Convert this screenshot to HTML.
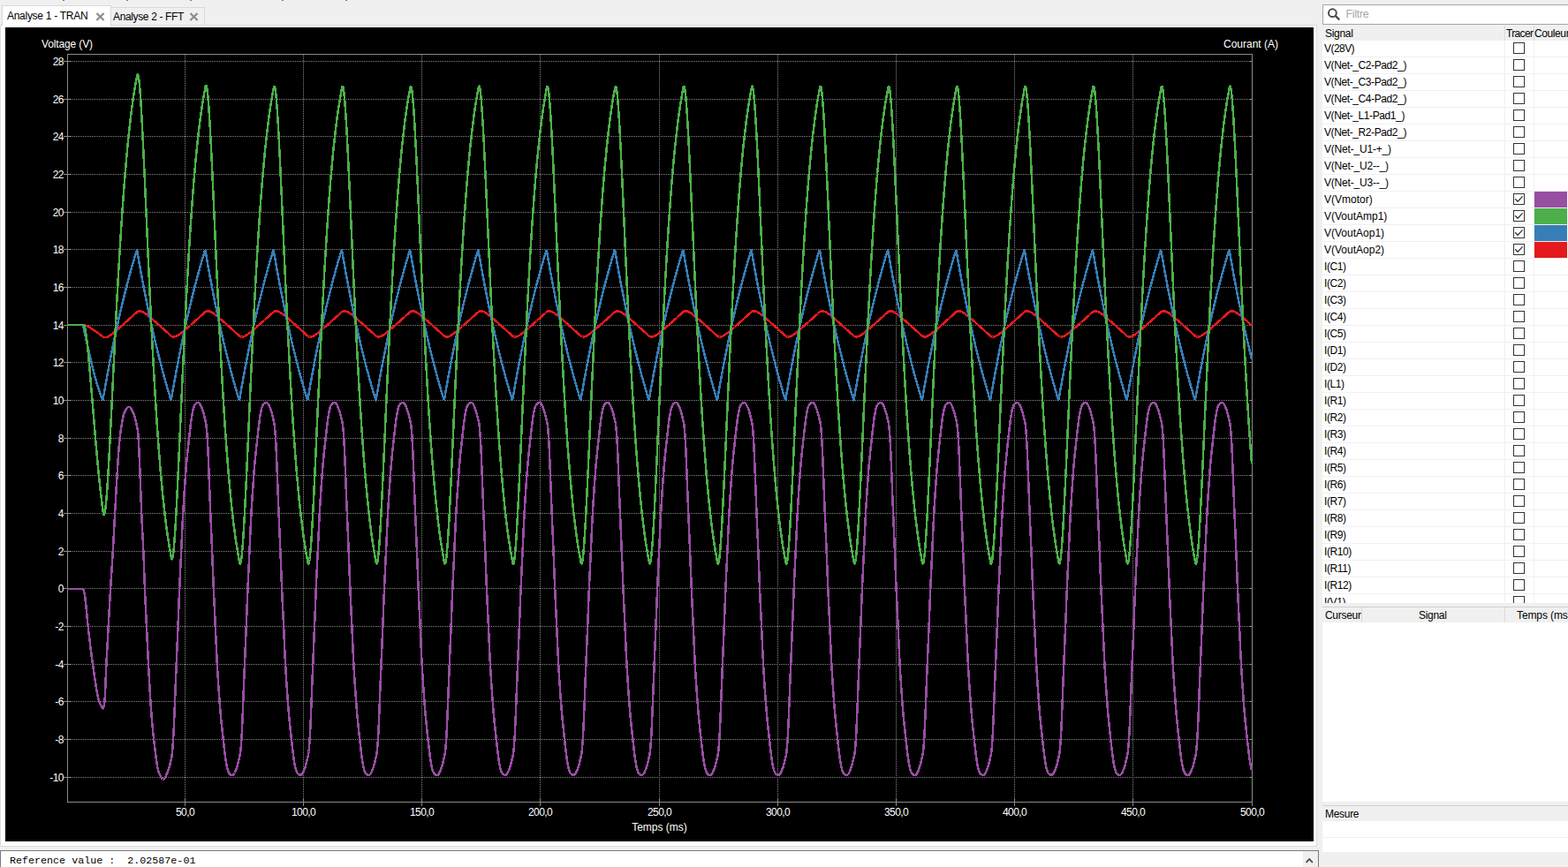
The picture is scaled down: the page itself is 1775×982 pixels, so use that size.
<!DOCTYPE html>
<html lang="fr">
<head>
<meta charset="utf-8">
<title>Simulateur</title>
<style>
*{box-sizing:border-box;margin:0;padding:0}
html,body{width:1775px;height:982px;overflow:hidden;background:#f0f0f0;font-family:"Liberation Sans",sans-serif;font-size:12px;color:#000}
.abs{position:absolute}
#topmarks i{position:absolute;top:0;height:1px;width:2px;background:#777}
#tab1{left:2px;top:6px;width:124px;height:23px;background:#fff;border:1px solid #d9d9d9;border-bottom:none;z-index:3}
#tab2{left:125px;top:8px;width:107px;height:20px;background:#f0f0f0;border:1px solid #d9d9d9;border-bottom:none;z-index:1}
.tab span.t{position:absolute;left:5px;top:4px;white-space:nowrap;font-size:12px;letter-spacing:-0.28px}
.tab svg{position:absolute}
#panel{left:0;top:28px;width:1491px;height:931px;background:#fff;border:1px solid #dcdcdc;z-index:2}
.plot{position:absolute;left:6px;top:31px;z-index:4;display:block}
#log{left:0;top:963px;width:1493px;height:22px;background:#fff;border:1px solid #7a7a7a}
#log .tx{position:absolute;left:10px;top:4px;font-family:"Liberation Mono",monospace;font-size:11.7px;white-space:pre;color:#000}
#log .sb{position:absolute;right:0;top:0;width:17px;height:20px;background:#f0f0f0}
#filter{left:1497px;top:5px;width:300px;height:23px;background:#fff;border:1px solid #a2a5ac}
#filter span{position:absolute;left:25.5px;top:2.5px;color:#a6a6a6;font-size:12.3px;letter-spacing:-0.25px}
#list{left:1497px;top:29px;width:278px;height:654px;background:#fff;overflow:hidden}
.hdr{position:absolute;left:0;top:0;width:100%;height:17px;background:#f0f0f0}
.hdr span{position:absolute;top:2px;white-space:nowrap;font-size:12px;letter-spacing:-0.3px}
.hdr i{position:absolute;top:0;width:1px;height:17px;background:#d9d9d9}
#rows{position:absolute;left:0;top:17px;width:100%}
.row{position:relative;height:19px;border-bottom:1px solid #f0f0f0}
.row .nm{position:absolute;left:2px;top:2px;white-space:nowrap;font-size:12px}
.row .cb{position:absolute;left:216px;top:2px;width:13px;height:13px;border:1px solid #333;background:#fff}
.row .cb svg{position:absolute;left:-1px;top:-1px}
.row .sw{position:absolute;left:240px;top:0;width:37px;height:18px}
.vl{position:absolute;top:17px;width:1px;height:640px;background:#f0f0f0}
#cur{left:1497px;top:687px;width:278px;height:221px;background:#fff;border-top:1px solid #d0d0d0}
#mes{left:1497px;top:912px;width:278px;height:53px;background:#fff;border-top:1px solid #d0d0d0}
</style>
</head>
<body>
<div id="topmarks"><i style="left:71px"></i><i style="left:143px"></i><i style="left:215px"></i><i style="left:319px"></i><i style="left:391px"></i></div>

<div id="tab1" class="abs tab"><span class="t">Analyse 1 - TRAN</span>
<svg width="11" height="10" viewBox="0 0 11 10" style="left:105px;top:6.5px"><path d="M1.4 1 L9.6 9 M9.6 1 L1.4 9" stroke="#8a8a8a" stroke-width="2.1" fill="none"/></svg></div>
<div id="tab2" class="abs tab"><span class="t" style="left:2px;top:3px;letter-spacing:-0.36px">Analyse 2 - FFT</span>
<svg width="11" height="10" viewBox="0 0 11 10" style="left:88px;top:4.5px"><path d="M1.4 1 L9.6 9 M9.6 1 L1.4 9" stroke="#8a8a8a" stroke-width="2.1" fill="none"/></svg></div>

<div id="panel" class="abs"></div>
<svg class="plot" width="1481" height="922" viewBox="0 0 1481 922" shape-rendering="crispEdges">
<rect x="0" y="0" width="1481" height="922" fill="#000"/>
<line x1="76" y1="849.5" x2="1411" y2="849.5" stroke="#888888" stroke-width="1" stroke-dasharray="1 1"/>
<line x1="66" y1="849.5" x2="75" y2="849.5" stroke="#8a8a8a" stroke-width="1"/>
<line x1="1408" y1="849.5" x2="1412" y2="849.5" stroke="#8a8a8a" stroke-width="1"/>
<line x1="76" y1="806.5" x2="1411" y2="806.5" stroke="#888888" stroke-width="1" stroke-dasharray="1 1"/>
<line x1="66" y1="806.5" x2="75" y2="806.5" stroke="#8a8a8a" stroke-width="1"/>
<line x1="1408" y1="806.5" x2="1412" y2="806.5" stroke="#8a8a8a" stroke-width="1"/>
<line x1="76" y1="763.5" x2="1411" y2="763.5" stroke="#888888" stroke-width="1" stroke-dasharray="1 1"/>
<line x1="66" y1="763.5" x2="75" y2="763.5" stroke="#8a8a8a" stroke-width="1"/>
<line x1="1408" y1="763.5" x2="1412" y2="763.5" stroke="#8a8a8a" stroke-width="1"/>
<line x1="76" y1="721.5" x2="1411" y2="721.5" stroke="#888888" stroke-width="1" stroke-dasharray="1 1"/>
<line x1="66" y1="721.5" x2="75" y2="721.5" stroke="#8a8a8a" stroke-width="1"/>
<line x1="1408" y1="721.5" x2="1412" y2="721.5" stroke="#8a8a8a" stroke-width="1"/>
<line x1="76" y1="678.5" x2="1411" y2="678.5" stroke="#888888" stroke-width="1" stroke-dasharray="1 1"/>
<line x1="66" y1="678.5" x2="75" y2="678.5" stroke="#8a8a8a" stroke-width="1"/>
<line x1="1408" y1="678.5" x2="1412" y2="678.5" stroke="#8a8a8a" stroke-width="1"/>
<line x1="76" y1="635.5" x2="1411" y2="635.5" stroke="#888888" stroke-width="1" stroke-dasharray="1 1"/>
<line x1="66" y1="635.5" x2="75" y2="635.5" stroke="#8a8a8a" stroke-width="1"/>
<line x1="1408" y1="635.5" x2="1412" y2="635.5" stroke="#8a8a8a" stroke-width="1"/>
<line x1="76" y1="593.5" x2="1411" y2="593.5" stroke="#888888" stroke-width="1" stroke-dasharray="1 1"/>
<line x1="66" y1="593.5" x2="75" y2="593.5" stroke="#8a8a8a" stroke-width="1"/>
<line x1="1408" y1="593.5" x2="1412" y2="593.5" stroke="#8a8a8a" stroke-width="1"/>
<line x1="76" y1="550.5" x2="1411" y2="550.5" stroke="#888888" stroke-width="1" stroke-dasharray="1 1"/>
<line x1="66" y1="550.5" x2="75" y2="550.5" stroke="#8a8a8a" stroke-width="1"/>
<line x1="1408" y1="550.5" x2="1412" y2="550.5" stroke="#8a8a8a" stroke-width="1"/>
<line x1="76" y1="507.5" x2="1411" y2="507.5" stroke="#888888" stroke-width="1" stroke-dasharray="1 1"/>
<line x1="66" y1="507.5" x2="75" y2="507.5" stroke="#8a8a8a" stroke-width="1"/>
<line x1="1408" y1="507.5" x2="1412" y2="507.5" stroke="#8a8a8a" stroke-width="1"/>
<line x1="76" y1="465.5" x2="1411" y2="465.5" stroke="#888888" stroke-width="1" stroke-dasharray="1 1"/>
<line x1="66" y1="465.5" x2="75" y2="465.5" stroke="#8a8a8a" stroke-width="1"/>
<line x1="1408" y1="465.5" x2="1412" y2="465.5" stroke="#8a8a8a" stroke-width="1"/>
<line x1="76" y1="422.5" x2="1411" y2="422.5" stroke="#888888" stroke-width="1" stroke-dasharray="1 1"/>
<line x1="66" y1="422.5" x2="75" y2="422.5" stroke="#8a8a8a" stroke-width="1"/>
<line x1="1408" y1="422.5" x2="1412" y2="422.5" stroke="#8a8a8a" stroke-width="1"/>
<line x1="76" y1="379.5" x2="1411" y2="379.5" stroke="#888888" stroke-width="1" stroke-dasharray="1 1"/>
<line x1="66" y1="379.5" x2="75" y2="379.5" stroke="#8a8a8a" stroke-width="1"/>
<line x1="1408" y1="379.5" x2="1412" y2="379.5" stroke="#8a8a8a" stroke-width="1"/>
<line x1="76" y1="337.5" x2="1411" y2="337.5" stroke="#888888" stroke-width="1" stroke-dasharray="1 1"/>
<line x1="66" y1="337.5" x2="75" y2="337.5" stroke="#8a8a8a" stroke-width="1"/>
<line x1="1408" y1="337.5" x2="1412" y2="337.5" stroke="#8a8a8a" stroke-width="1"/>
<line x1="76" y1="294.5" x2="1411" y2="294.5" stroke="#888888" stroke-width="1" stroke-dasharray="1 1"/>
<line x1="66" y1="294.5" x2="75" y2="294.5" stroke="#8a8a8a" stroke-width="1"/>
<line x1="1408" y1="294.5" x2="1412" y2="294.5" stroke="#8a8a8a" stroke-width="1"/>
<line x1="76" y1="251.5" x2="1411" y2="251.5" stroke="#888888" stroke-width="1" stroke-dasharray="1 1"/>
<line x1="66" y1="251.5" x2="75" y2="251.5" stroke="#8a8a8a" stroke-width="1"/>
<line x1="1408" y1="251.5" x2="1412" y2="251.5" stroke="#8a8a8a" stroke-width="1"/>
<line x1="76" y1="209.5" x2="1411" y2="209.5" stroke="#888888" stroke-width="1" stroke-dasharray="1 1"/>
<line x1="66" y1="209.5" x2="75" y2="209.5" stroke="#8a8a8a" stroke-width="1"/>
<line x1="1408" y1="209.5" x2="1412" y2="209.5" stroke="#8a8a8a" stroke-width="1"/>
<line x1="76" y1="166.5" x2="1411" y2="166.5" stroke="#888888" stroke-width="1" stroke-dasharray="1 1"/>
<line x1="66" y1="166.5" x2="75" y2="166.5" stroke="#8a8a8a" stroke-width="1"/>
<line x1="1408" y1="166.5" x2="1412" y2="166.5" stroke="#8a8a8a" stroke-width="1"/>
<line x1="76" y1="123.5" x2="1411" y2="123.5" stroke="#888888" stroke-width="1" stroke-dasharray="1 1"/>
<line x1="66" y1="123.5" x2="75" y2="123.5" stroke="#8a8a8a" stroke-width="1"/>
<line x1="1408" y1="123.5" x2="1412" y2="123.5" stroke="#8a8a8a" stroke-width="1"/>
<line x1="76" y1="81.5" x2="1411" y2="81.5" stroke="#888888" stroke-width="1" stroke-dasharray="1 1"/>
<line x1="66" y1="81.5" x2="75" y2="81.5" stroke="#8a8a8a" stroke-width="1"/>
<line x1="1408" y1="81.5" x2="1412" y2="81.5" stroke="#8a8a8a" stroke-width="1"/>
<line x1="76" y1="38.5" x2="1411" y2="38.5" stroke="#888888" stroke-width="1" stroke-dasharray="1 1"/>
<line x1="66" y1="38.5" x2="75" y2="38.5" stroke="#8a8a8a" stroke-width="1"/>
<line x1="1408" y1="38.5" x2="1412" y2="38.5" stroke="#8a8a8a" stroke-width="1"/>
<line x1="203.5" y1="31" x2="203.5" y2="873" stroke="#888888" stroke-width="1" stroke-dasharray="1 1"/>
<line x1="203.5" y1="873" x2="203.5" y2="882" stroke="#8a8a8a" stroke-width="1"/>
<line x1="337.5" y1="31" x2="337.5" y2="873" stroke="#888888" stroke-width="1" stroke-dasharray="1 1"/>
<line x1="337.5" y1="873" x2="337.5" y2="882" stroke="#8a8a8a" stroke-width="1"/>
<line x1="471.5" y1="31" x2="471.5" y2="873" stroke="#888888" stroke-width="1" stroke-dasharray="1 1"/>
<line x1="471.5" y1="873" x2="471.5" y2="882" stroke="#8a8a8a" stroke-width="1"/>
<line x1="605.5" y1="31" x2="605.5" y2="873" stroke="#888888" stroke-width="1" stroke-dasharray="1 1"/>
<line x1="605.5" y1="873" x2="605.5" y2="882" stroke="#8a8a8a" stroke-width="1"/>
<line x1="740.5" y1="31" x2="740.5" y2="873" stroke="#888888" stroke-width="1" stroke-dasharray="1 1"/>
<line x1="740.5" y1="873" x2="740.5" y2="882" stroke="#8a8a8a" stroke-width="1"/>
<line x1="874.5" y1="31" x2="874.5" y2="873" stroke="#888888" stroke-width="1" stroke-dasharray="1 1"/>
<line x1="874.5" y1="873" x2="874.5" y2="882" stroke="#8a8a8a" stroke-width="1"/>
<line x1="1008.5" y1="31" x2="1008.5" y2="873" stroke="#888888" stroke-width="1" stroke-dasharray="1 1"/>
<line x1="1008.5" y1="873" x2="1008.5" y2="882" stroke="#8a8a8a" stroke-width="1"/>
<line x1="1142.5" y1="31" x2="1142.5" y2="873" stroke="#888888" stroke-width="1" stroke-dasharray="1 1"/>
<line x1="1142.5" y1="873" x2="1142.5" y2="882" stroke="#8a8a8a" stroke-width="1"/>
<line x1="1276.5" y1="31" x2="1276.5" y2="873" stroke="#888888" stroke-width="1" stroke-dasharray="1 1"/>
<line x1="1276.5" y1="873" x2="1276.5" y2="882" stroke="#8a8a8a" stroke-width="1"/>
<line x1="1411.5" y1="31" x2="1411.5" y2="873" stroke="#888888" stroke-width="1" stroke-dasharray="1 1"/>
<line x1="1411.5" y1="873" x2="1411.5" y2="882" stroke="#8a8a8a" stroke-width="1"/>
<rect x="70.5" y="30.5" width="1341" height="847" fill="none" stroke="#8a8a8a" stroke-width="1"/>
<polyline fill="none" stroke="#e41a1c" stroke-width="2.5" stroke-linejoin="round" shape-rendering="crispEdges" points="70.0,337.2 70.5,337.2 71.0,337.2 71.5,337.2 72.0,337.2 72.5,337.2 73.0,337.2 73.5,337.2 74.0,337.2 74.5,337.2 75.0,337.2 75.5,337.2 76.0,337.2 76.5,337.2 77.0,337.2 77.5,337.2 78.0,337.2 78.5,337.2 79.0,337.2 79.5,337.2 80.0,337.2 80.5,337.2 81.0,337.2 81.5,337.2 82.0,337.2 82.5,337.2 83.0,337.2 83.5,337.2 84.0,337.2 84.5,337.2 85.0,337.2 85.5,337.2 86.0,337.2 86.5,337.2 87.0,337.2 87.5,337.2 88.0,337.2 88.5,337.2 89.0,337.2 89.5,337.3 90.0,337.4 90.5,337.5 91.0,337.7 91.5,337.8 92.0,338.0 92.5,338.2 93.0,338.5 93.5,338.7 94.0,339.0 94.5,339.2 95.0,339.5 95.5,339.8 96.0,340.1 96.5,340.4 97.0,340.7 97.5,341.0 98.0,341.4 98.5,341.7 99.0,342.0 99.5,342.4 100.0,342.7 100.5,343.0 101.0,343.4 101.5,343.7 102.0,344.1 102.5,344.5 103.0,344.8 103.5,345.2 104.0,345.6 104.5,345.9 105.0,346.3 105.5,346.7 106.0,347.0 106.5,347.4 107.0,347.8 107.5,348.1 108.0,348.5 108.5,348.9 109.0,349.3 109.5,349.7 110.0,350.0 110.5,350.4 111.0,350.7 111.5,350.9 112.0,351.0 112.5,351.1 113.0,351.1 113.5,351.1 114.0,351.0 114.5,350.9 115.0,350.8 115.5,350.6 116.0,350.4 116.5,350.1 117.0,349.9 117.5,349.6 118.0,349.3 118.5,348.9 119.0,348.6 119.5,348.3 120.0,347.9 120.5,347.5 121.0,347.2 121.5,346.8 122.0,346.4 122.5,346.0 123.0,345.6 123.5,345.2 124.0,344.8 124.5,344.3 125.0,343.9 125.5,343.5 126.0,343.1 126.5,342.6 127.0,342.2 127.5,341.8 128.0,341.3 128.5,340.9 129.0,340.4 129.5,340.0 130.0,339.6 130.5,339.1 131.0,338.7 131.5,338.2 132.0,337.8 132.5,337.3 133.0,336.9 133.5,336.4 134.0,336.0 134.5,335.5 135.0,335.1 135.5,334.6 136.0,334.2 136.5,333.7 137.0,333.3 137.5,332.8 138.0,332.4 138.5,331.9 139.0,331.5 139.5,331.0 140.0,330.6 140.5,330.1 141.0,329.7 141.5,329.2 142.0,328.8 142.5,328.3 143.0,327.9 143.5,327.4 144.0,327.0 144.5,326.5 145.0,326.1 145.5,325.6 146.0,325.2 146.5,324.7 147.0,324.3 147.5,323.8 148.0,323.3 148.5,322.9 149.0,322.4 149.5,322.1 150.0,321.8 150.5,321.6 151.0,321.4 151.5,321.3 152.0,321.3 152.5,321.3 153.0,321.4 153.5,321.5 154.0,321.7 154.5,321.9 155.0,322.1 155.5,322.3 156.0,322.6 156.5,322.8 157.0,323.1 157.5,323.4 158.0,323.8 158.5,324.1 159.0,324.4 159.5,324.8 160.0,325.2 160.5,325.6 161.0,325.9 161.5,326.3 162.0,326.7 162.5,327.1 163.0,327.6 163.5,328.0 164.0,328.4 164.5,328.8 165.0,329.2 165.5,329.7 166.0,330.1 166.5,330.5 167.0,330.9 167.5,331.4 168.0,331.8 168.5,332.3 169.0,332.7 169.5,333.1 170.0,333.6 170.5,334.0 171.0,334.5 171.5,334.9 172.0,335.4 172.5,335.8 173.0,336.2 173.5,336.7 174.0,337.1 174.5,337.6 175.0,338.0 175.5,338.5 176.0,338.9 176.5,339.4 177.0,339.8 177.5,340.3 178.0,340.7 178.5,341.2 179.0,341.6 179.5,342.1 180.0,342.5 180.5,343.0 181.0,343.4 181.5,343.9 182.0,344.3 182.5,344.8 183.0,345.2 183.5,345.7 184.0,346.1 184.5,346.6 185.0,347.0 185.5,347.5 186.0,347.9 186.5,348.4 187.0,348.8 187.5,349.3 188.0,349.7 188.5,350.0 189.0,350.2 189.5,350.4 190.0,350.5 190.5,350.5 191.0,350.5 191.5,350.4 192.0,350.3 192.5,350.2 193.0,350.0 193.5,349.8 194.0,349.6 194.5,349.4 195.0,349.1 195.5,348.8 196.0,348.5 196.5,348.2 197.0,347.8 197.5,347.5 198.0,347.1 198.5,346.8 199.0,346.4 199.5,346.0 200.0,345.6 200.5,345.2 201.0,344.8 201.5,344.4 202.0,344.0 202.5,343.6 203.0,343.1 203.5,342.7 204.0,342.3 204.5,341.9 205.0,341.4 205.5,341.0 206.0,340.6 206.5,340.1 207.0,339.7 207.5,339.2 208.0,338.8 208.5,338.4 209.0,337.9 209.5,337.5 210.0,337.0 210.5,336.6 211.0,336.1 211.5,335.7 212.0,335.3 212.5,334.8 213.0,334.4 213.5,333.9 214.0,333.5 214.5,333.0 215.0,332.6 215.5,332.1 216.0,331.7 216.5,331.2 217.0,330.8 217.5,330.3 218.0,329.9 218.5,329.4 219.0,329.0 219.5,328.5 220.0,328.1 220.5,327.6 221.0,327.2 221.5,326.7 222.0,326.3 222.5,325.8 223.0,325.4 223.5,324.9 224.0,324.5 224.5,324.0 225.0,323.6 225.5,323.1 226.0,322.7 226.5,322.2 227.0,321.9 227.5,321.6 228.0,321.5 228.5,321.4 229.0,321.3 229.5,321.3 230.0,321.4 230.5,321.4 231.0,321.6 231.5,321.7 232.0,321.9 232.5,322.1 233.0,322.4 233.5,322.7 234.0,322.9 234.5,323.2 235.0,323.6 235.5,323.9 236.0,324.2 236.5,324.6 237.0,325.0 237.5,325.3 238.0,325.7 238.5,326.1 239.0,326.5 239.5,326.9 240.0,327.3 240.5,327.7 241.0,328.1 241.5,328.6 242.0,329.0 242.5,329.4 243.0,329.8 243.5,330.3 244.0,330.7 244.5,331.1 245.0,331.6 245.5,332.0 246.0,332.4 246.5,332.9 247.0,333.3 247.5,333.8 248.0,334.2 248.5,334.7 249.0,335.1 249.5,335.5 250.0,336.0 250.5,336.4 251.0,336.9 251.5,337.3 252.0,337.8 252.5,338.2 253.0,338.7 253.5,339.1 254.0,339.6 254.5,340.0 255.0,340.5 255.5,340.9 256.0,341.4 256.5,341.8 257.0,342.3 257.5,342.7 258.0,343.2 258.5,343.6 259.0,344.1 259.5,344.5 260.0,345.0 260.5,345.4 261.0,345.9 261.5,346.3 262.0,346.8 262.5,347.2 263.0,347.7 263.5,348.1 264.0,348.6 264.5,349.0 265.0,349.5 265.5,349.8 266.0,350.1 266.5,350.3 267.0,350.4 267.5,350.5 268.0,350.5 268.5,350.5 269.0,350.4 269.5,350.3 270.0,350.1 270.5,349.9 271.0,349.7 271.5,349.5 272.0,349.2 272.5,349.0 273.0,348.7 273.5,348.3 274.0,348.0 274.5,347.7 275.0,347.3 275.5,347.0 276.0,346.6 276.5,346.2 277.0,345.8 277.5,345.4 278.0,345.0 278.5,344.6 279.0,344.2 279.5,343.8 280.0,343.4 280.5,343.0 281.0,342.5 281.5,342.1 282.0,341.7 282.5,341.2 283.0,340.8 283.5,340.4 284.0,339.9 284.5,339.5 285.0,339.1 285.5,338.6 286.0,338.2 286.5,337.7 287.0,337.3 287.5,336.8 288.0,336.4 288.5,335.9 289.0,335.5 289.5,335.1 290.0,334.6 290.5,334.2 291.0,333.7 291.5,333.3 292.0,332.8 292.5,332.4 293.0,331.9 293.5,331.5 294.0,331.0 294.5,330.6 295.0,330.1 295.5,329.7 296.0,329.2 296.5,328.8 297.0,328.3 297.5,327.9 298.0,327.4 298.5,327.0 299.0,326.5 299.5,326.1 300.0,325.6 300.5,325.2 301.0,324.7 301.5,324.3 302.0,323.8 302.5,323.4 303.0,322.9 303.5,322.5 304.0,322.1 304.5,321.8 305.0,321.6 305.5,321.4 306.0,321.3 306.5,321.3 307.0,321.3 307.5,321.4 308.0,321.5 308.5,321.6 309.0,321.8 309.5,322.0 310.0,322.2 310.5,322.5 311.0,322.8 311.5,323.1 312.0,323.4 312.5,323.7 313.0,324.0 313.5,324.4 314.0,324.7 314.5,325.1 315.0,325.5 315.5,325.9 316.0,326.3 316.5,326.7 317.0,327.1 317.5,327.5 318.0,327.9 318.5,328.3 319.0,328.7 319.5,329.2 320.0,329.6 320.5,330.0 321.0,330.5 321.5,330.9 322.0,331.3 322.5,331.8 323.0,332.2 323.5,332.6 324.0,333.1 324.5,333.5 325.0,334.0 325.5,334.4 326.0,334.9 326.5,335.3 327.0,335.7 327.5,336.2 328.0,336.6 328.5,337.1 329.0,337.5 329.5,338.0 330.0,338.4 330.5,338.9 331.0,339.3 331.5,339.8 332.0,340.2 332.5,340.7 333.0,341.1 333.5,341.6 334.0,342.0 334.5,342.5 335.0,342.9 335.5,343.4 336.0,343.8 336.5,344.3 337.0,344.7 337.5,345.2 338.0,345.6 338.5,346.1 339.0,346.5 339.5,347.0 340.0,347.4 340.5,347.9 341.0,348.3 341.5,348.8 342.0,349.2 342.5,349.6 343.0,350.0 343.5,350.2 344.0,350.4 344.5,350.5 345.0,350.5 345.5,350.5 346.0,350.5 346.5,350.4 347.0,350.2 347.5,350.1 348.0,349.9 348.5,349.6 349.0,349.4 349.5,349.1 350.0,348.8 350.5,348.5 351.0,348.2 351.5,347.9 352.0,347.5 352.5,347.2 353.0,346.8 353.5,346.4 354.0,346.0 354.5,345.6 355.0,345.3 355.5,344.8 356.0,344.4 356.5,344.0 357.0,343.6 357.5,343.2 358.0,342.8 358.5,342.3 359.0,341.9 359.5,341.5 360.0,341.0 360.5,340.6 361.0,340.2 361.5,339.7 362.0,339.3 362.5,338.9 363.0,338.4 363.5,338.0 364.0,337.5 364.5,337.1 365.0,336.6 365.5,336.2 366.0,335.8 366.5,335.3 367.0,334.9 367.5,334.4 368.0,334.0 368.5,333.5 369.0,333.1 369.5,332.6 370.0,332.2 370.5,331.7 371.0,331.3 371.5,330.8 372.0,330.4 372.5,329.9 373.0,329.5 373.5,329.0 374.0,328.6 374.5,328.1 375.0,327.7 375.5,327.2 376.0,326.8 376.5,326.3 377.0,325.9 377.5,325.4 378.0,325.0 378.5,324.5 379.0,324.1 379.5,323.6 380.0,323.2 380.5,322.7 381.0,322.3 381.5,321.9 382.0,321.7 382.5,321.5 383.0,321.4 383.5,321.3 384.0,321.3 384.5,321.3 385.0,321.4 385.5,321.6 386.0,321.7 386.5,321.9 387.0,322.1 387.5,322.4 388.0,322.6 388.5,322.9 389.0,323.2 389.5,323.5 390.0,323.8 390.5,324.2 391.0,324.5 391.5,324.9 392.0,325.3 392.5,325.7 393.0,326.1 393.5,326.5 394.0,326.9 394.5,327.3 395.0,327.7 395.5,328.1 396.0,328.5 396.5,328.9 397.0,329.4 397.5,329.8 398.0,330.2 398.5,330.6 399.0,331.1 399.5,331.5 400.0,332.0 400.5,332.4 401.0,332.8 401.5,333.3 402.0,333.7 402.5,334.2 403.0,334.6 403.5,335.0 404.0,335.5 404.5,335.9 405.0,336.4 405.5,336.8 406.0,337.3 406.5,337.7 407.0,338.2 407.5,338.6 408.0,339.1 408.5,339.5 409.0,340.0 409.5,340.4 410.0,340.9 410.5,341.3 411.0,341.8 411.5,342.2 412.0,342.7 412.5,343.1 413.0,343.6 413.5,344.0 414.0,344.5 414.5,344.9 415.0,345.4 415.5,345.8 416.0,346.3 416.5,346.7 417.0,347.2 417.5,347.6 418.0,348.1 418.5,348.5 419.0,349.0 419.5,349.4 420.0,349.8 420.5,350.1 421.0,350.3 421.5,350.4 422.0,350.5 422.5,350.5 423.0,350.5 423.5,350.4 424.0,350.3 424.5,350.2 425.0,350.0 425.5,349.8 426.0,349.5 426.5,349.3 427.0,349.0 427.5,348.7 428.0,348.4 428.5,348.1 429.0,347.7 429.5,347.4 430.0,347.0 430.5,346.6 431.0,346.3 431.5,345.9 432.0,345.5 432.5,345.1 433.0,344.7 433.5,344.3 434.0,343.8 434.5,343.4 435.0,343.0 435.5,342.6 436.0,342.2 436.5,341.7 437.0,341.3 437.5,340.9 438.0,340.4 438.5,340.0 439.0,339.5 439.5,339.1 440.0,338.7 440.5,338.2 441.0,337.8 441.5,337.3 442.0,336.9 442.5,336.4 443.0,336.0 443.5,335.6 444.0,335.1 444.5,334.7 445.0,334.2 445.5,333.8 446.0,333.3 446.5,332.9 447.0,332.4 447.5,332.0 448.0,331.5 448.5,331.1 449.0,330.6 449.5,330.2 450.0,329.7 450.5,329.3 451.0,328.8 451.5,328.4 452.0,327.9 452.5,327.5 453.0,327.0 453.5,326.6 454.0,326.1 454.5,325.7 455.0,325.2 455.5,324.8 456.0,324.3 456.5,323.9 457.0,323.4 457.5,323.0 458.0,322.5 458.5,322.1 459.0,321.8 459.5,321.6 460.0,321.4 460.5,321.3 461.0,321.3 461.5,321.3 462.0,321.4 462.5,321.5 463.0,321.6 463.5,321.8 464.0,322.0 464.5,322.2 465.0,322.5 465.5,322.7 466.0,323.0 466.5,323.3 467.0,323.7 467.5,324.0 468.0,324.3 468.5,324.7 469.0,325.1 469.5,325.5 470.0,325.8 470.5,326.2 471.0,326.6 471.5,327.0 472.0,327.4 472.5,327.9 473.0,328.3 473.5,328.7 474.0,329.1 474.5,329.5 475.0,330.0 475.5,330.4 476.0,330.8 476.5,331.3 477.0,331.7 477.5,332.1 478.0,332.6 478.5,333.0 479.0,333.5 479.5,333.9 480.0,334.4 480.5,334.8 481.0,335.2 481.5,335.7 482.0,336.1 482.5,336.6 483.0,337.0 483.5,337.5 484.0,337.9 484.5,338.4 485.0,338.8 485.5,339.3 486.0,339.7 486.5,340.2 487.0,340.6 487.5,341.1 488.0,341.5 488.5,342.0 489.0,342.4 489.5,342.9 490.0,343.3 490.5,343.8 491.0,344.2 491.5,344.7 492.0,345.1 492.5,345.6 493.0,346.0 493.5,346.5 494.0,346.9 494.5,347.4 495.0,347.8 495.5,348.3 496.0,348.7 496.5,349.2 497.0,349.6 497.5,349.9 498.0,350.2 498.5,350.4 499.0,350.5 499.5,350.5 500.0,350.5 500.5,350.5 501.0,350.4 501.5,350.2 502.0,350.1 502.5,349.9 503.0,349.7 503.5,349.4 504.0,349.2 504.5,348.9 505.0,348.6 505.5,348.2 506.0,347.9 506.5,347.6 507.0,347.2 507.5,346.8 508.0,346.5 508.5,346.1 509.0,345.7 509.5,345.3 510.0,344.9 510.5,344.5 511.0,344.1 511.5,343.7 512.0,343.2 512.5,342.8 513.0,342.4 513.5,342.0 514.0,341.5 514.5,341.1 515.0,340.7 515.5,340.2 516.0,339.8 516.5,339.4 517.0,338.9 517.5,338.5 518.0,338.0 518.5,337.6 519.0,337.1 519.5,336.7 520.0,336.3 520.5,335.8 521.0,335.4 521.5,334.9 522.0,334.5 522.5,334.0 523.0,333.6 523.5,333.1 524.0,332.7 524.5,332.2 525.0,331.8 525.5,331.3 526.0,330.9 526.5,330.4 527.0,330.0 527.5,329.5 528.0,329.1 528.5,328.6 529.0,328.2 529.5,327.7 530.0,327.3 530.5,326.8 531.0,326.4 531.5,325.9 532.0,325.5 532.5,325.0 533.0,324.6 533.5,324.1 534.0,323.7 534.5,323.2 535.0,322.8 535.5,322.3 536.0,322.0 536.5,321.7 537.0,321.5 537.5,321.4 538.0,321.3 538.5,321.3 539.0,321.3 539.5,321.4 540.0,321.5 540.5,321.7 541.0,321.9 541.5,322.1 542.0,322.3 542.5,322.6 543.0,322.9 543.5,323.2 544.0,323.5 544.5,323.8 545.0,324.1 545.5,324.5 546.0,324.9 546.5,325.2 547.0,325.6 547.5,326.0 548.0,326.4 548.5,326.8 549.0,327.2 549.5,327.6 550.0,328.0 550.5,328.5 551.0,328.9 551.5,329.3 552.0,329.7 552.5,330.2 553.0,330.6 553.5,331.0 554.0,331.5 554.5,331.9 555.0,332.3 555.5,332.8 556.0,333.2 556.5,333.7 557.0,334.1 557.5,334.5 558.0,335.0 558.5,335.4 559.0,335.9 559.5,336.3 560.0,336.8 560.5,337.2 561.0,337.7 561.5,338.1 562.0,338.6 562.5,339.0 563.0,339.5 563.5,339.9 564.0,340.4 564.5,340.8 565.0,341.3 565.5,341.7 566.0,342.2 566.5,342.6 567.0,343.1 567.5,343.5 568.0,344.0 568.5,344.4 569.0,344.9 569.5,345.3 570.0,345.8 570.5,346.2 571.0,346.7 571.5,347.1 572.0,347.6 572.5,348.0 573.0,348.5 573.5,348.9 574.0,349.4 574.5,349.7 575.0,350.0 575.5,350.3 576.0,350.4 576.5,350.5 577.0,350.5 577.5,350.5 578.0,350.4 578.5,350.3 579.0,350.2 579.5,350.0 580.0,349.8 580.5,349.6 581.0,349.3 581.5,349.0 582.0,348.7 582.5,348.4 583.0,348.1 583.5,347.8 584.0,347.4 584.5,347.1 585.0,346.7 585.5,346.3 586.0,345.9 586.5,345.5 587.0,345.1 587.5,344.7 588.0,344.3 588.5,343.9 589.0,343.5 589.5,343.1 590.0,342.6 590.5,342.2 591.0,341.8 591.5,341.3 592.0,340.9 592.5,340.5 593.0,340.0 593.5,339.6 594.0,339.2 594.5,338.7 595.0,338.3 595.5,337.8 596.0,337.4 596.5,336.9 597.0,336.5 597.5,336.1 598.0,335.6 598.5,335.2 599.0,334.7 599.5,334.3 600.0,333.8 600.5,333.4 601.0,332.9 601.5,332.5 602.0,332.0 602.5,331.6 603.0,331.1 603.5,330.7 604.0,330.2 604.5,329.8 605.0,329.3 605.5,328.9 606.0,328.4 606.5,328.0 607.0,327.5 607.5,327.1 608.0,326.6 608.5,326.2 609.0,325.7 609.5,325.3 610.0,324.8 610.5,324.4 611.0,323.9 611.5,323.5 612.0,323.0 612.5,322.6 613.0,322.2 613.5,321.8 614.0,321.6 614.5,321.4 615.0,321.3 615.5,321.3 616.0,321.3 616.5,321.4 617.0,321.5 617.5,321.6 618.0,321.8 618.5,322.0 619.0,322.2 619.5,322.4 620.0,322.7 620.5,323.0 621.0,323.3 621.5,323.6 622.0,324.0 622.5,324.3 623.0,324.7 623.5,325.0 624.0,325.4 624.5,325.8 625.0,326.2 625.5,326.6 626.0,327.0 626.5,327.4 627.0,327.8 627.5,328.2 628.0,328.6 628.5,329.1 629.0,329.5 629.5,329.9 630.0,330.3 630.5,330.8 631.0,331.2 631.5,331.7 632.0,332.1 632.5,332.5 633.0,333.0 633.5,333.4 634.0,333.9 634.5,334.3 635.0,334.7 635.5,335.2 636.0,335.6 636.5,336.1 637.0,336.5 637.5,337.0 638.0,337.4 638.5,337.9 639.0,338.3 639.5,338.8 640.0,339.2 640.5,339.7 641.0,340.1 641.5,340.6 642.0,341.0 642.5,341.5 643.0,341.9 643.5,342.4 644.0,342.8 644.5,343.3 645.0,343.7 645.5,344.2 646.0,344.6 646.5,345.1 647.0,345.5 647.5,346.0 648.0,346.4 648.5,346.9 649.0,347.3 649.5,347.8 650.0,348.2 650.5,348.7 651.0,349.1 651.5,349.5 652.0,349.9 652.5,350.1 653.0,350.3 653.5,350.5 654.0,350.5 654.5,350.5 655.0,350.5 655.5,350.4 656.0,350.3 656.5,350.1 657.0,349.9 657.5,349.7 658.0,349.5 658.5,349.2 659.0,348.9 659.5,348.6 660.0,348.3 660.5,348.0 661.0,347.6 661.5,347.3 662.0,346.9 662.5,346.5 663.0,346.1 663.5,345.7 664.0,345.3 664.5,344.9 665.0,344.5 665.5,344.1 666.0,343.7 666.5,343.3 667.0,342.9 667.5,342.4 668.0,342.0 668.5,341.6 669.0,341.2 669.5,340.7 670.0,340.3 670.5,339.8 671.0,339.4 671.5,339.0 672.0,338.5 672.5,338.1 673.0,337.6 673.5,337.2 674.0,336.7 674.5,336.3 675.0,335.9 675.5,335.4 676.0,335.0 676.5,334.5 677.0,334.1 677.5,333.6 678.0,333.2 678.5,332.7 679.0,332.3 679.5,331.8 680.0,331.4 680.5,330.9 681.0,330.5 681.5,330.0 682.0,329.6 682.5,329.1 683.0,328.7 683.5,328.2 684.0,327.8 684.5,327.3 685.0,326.9 685.5,326.4 686.0,326.0 686.5,325.5 687.0,325.1 687.5,324.6 688.0,324.2 688.5,323.7 689.0,323.3 689.5,322.8 690.0,322.4 690.5,322.0 691.0,321.7 691.5,321.5 692.0,321.4 692.5,321.3 693.0,321.3 693.5,321.3 694.0,321.4 694.5,321.5 695.0,321.7 695.5,321.8 696.0,322.1 696.5,322.3 697.0,322.6 697.5,322.8 698.0,323.1 698.5,323.4 699.0,323.8 699.5,324.1 700.0,324.5 700.5,324.8 701.0,325.2 701.5,325.6 702.0,326.0 702.5,326.4 703.0,326.8 703.5,327.2 704.0,327.6 704.5,328.0 705.0,328.4 705.5,328.8 706.0,329.3 706.5,329.7 707.0,330.1 707.5,330.5 708.0,331.0 708.5,331.4 709.0,331.8 709.5,332.3 710.0,332.7 710.5,333.2 711.0,333.6 711.5,334.1 712.0,334.5 712.5,334.9 713.0,335.4 713.5,335.8 714.0,336.3 714.5,336.7 715.0,337.2 715.5,337.6 716.0,338.1 716.5,338.5 717.0,339.0 717.5,339.4 718.0,339.9 718.5,340.3 719.0,340.8 719.5,341.2 720.0,341.7 720.5,342.1 721.0,342.6 721.5,343.0 722.0,343.5 722.5,343.9 723.0,344.4 723.5,344.8 724.0,345.3 724.5,345.7 725.0,346.2 725.5,346.6 726.0,347.1 726.5,347.5 727.0,348.0 727.5,348.4 728.0,348.9 728.5,349.3 729.0,349.7 729.5,350.0 730.0,350.2 730.5,350.4 731.0,350.5 731.5,350.5 732.0,350.5 732.5,350.4 733.0,350.3 733.5,350.2 734.0,350.0 734.5,349.8 735.0,349.6 735.5,349.3 736.0,349.1 736.5,348.8 737.0,348.5 737.5,348.1 738.0,347.8 738.5,347.5 739.0,347.1 739.5,346.7 740.0,346.3 740.5,346.0 741.0,345.6 741.5,345.2 742.0,344.8 742.5,344.4 743.0,343.9 743.5,343.5 744.0,343.1 744.5,342.7 745.0,342.3 745.5,341.8 746.0,341.4 746.5,341.0 747.0,340.5 747.5,340.1 748.0,339.7 748.5,339.2 749.0,338.8 749.5,338.3 750.0,337.9 750.5,337.4 751.0,337.0 751.5,336.6 752.0,336.1 752.5,335.7 753.0,335.2 753.5,334.8 754.0,334.3 754.5,333.9 755.0,333.4 755.5,333.0 756.0,332.5 756.5,332.1 757.0,331.6 757.5,331.2 758.0,330.7 758.5,330.3 759.0,329.8 759.5,329.4 760.0,328.9 760.5,328.5 761.0,328.0 761.5,327.6 762.0,327.1 762.5,326.7 763.0,326.2 763.5,325.8 764.0,325.3 764.5,324.9 765.0,324.4 765.5,324.0 766.0,323.5 766.5,323.1 767.0,322.6 767.5,322.2 768.0,321.9 768.5,321.6 769.0,321.5 769.5,321.4 770.0,321.3 770.5,321.3 771.0,321.4 771.5,321.4 772.0,321.6 772.5,321.7 773.0,321.9 773.5,322.2 774.0,322.4 774.5,322.7 775.0,323.0 775.5,323.3 776.0,323.6 776.5,323.9 777.0,324.3 777.5,324.6 778.0,325.0 778.5,325.4 779.0,325.7 779.5,326.1 780.0,326.5 780.5,326.9 781.0,327.3 781.5,327.8 782.0,328.2 782.5,328.6 783.0,329.0 783.5,329.4 784.0,329.9 784.5,330.3 785.0,330.7 785.5,331.2 786.0,331.6 786.5,332.0 787.0,332.5 787.5,332.9 788.0,333.4 788.5,333.8 789.0,334.2 789.5,334.7 790.0,335.1 790.5,335.6 791.0,336.0 791.5,336.5 792.0,336.9 792.5,337.4 793.0,337.8 793.5,338.3 794.0,338.7 794.5,339.2 795.0,339.6 795.5,340.1 796.0,340.5 796.5,341.0 797.0,341.4 797.5,341.9 798.0,342.3 798.5,342.8 799.0,343.2 799.5,343.7 800.0,344.1 800.5,344.6 801.0,345.0 801.5,345.5 802.0,345.9 802.5,346.4 803.0,346.8 803.5,347.3 804.0,347.7 804.5,348.2 805.0,348.6 805.5,349.1 806.0,349.5 806.5,349.9 807.0,350.1 807.5,350.3 808.0,350.4 808.5,350.5 809.0,350.5 809.5,350.5 810.0,350.4 810.5,350.3 811.0,350.1 811.5,349.9 812.0,349.7 812.5,349.5 813.0,349.2 813.5,348.9 814.0,348.6 814.5,348.3 815.0,348.0 815.5,347.7 816.0,347.3 816.5,346.9 817.0,346.6 817.5,346.2 818.0,345.8 818.5,345.4 819.0,345.0 819.5,344.6 820.0,344.2 820.5,343.8 821.0,343.3 821.5,342.9 822.0,342.5 822.5,342.1 823.0,341.6 823.5,341.2 824.0,340.8 824.5,340.3 825.0,339.9 825.5,339.5 826.0,339.0 826.5,338.6 827.0,338.1 827.5,337.7 828.0,337.2 828.5,336.8 829.0,336.4 829.5,335.9 830.0,335.5 830.5,335.0 831.0,334.6 831.5,334.1 832.0,333.7 832.5,333.2 833.0,332.8 833.5,332.3 834.0,331.9 834.5,331.4 835.0,331.0 835.5,330.5 836.0,330.1 836.5,329.6 837.0,329.2 837.5,328.7 838.0,328.3 838.5,327.8 839.0,327.4 839.5,326.9 840.0,326.5 840.5,326.0 841.0,325.6 841.5,325.1 842.0,324.7 842.5,324.2 843.0,323.8 843.5,323.3 844.0,322.9 844.5,322.4 845.0,322.1 845.5,321.8 846.0,321.5 846.5,321.4 847.0,321.3 847.5,321.3 848.0,321.3 848.5,321.4 849.0,321.5 849.5,321.6 850.0,321.8 850.5,322.0 851.0,322.3 851.5,322.5 852.0,322.8 852.5,323.1 853.0,323.4 853.5,323.7 854.0,324.1 854.5,324.4 855.0,324.8 855.5,325.1 856.0,325.5 856.5,325.9 857.0,326.3 857.5,326.7 858.0,327.1 858.5,327.5 859.0,327.9 859.5,328.4 860.0,328.8 860.5,329.2 861.0,329.6 861.5,330.1 862.0,330.5 862.5,330.9 863.0,331.4 863.5,331.8 864.0,332.2 864.5,332.7 865.0,333.1 865.5,333.6 866.0,334.0 866.5,334.4 867.0,334.9 867.5,335.3 868.0,335.8 868.5,336.2 869.0,336.7 869.5,337.1 870.0,337.6 870.5,338.0 871.0,338.5 871.5,338.9 872.0,339.4 872.5,339.8 873.0,340.3 873.5,340.7 874.0,341.2 874.5,341.6 875.0,342.1 875.5,342.5 876.0,343.0 876.5,343.4 877.0,343.9 877.5,344.3 878.0,344.8 878.5,345.2 879.0,345.7 879.5,346.1 880.0,346.6 880.5,347.0 881.0,347.5 881.5,347.9 882.0,348.4 882.5,348.8 883.0,349.3 883.5,349.7 884.0,350.0 884.5,350.2 885.0,350.4 885.5,350.5 886.0,350.5 886.5,350.5 887.0,350.4 887.5,350.3 888.0,350.2 888.5,350.0 889.0,349.8 889.5,349.6 890.0,349.4 890.5,349.1 891.0,348.8 891.5,348.5 892.0,348.2 892.5,347.8 893.0,347.5 893.5,347.1 894.0,346.8 894.5,346.4 895.0,346.0 895.5,345.6 896.0,345.2 896.5,344.8 897.0,344.4 897.5,344.0 898.0,343.6 898.5,343.2 899.0,342.7 899.5,342.3 900.0,341.9 900.5,341.4 901.0,341.0 901.5,340.6 902.0,340.1 902.5,339.7 903.0,339.3 903.5,338.8 904.0,338.4 904.5,337.9 905.0,337.5 905.5,337.1 906.0,336.6 906.5,336.2 907.0,335.7 907.5,335.3 908.0,334.8 908.5,334.4 909.0,333.9 909.5,333.5 910.0,333.0 910.5,332.6 911.0,332.1 911.5,331.7 912.0,331.2 912.5,330.8 913.0,330.3 913.5,329.9 914.0,329.4 914.5,329.0 915.0,328.5 915.5,328.1 916.0,327.6 916.5,327.2 917.0,326.7 917.5,326.3 918.0,325.8 918.5,325.4 919.0,324.9 919.5,324.5 920.0,324.0 920.5,323.6 921.0,323.1 921.5,322.7 922.0,322.3 922.5,321.9 923.0,321.7 923.5,321.5 924.0,321.4 924.5,321.3 925.0,321.3 925.5,321.3 926.0,321.4 926.5,321.6 927.0,321.7 927.5,321.9 928.0,322.1 928.5,322.4 929.0,322.6 929.5,322.9 930.0,323.2 930.5,323.5 931.0,323.9 931.5,324.2 932.0,324.6 932.5,324.9 933.0,325.3 933.5,325.7 934.0,326.1 934.5,326.5 935.0,326.9 935.5,327.3 936.0,327.7 936.5,328.1 937.0,328.5 937.5,329.0 938.0,329.4 938.5,329.8 939.0,330.2 939.5,330.7 940.0,331.1 940.5,331.5 941.0,332.0 941.5,332.4 942.0,332.9 942.5,333.3 943.0,333.8 943.5,334.2 944.0,334.6 944.5,335.1 945.0,335.5 945.5,336.0 946.0,336.4 946.5,336.9 947.0,337.3 947.5,337.8 948.0,338.2 948.5,338.7 949.0,339.1 949.5,339.6 950.0,340.0 950.5,340.5 951.0,340.9 951.5,341.4 952.0,341.8 952.5,342.3 953.0,342.7 953.5,343.2 954.0,343.6 954.5,344.1 955.0,344.5 955.5,345.0 956.0,345.4 956.5,345.9 957.0,346.3 957.5,346.8 958.0,347.2 958.5,347.7 959.0,348.1 959.5,348.6 960.0,349.0 960.5,349.4 961.0,349.8 961.5,350.1 962.0,350.3 962.5,350.4 963.0,350.5 963.5,350.5 964.0,350.5 964.5,350.4 965.0,350.3 965.5,350.1 966.0,350.0 966.5,349.7 967.0,349.5 967.5,349.3 968.0,349.0 968.5,348.7 969.0,348.4 969.5,348.0 970.0,347.7 970.5,347.3 971.0,347.0 971.5,346.6 972.0,346.2 972.5,345.8 973.0,345.4 973.5,345.0 974.0,344.6 974.5,344.2 975.0,343.8 975.5,343.4 976.0,343.0 976.5,342.5 977.0,342.1 977.5,341.7 978.0,341.3 978.5,340.8 979.0,340.4 979.5,340.0 980.0,339.5 980.5,339.1 981.0,338.6 981.5,338.2 982.0,337.7 982.5,337.3 983.0,336.9 983.5,336.4 984.0,336.0 984.5,335.5 985.0,335.1 985.5,334.6 986.0,334.2 986.5,333.7 987.0,333.3 987.5,332.8 988.0,332.4 988.5,331.9 989.0,331.5 989.5,331.0 990.0,330.6 990.5,330.1 991.0,329.7 991.5,329.2 992.0,328.8 992.5,328.3 993.0,327.9 993.5,327.4 994.0,327.0 994.5,326.5 995.0,326.1 995.5,325.6 996.0,325.2 996.5,324.7 997.0,324.3 997.5,323.8 998.0,323.4 998.5,322.9 999.0,322.5 999.5,322.1 1000.0,321.8 1000.5,321.6 1001.0,321.4 1001.5,321.3 1002.0,321.3 1002.5,321.3 1003.0,321.4 1003.5,321.5 1004.0,321.6 1004.5,321.8 1005.0,322.0 1005.5,322.2 1006.0,322.5 1006.5,322.8 1007.0,323.1 1007.5,323.4 1008.0,323.7 1008.5,324.0 1009.0,324.4 1009.5,324.7 1010.0,325.1 1010.5,325.5 1011.0,325.9 1011.5,326.3 1012.0,326.7 1012.5,327.1 1013.0,327.5 1013.5,327.9 1014.0,328.3 1014.5,328.7 1015.0,329.1 1015.5,329.6 1016.0,330.0 1016.5,330.4 1017.0,330.9 1017.5,331.3 1018.0,331.7 1018.5,332.2 1019.0,332.6 1019.5,333.1 1020.0,333.5 1020.5,333.9 1021.0,334.4 1021.5,334.8 1022.0,335.3 1022.5,335.7 1023.0,336.2 1023.5,336.6 1024.0,337.1 1024.5,337.5 1025.0,338.0 1025.5,338.4 1026.0,338.9 1026.5,339.3 1027.0,339.8 1027.5,340.2 1028.0,340.7 1028.5,341.1 1029.0,341.6 1029.5,342.0 1030.0,342.5 1030.5,342.9 1031.0,343.4 1031.5,343.8 1032.0,344.3 1032.5,344.7 1033.0,345.2 1033.5,345.6 1034.0,346.1 1034.5,346.5 1035.0,347.0 1035.5,347.4 1036.0,347.9 1036.5,348.3 1037.0,348.8 1037.5,349.2 1038.0,349.6 1038.5,349.9 1039.0,350.2 1039.5,350.4 1040.0,350.5 1040.5,350.5 1041.0,350.5 1041.5,350.5 1042.0,350.4 1042.5,350.2 1043.0,350.1 1043.5,349.9 1044.0,349.6 1044.5,349.4 1045.0,349.1 1045.5,348.8 1046.0,348.5 1046.5,348.2 1047.0,347.9 1047.5,347.5 1048.0,347.2 1048.5,346.8 1049.0,346.4 1049.5,346.1 1050.0,345.7 1050.5,345.3 1051.0,344.9 1051.5,344.5 1052.0,344.0 1052.5,343.6 1053.0,343.2 1053.5,342.8 1054.0,342.4 1054.5,341.9 1055.0,341.5 1055.5,341.1 1056.0,340.6 1056.5,340.2 1057.0,339.8 1057.5,339.3 1058.0,338.9 1058.5,338.4 1059.0,338.0 1059.5,337.5 1060.0,337.1 1060.5,336.7 1061.0,336.2 1061.5,335.8 1062.0,335.3 1062.5,334.9 1063.0,334.4 1063.5,334.0 1064.0,333.5 1064.5,333.1 1065.0,332.6 1065.5,332.2 1066.0,331.7 1066.5,331.3 1067.0,330.8 1067.5,330.4 1068.0,329.9 1068.5,329.5 1069.0,329.0 1069.5,328.6 1070.0,328.1 1070.5,327.7 1071.0,327.2 1071.5,326.8 1072.0,326.3 1072.5,325.9 1073.0,325.4 1073.5,325.0 1074.0,324.5 1074.5,324.1 1075.0,323.6 1075.5,323.2 1076.0,322.7 1076.5,322.3 1077.0,322.0 1077.5,321.7 1078.0,321.5 1078.5,321.4 1079.0,321.3 1079.5,321.3 1080.0,321.3 1080.5,321.4 1081.0,321.5 1081.5,321.7 1082.0,321.9 1082.5,322.1 1083.0,322.3 1083.5,322.6 1084.0,322.9 1084.5,323.2 1085.0,323.5 1085.5,323.8 1086.0,324.2 1086.5,324.5 1087.0,324.9 1087.5,325.3 1088.0,325.7 1088.5,326.0 1089.0,326.4 1089.5,326.8 1090.0,327.2 1090.5,327.7 1091.0,328.1 1091.5,328.5 1092.0,328.9 1092.5,329.3 1093.0,329.8 1093.5,330.2 1094.0,330.6 1094.5,331.1 1095.0,331.5 1095.5,331.9 1096.0,332.4 1096.5,332.8 1097.0,333.3 1097.5,333.7 1098.0,334.1 1098.5,334.6 1099.0,335.0 1099.5,335.5 1100.0,335.9 1100.5,336.4 1101.0,336.8 1101.5,337.3 1102.0,337.7 1102.5,338.2 1103.0,338.6 1103.5,339.1 1104.0,339.5 1104.5,340.0 1105.0,340.4 1105.5,340.9 1106.0,341.3 1106.5,341.7 1107.0,342.2 1107.5,342.6 1108.0,343.1 1108.5,343.5 1109.0,344.0 1109.5,344.4 1110.0,344.9 1110.5,345.3 1111.0,345.8 1111.5,346.2 1112.0,346.7 1112.5,347.2 1113.0,347.6 1113.5,348.1 1114.0,348.5 1114.5,349.0 1115.0,349.4 1115.5,349.8 1116.0,350.1 1116.5,350.3 1117.0,350.4 1117.5,350.5 1118.0,350.5 1118.5,350.5 1119.0,350.4 1119.5,350.3 1120.0,350.2 1120.5,350.0 1121.0,349.8 1121.5,349.5 1122.0,349.3 1122.5,349.0 1123.0,348.7 1123.5,348.4 1124.0,348.1 1124.5,347.7 1125.0,347.4 1125.5,347.0 1126.0,346.7 1126.5,346.3 1127.0,345.9 1127.5,345.5 1128.0,345.1 1128.5,344.7 1129.0,344.3 1129.5,343.9 1130.0,343.4 1130.5,343.0 1131.0,342.6 1131.5,342.2 1132.0,341.7 1132.5,341.3 1133.0,340.9 1133.5,340.4 1134.0,340.0 1134.5,339.6 1135.0,339.1 1135.5,338.7 1136.0,338.2 1136.5,337.8 1137.0,337.4 1137.5,336.9 1138.0,336.5 1138.5,336.0 1139.0,335.6 1139.5,335.1 1140.0,334.7 1140.5,334.2 1141.0,333.8 1141.5,333.3 1142.0,332.9 1142.5,332.4 1143.0,332.0 1143.5,331.5 1144.0,331.1 1144.5,330.6 1145.0,330.2 1145.5,329.7 1146.0,329.3 1146.5,328.8 1147.0,328.4 1147.5,327.9 1148.0,327.5 1148.5,327.0 1149.0,326.6 1149.5,326.1 1150.0,325.7 1150.5,325.2 1151.0,324.8 1151.5,324.3 1152.0,323.9 1152.5,323.4 1153.0,323.0 1153.5,322.5 1154.0,322.1 1154.5,321.8 1155.0,321.6 1155.5,321.4 1156.0,321.3 1156.5,321.3 1157.0,321.3 1157.5,321.4 1158.0,321.5 1158.5,321.6 1159.0,321.8 1159.5,322.0 1160.0,322.2 1160.5,322.5 1161.0,322.7 1161.5,323.0 1162.0,323.3 1162.5,323.6 1163.0,324.0 1163.5,324.3 1164.0,324.7 1164.5,325.1 1165.0,325.4 1165.5,325.8 1166.0,326.2 1166.5,326.6 1167.0,327.0 1167.5,327.4 1168.0,327.8 1168.5,328.3 1169.0,328.7 1169.5,329.1 1170.0,329.5 1170.5,330.0 1171.0,330.4 1171.5,330.8 1172.0,331.3 1172.5,331.7 1173.0,332.1 1173.5,332.6 1174.0,333.0 1174.5,333.4 1175.0,333.9 1175.5,334.3 1176.0,334.8 1176.5,335.2 1177.0,335.7 1177.5,336.1 1178.0,336.6 1178.5,337.0 1179.0,337.5 1179.5,337.9 1180.0,338.4 1180.5,338.8 1181.0,339.3 1181.5,339.7 1182.0,340.1 1182.5,340.6 1183.0,341.0 1183.5,341.5 1184.0,341.9 1184.5,342.4 1185.0,342.8 1185.5,343.3 1186.0,343.7 1186.5,344.2 1187.0,344.6 1187.5,345.1 1188.0,345.5 1188.5,346.0 1189.0,346.4 1189.5,346.9 1190.0,347.3 1190.5,347.8 1191.0,348.2 1191.5,348.7 1192.0,349.2 1192.5,349.6 1193.0,349.9 1193.5,350.2 1194.0,350.3 1194.5,350.5 1195.0,350.5 1195.5,350.5 1196.0,350.5 1196.5,350.4 1197.0,350.2 1197.5,350.1 1198.0,349.9 1198.5,349.7 1199.0,349.4 1199.5,349.2 1200.0,348.9 1200.5,348.6 1201.0,348.3 1201.5,347.9 1202.0,347.6 1202.5,347.2 1203.0,346.9 1203.5,346.5 1204.0,346.1 1204.5,345.7 1205.0,345.3 1205.5,344.9 1206.0,344.5 1206.5,344.1 1207.0,343.7 1207.5,343.3 1208.0,342.8 1208.5,342.4 1209.0,342.0 1209.5,341.6 1210.0,341.1 1210.5,340.7 1211.0,340.2 1211.5,339.8 1212.0,339.4 1212.5,338.9 1213.0,338.5 1213.5,338.0 1214.0,337.6 1214.5,337.2 1215.0,336.7 1215.5,336.3 1216.0,335.8 1216.5,335.4 1217.0,334.9 1217.5,334.5 1218.0,334.0 1218.5,333.6 1219.0,333.1 1219.5,332.7 1220.0,332.2 1220.5,331.8 1221.0,331.3 1221.5,330.9 1222.0,330.4 1222.5,330.0 1223.0,329.5 1223.5,329.1 1224.0,328.6 1224.5,328.2 1225.0,327.7 1225.5,327.3 1226.0,326.8 1226.5,326.4 1227.0,325.9 1227.5,325.5 1228.0,325.0 1228.5,324.6 1229.0,324.1 1229.5,323.7 1230.0,323.2 1230.5,322.8 1231.0,322.3 1231.5,322.0 1232.0,321.7 1232.5,321.5 1233.0,321.4 1233.5,321.3 1234.0,321.3 1234.5,321.3 1235.0,321.4 1235.5,321.5 1236.0,321.7 1236.5,321.9 1237.0,322.1 1237.5,322.3 1238.0,322.6 1238.5,322.9 1239.0,323.2 1239.5,323.5 1240.0,323.8 1240.5,324.1 1241.0,324.5 1241.5,324.9 1242.0,325.2 1242.5,325.6 1243.0,326.0 1243.5,326.4 1244.0,326.8 1244.5,327.2 1245.0,327.6 1245.5,328.0 1246.0,328.4 1246.5,328.9 1247.0,329.3 1247.5,329.7 1248.0,330.1 1248.5,330.6 1249.0,331.0 1249.5,331.4 1250.0,331.9 1250.5,332.3 1251.0,332.8 1251.5,333.2 1252.0,333.6 1252.5,334.1 1253.0,334.5 1253.5,335.0 1254.0,335.4 1254.5,335.9 1255.0,336.3 1255.5,336.8 1256.0,337.2 1256.5,337.7 1257.0,338.1 1257.5,338.6 1258.0,339.0 1258.5,339.4 1259.0,339.9 1259.5,340.3 1260.0,340.8 1260.5,341.2 1261.0,341.7 1261.5,342.1 1262.0,342.6 1262.5,343.0 1263.0,343.5 1263.5,343.9 1264.0,344.4 1264.5,344.8 1265.0,345.3 1265.5,345.7 1266.0,346.2 1266.5,346.6 1267.0,347.1 1267.5,347.5 1268.0,348.0 1268.5,348.4 1269.0,348.9 1269.5,349.3 1270.0,349.7 1270.5,350.0 1271.0,350.3 1271.5,350.4 1272.0,350.5 1272.5,350.5 1273.0,350.5 1273.5,350.4 1274.0,350.3 1274.5,350.2 1275.0,350.0 1275.5,349.8 1276.0,349.6 1276.5,349.3 1277.0,349.0 1277.5,348.7 1278.0,348.4 1278.5,348.1 1279.0,347.8 1279.5,347.4 1280.0,347.1 1280.5,346.7 1281.0,346.3 1281.5,345.9 1282.0,345.5 1282.5,345.1 1283.0,344.7 1283.5,344.3 1284.0,343.9 1284.5,343.5 1285.0,343.1 1285.5,342.7 1286.0,342.2 1286.5,341.8 1287.0,341.4 1287.5,340.9 1288.0,340.5 1288.5,340.1 1289.0,339.6 1289.5,339.2 1290.0,338.7 1290.5,338.3 1291.0,337.9 1291.5,337.4 1292.0,337.0 1292.5,336.5 1293.0,336.1 1293.5,335.6 1294.0,335.2 1294.5,334.7 1295.0,334.3 1295.5,333.8 1296.0,333.4 1296.5,332.9 1297.0,332.5 1297.5,332.0 1298.0,331.6 1298.5,331.1 1299.0,330.7 1299.5,330.2 1300.0,329.8 1300.5,329.3 1301.0,328.9 1301.5,328.4 1302.0,328.0 1302.5,327.5 1303.0,327.1 1303.5,326.6 1304.0,326.2 1304.5,325.7 1305.0,325.3 1305.5,324.8 1306.0,324.4 1306.5,323.9 1307.0,323.5 1307.5,323.0 1308.0,322.6 1308.5,322.2 1309.0,321.9 1309.5,321.6 1310.0,321.4 1310.5,321.3 1311.0,321.3 1311.5,321.3 1312.0,321.4 1312.5,321.5 1313.0,321.6 1313.5,321.8 1314.0,322.0 1314.5,322.2 1315.0,322.4 1315.5,322.7 1316.0,323.0 1316.5,323.3 1317.0,323.6 1317.5,323.9 1318.0,324.3 1318.5,324.6 1319.0,325.0 1319.5,325.4 1320.0,325.8 1320.5,326.2 1321.0,326.6 1321.5,327.0 1322.0,327.4 1322.5,327.8 1323.0,328.2 1323.5,328.6 1324.0,329.0 1324.5,329.5 1325.0,329.9 1325.5,330.3 1326.0,330.8 1326.5,331.2 1327.0,331.6 1327.5,332.1 1328.0,332.5 1328.5,333.0 1329.0,333.4 1329.5,333.8 1330.0,334.3 1330.5,334.7 1331.0,335.2 1331.5,335.6 1332.0,336.1 1332.5,336.5 1333.0,337.0 1333.5,337.4 1334.0,337.9 1334.5,338.3 1335.0,338.7 1335.5,339.2 1336.0,339.6 1336.5,340.1 1337.0,340.5 1337.5,341.0 1338.0,341.4 1338.5,341.9 1339.0,342.3 1339.5,342.8 1340.0,343.2 1340.5,343.7 1341.0,344.1 1341.5,344.6 1342.0,345.0 1342.5,345.5 1343.0,345.9 1343.5,346.4 1344.0,346.8 1344.5,347.3 1345.0,347.7 1345.5,348.2 1346.0,348.6 1346.5,349.1 1347.0,349.5 1347.5,349.9 1348.0,350.1 1348.5,350.3 1349.0,350.4 1349.5,350.5 1350.0,350.5 1350.5,350.5 1351.0,350.4 1351.5,350.3 1352.0,350.1 1352.5,349.9 1353.0,349.7 1353.5,349.5 1354.0,349.2 1354.5,348.9 1355.0,348.6 1355.5,348.3 1356.0,348.0 1356.5,347.6 1357.0,347.3 1357.5,346.9 1358.0,346.5 1358.5,346.1 1359.0,345.8 1359.5,345.4 1360.0,345.0 1360.5,344.6 1361.0,344.1 1361.5,343.7 1362.0,343.3 1362.5,342.9 1363.0,342.5 1363.5,342.0 1364.0,341.6 1364.5,341.2 1365.0,340.7 1365.5,340.3 1366.0,339.9 1366.5,339.4 1367.0,339.0 1367.5,338.5 1368.0,338.1 1368.5,337.7 1369.0,337.2 1369.5,336.8 1370.0,336.3 1370.5,335.9 1371.0,335.4 1371.5,335.0 1372.0,334.5 1372.5,334.1 1373.0,333.6 1373.5,333.2 1374.0,332.7 1374.5,332.3 1375.0,331.8 1375.5,331.4 1376.0,330.9 1376.5,330.5 1377.0,330.0 1377.5,329.6 1378.0,329.1 1378.5,328.7 1379.0,328.2 1379.5,327.8 1380.0,327.3 1380.5,326.9 1381.0,326.4 1381.5,326.0 1382.0,325.5 1382.5,325.1 1383.0,324.6 1383.5,324.2 1384.0,323.7 1384.5,323.3 1385.0,322.8 1385.5,322.4 1386.0,322.0 1386.5,321.7 1387.0,321.5 1387.5,321.4 1388.0,321.3 1388.5,321.3 1389.0,321.3 1389.5,321.4 1390.0,321.5 1390.5,321.7 1391.0,321.8 1391.5,322.1 1392.0,322.3 1392.5,322.5 1393.0,322.8 1393.5,323.1 1394.0,323.4 1394.5,323.8 1395.0,324.1 1395.5,324.4 1396.0,324.8 1396.5,325.2 1397.0,325.6 1397.5,325.9 1398.0,326.3 1398.5,326.7 1399.0,327.1 1399.5,327.6 1400.0,328.0 1400.5,328.4 1401.0,328.8 1401.5,329.2 1402.0,329.7 1402.5,330.1 1403.0,330.5 1403.5,331.0 1404.0,331.4 1404.5,331.8 1405.0,332.3 1405.5,332.7 1406.0,333.1 1406.5,333.6 1407.0,334.0 1407.5,334.5 1408.0,334.9 1408.5,335.4 1409.0,335.8 1409.5,336.3 1410.0,336.7 1410.5,337.2 1411.0,337.6"/>
<polyline fill="none" stroke="#377eb8" stroke-width="2.5" stroke-linejoin="round" shape-rendering="crispEdges" points="70.0,337.2 70.5,337.2 71.0,337.2 71.5,337.2 72.0,337.2 72.5,337.2 73.0,337.2 73.5,337.2 74.0,337.2 74.5,337.2 75.0,337.2 75.5,337.2 76.0,337.2 76.5,337.2 77.0,337.2 77.5,337.2 78.0,337.2 78.5,337.2 79.0,337.2 79.5,337.2 80.0,337.2 80.5,337.2 81.0,337.2 81.5,337.2 82.0,337.2 82.5,337.2 83.0,337.2 83.5,337.2 84.0,337.2 84.5,337.2 85.0,337.2 85.5,337.2 86.0,337.2 86.5,337.2 87.0,337.2 87.5,337.2 88.0,338.1 88.5,340.2 89.0,342.4 89.5,344.6 90.0,346.8 90.5,348.9 91.0,351.1 91.5,353.3 92.0,355.5 92.5,357.7 93.0,359.8 93.5,362.0 94.0,364.2 94.5,366.4 95.0,368.5 95.5,370.7 96.0,372.9 96.5,375.1 97.0,377.3 97.5,379.4 98.0,381.6 98.5,383.8 99.0,385.9 99.5,387.9 100.0,389.9 100.5,391.9 101.0,393.8 101.5,395.7 102.0,397.5 102.5,399.3 103.0,401.0 103.5,402.7 104.0,404.4 104.5,406.0 105.0,407.6 105.5,409.2 106.0,410.7 106.5,412.1 107.0,413.6 107.5,415.0 108.0,416.4 108.5,417.7 109.0,419.0 109.5,420.3 110.0,421.6 110.5,422.0 111.0,419.0 111.5,416.1 112.0,413.3 112.5,410.4 113.0,407.6 113.5,404.8 114.0,402.0 114.5,399.2 115.0,396.5 115.5,393.7 116.0,391.0 116.5,388.4 117.0,385.7 117.5,383.1 118.0,380.4 118.5,377.8 119.0,375.3 119.5,372.7 120.0,370.1 120.5,367.6 121.0,365.1 121.5,362.6 122.0,360.2 122.5,357.7 123.0,355.3 123.5,352.9 124.0,350.5 124.5,348.1 125.0,345.8 125.5,343.5 126.0,341.1 126.5,338.9 127.0,336.6 127.5,334.3 128.0,332.1 128.5,329.8 129.0,327.6 129.5,325.4 130.0,323.3 130.5,321.1 131.0,319.0 131.5,316.8 132.0,314.7 132.5,312.6 133.0,310.6 133.5,308.5 134.0,306.5 134.5,304.4 135.0,302.4 135.5,300.4 136.0,298.4 136.5,296.5 137.0,294.5 137.5,292.6 138.0,290.7 138.5,288.7 139.0,286.9 139.5,285.0 140.0,283.1 140.5,281.3 141.0,279.4 141.5,277.6 142.0,275.8 142.5,274.0 143.0,272.2 143.5,270.5 144.0,268.7 144.5,267.0 145.0,265.3 145.5,263.6 146.0,261.9 146.5,260.2 147.0,258.5 147.5,256.8 148.0,255.2 148.5,253.6 149.0,251.9 149.5,254.5 150.0,257.4 150.5,260.3 151.0,263.2 151.5,266.0 152.0,268.8 152.5,271.6 153.0,274.4 153.5,277.1 154.0,279.9 154.5,282.6 155.0,285.3 155.5,287.9 156.0,290.6 156.5,293.2 157.0,295.8 157.5,298.4 158.0,301.0 158.5,303.5 159.0,306.0 159.5,308.6 160.0,311.0 160.5,313.5 161.0,316.0 161.5,318.4 162.0,320.8 162.5,323.2 163.0,325.6 163.5,327.9 164.0,330.3 164.5,332.6 165.0,334.9 165.5,337.2 166.0,339.4 166.5,341.7 167.0,343.9 167.5,346.1 168.0,348.3 168.5,350.5 169.0,352.7 169.5,354.8 170.0,356.9 170.5,359.1 171.0,361.2 171.5,363.2 172.0,365.3 172.5,367.4 173.0,369.4 173.5,371.4 174.0,373.4 174.5,375.4 175.0,377.4 175.5,379.3 176.0,381.3 176.5,383.2 177.0,385.1 177.5,387.0 178.0,388.9 178.5,390.7 179.0,392.6 179.5,394.4 180.0,396.3 180.5,398.1 181.0,399.9 181.5,401.6 182.0,403.4 182.5,405.2 183.0,406.9 183.5,408.6 184.0,410.3 184.5,412.0 185.0,413.7 185.5,415.4 186.0,417.1 186.5,418.7 187.0,420.4 187.5,422.0 188.0,420.7 188.5,417.8 189.0,414.9 189.5,412.0 190.0,409.2 190.5,406.3 191.0,403.5 191.5,400.8 192.0,398.0 192.5,395.3 193.0,392.6 193.5,389.9 194.0,387.2 194.5,384.5 195.0,381.9 195.5,379.3 196.0,376.7 196.5,374.1 197.0,371.6 197.5,369.0 198.0,366.5 198.5,364.0 199.0,361.6 199.5,359.1 200.0,356.7 200.5,354.2 201.0,351.9 201.5,349.5 202.0,347.1 202.5,344.8 203.0,342.4 203.5,340.1 204.0,337.8 204.5,335.6 205.0,333.3 205.5,331.1 206.0,328.9 206.5,326.7 207.0,324.5 207.5,322.3 208.0,320.2 208.5,318.0 209.0,315.9 209.5,313.8 210.0,311.7 210.5,309.6 211.0,307.6 211.5,305.6 212.0,303.5 212.5,301.5 213.0,299.5 213.5,297.6 214.0,295.6 214.5,293.7 215.0,291.7 215.5,289.8 216.0,287.9 216.5,286.0 217.0,284.2 217.5,282.3 218.0,280.5 218.5,278.6 219.0,276.8 219.5,275.0 220.0,273.2 220.5,271.5 221.0,269.7 221.5,268.0 222.0,266.2 222.5,264.5 223.0,262.8 223.5,261.1 224.0,259.4 224.5,257.8 225.0,256.1 225.5,254.5 226.0,252.9 226.5,252.9 227.0,255.8 227.5,258.7 228.0,261.6 228.5,264.4 229.0,267.2 229.5,270.1 230.0,272.8 230.5,275.6 231.0,278.3 231.5,281.1 232.0,283.8 232.5,286.4 233.0,289.1 233.5,291.7 234.0,294.4 234.5,297.0 235.0,299.5 235.5,302.1 236.0,304.6 236.5,307.1 237.0,309.6 237.5,312.1 238.0,314.6 238.5,317.0 239.0,319.5 239.5,321.9 240.0,324.2 240.5,326.6 241.0,329.0 241.5,331.3 242.0,333.6 242.5,335.9 243.0,338.2 243.5,340.4 244.0,342.7 244.5,344.9 245.0,347.1 245.5,349.3 246.0,351.5 246.5,353.6 247.0,355.8 247.5,357.9 248.0,360.0 248.5,362.1 249.0,364.1 249.5,366.2 250.0,368.2 250.5,370.3 251.0,372.3 251.5,374.3 252.0,376.3 252.5,378.2 253.0,380.2 253.5,382.1 254.0,384.0 254.5,385.9 255.0,387.8 255.5,389.7 256.0,391.6 256.5,393.4 257.0,395.2 257.5,397.1 258.0,398.9 258.5,400.6 259.0,402.4 259.5,404.2 260.0,405.9 260.5,407.7 261.0,409.4 261.5,411.1 262.0,412.8 262.5,414.5 263.0,416.1 263.5,417.8 264.0,419.4 264.5,421.1 265.0,422.3 265.5,419.4 266.0,416.5 266.5,413.6 267.0,410.8 267.5,407.9 268.0,405.1 268.5,402.3 269.0,399.5 269.5,396.8 270.0,394.1 270.5,391.4 271.0,388.7 271.5,386.0 272.0,383.4 272.5,380.7 273.0,378.1 273.5,375.6 274.0,373.0 274.5,370.5 275.0,367.9 275.5,365.4 276.0,362.9 276.5,360.5 277.0,358.0 277.5,355.6 278.0,353.2 278.5,350.8 279.0,348.4 279.5,346.1 280.0,343.7 280.5,341.4 281.0,339.1 281.5,336.8 282.0,334.6 282.5,332.3 283.0,330.1 283.5,327.9 284.0,325.7 284.5,323.5 285.0,321.4 285.5,319.2 286.0,317.1 286.5,315.0 287.0,312.9 287.5,310.8 288.0,308.7 288.5,306.7 289.0,304.7 289.5,302.7 290.0,300.7 290.5,298.7 291.0,296.7 291.5,294.7 292.0,292.8 292.5,290.9 293.0,289.0 293.5,287.1 294.0,285.2 294.5,283.3 295.0,281.5 295.5,279.7 296.0,277.8 296.5,276.0 297.0,274.2 297.5,272.5 298.0,270.7 298.5,268.9 299.0,267.2 299.5,265.5 300.0,263.8 300.5,262.1 301.0,260.4 301.5,258.7 302.0,257.0 302.5,255.4 303.0,253.8 303.5,252.1 304.0,254.2 304.5,257.1 305.0,260.0 305.5,262.8 306.0,265.7 306.5,268.5 307.0,271.3 307.5,274.1 308.0,276.8 308.5,279.5 309.0,282.3 309.5,284.9 310.0,287.6 310.5,290.3 311.0,292.9 311.5,295.5 312.0,298.1 312.5,300.7 313.0,303.2 313.5,305.7 314.0,308.3 314.5,310.7 315.0,313.2 315.5,315.7 316.0,318.1 316.5,320.5 317.0,322.9 317.5,325.3 318.0,327.6 318.5,330.0 319.0,332.3 319.5,334.6 320.0,336.9 320.5,339.2 321.0,341.4 321.5,343.6 322.0,345.9 322.5,348.1 323.0,350.2 323.5,352.4 324.0,354.6 324.5,356.7 325.0,358.8 325.5,360.9 326.0,363.0 326.5,365.1 327.0,367.1 327.5,369.1 328.0,371.2 328.5,373.2 329.0,375.2 329.5,377.1 330.0,379.1 330.5,381.0 331.0,383.0 331.5,384.9 332.0,386.8 332.5,388.6 333.0,390.5 333.5,392.4 334.0,394.2 334.5,396.0 335.0,397.8 335.5,399.6 336.0,401.4 336.5,403.2 337.0,405.0 337.5,406.7 338.0,408.4 338.5,410.1 339.0,411.8 339.5,413.5 340.0,415.2 340.5,416.9 341.0,418.5 341.5,420.2 342.0,421.8 342.5,421.0 343.0,418.1 343.5,415.2 344.0,412.4 344.5,409.5 345.0,406.7 345.5,403.9 346.0,401.1 346.5,398.3 347.0,395.6 347.5,392.9 348.0,390.2 348.5,387.5 349.0,384.8 349.5,382.2 350.0,379.6 350.5,377.0 351.0,374.4 351.5,371.9 352.0,369.3 352.5,366.8 353.0,364.3 353.5,361.9 354.0,359.4 354.5,357.0 355.0,354.5 355.5,352.1 356.0,349.8 356.5,347.4 357.0,345.0 357.5,342.7 358.0,340.4 358.5,338.1 359.0,335.8 359.5,333.6 360.0,331.4 360.5,329.1 361.0,326.9 361.5,324.7 362.0,322.6 362.5,320.4 363.0,318.3 363.5,316.2 364.0,314.1 364.5,312.0 365.0,309.9 365.5,307.8 366.0,305.8 366.5,303.8 367.0,301.8 367.5,299.8 368.0,297.8 368.5,295.8 369.0,293.9 369.5,292.0 370.0,290.0 370.5,288.1 371.0,286.3 371.5,284.4 372.0,282.5 372.5,280.7 373.0,278.9 373.5,277.0 374.0,275.2 374.5,273.4 375.0,271.7 375.5,269.9 376.0,268.2 376.5,266.4 377.0,264.7 377.5,263.0 378.0,261.3 378.5,259.6 379.0,258.0 379.5,256.3 380.0,254.7 380.5,253.0 381.0,252.5 381.5,255.4 382.0,258.3 382.5,261.2 383.0,264.1 383.5,266.9 384.0,269.7 384.5,272.5 385.0,275.3 385.5,278.0 386.0,280.7 386.5,283.4 387.0,286.1 387.5,288.8 388.0,291.4 388.5,294.0 389.0,296.6 389.5,299.2 390.0,301.8 390.5,304.3 391.0,306.8 391.5,309.3 392.0,311.8 392.5,314.3 393.0,316.7 393.5,319.2 394.0,321.6 394.5,324.0 395.0,326.3 395.5,328.7 396.0,331.0 396.5,333.3 397.0,335.6 397.5,337.9 398.0,340.2 398.5,342.4 399.0,344.6 399.5,346.8 400.0,349.0 400.5,351.2 401.0,353.4 401.5,355.5 402.0,357.6 402.5,359.7 403.0,361.8 403.5,363.9 404.0,366.0 404.5,368.0 405.0,370.0 405.5,372.0 406.0,374.0 406.5,376.0 407.0,378.0 407.5,379.9 408.0,381.9 408.5,383.8 409.0,385.7 409.5,387.6 410.0,389.5 410.5,391.3 411.0,393.2 411.5,395.0 412.0,396.8 412.5,398.6 413.0,400.4 413.5,402.2 414.0,404.0 414.5,405.7 415.0,407.5 415.5,409.2 416.0,410.9 416.5,412.6 417.0,414.3 417.5,415.9 418.0,417.6 418.5,419.2 419.0,420.9 419.5,422.5 420.0,419.7 420.5,416.8 421.0,414.0 421.5,411.1 422.0,408.3 422.5,405.4 423.0,402.7 423.5,399.9 424.0,397.1 424.5,394.4 425.0,391.7 425.5,389.0 426.0,386.3 426.5,383.7 427.0,381.1 427.5,378.5 428.0,375.9 428.5,373.3 429.0,370.8 429.5,368.2 430.0,365.7 430.5,363.2 431.0,360.8 431.5,358.3 432.0,355.9 432.5,353.5 433.0,351.1 433.5,348.7 434.0,346.4 434.5,344.0 435.0,341.7 435.5,339.4 436.0,337.1 436.5,334.9 437.0,332.6 437.5,330.4 438.0,328.2 438.5,326.0 439.0,323.8 439.5,321.6 440.0,319.5 440.5,317.3 441.0,315.2 441.5,313.1 442.0,311.1 442.5,309.0 443.0,306.9 443.5,304.9 444.0,302.9 444.5,300.9 445.0,298.9 445.5,296.9 446.0,295.0 446.5,293.0 447.0,291.1 447.5,289.2 448.0,287.3 448.5,285.4 449.0,283.6 449.5,281.7 450.0,279.9 450.5,278.1 451.0,276.2 451.5,274.4 452.0,272.7 452.5,270.9 453.0,269.1 453.5,267.4 454.0,265.7 454.5,264.0 455.0,262.3 455.5,260.6 456.0,258.9 456.5,257.2 457.0,255.6 457.5,254.0 458.0,252.3 458.5,253.8 459.0,256.7 459.5,259.6 460.0,262.5 460.5,265.3 461.0,268.1 461.5,270.9 462.0,273.7 462.5,276.5 463.0,279.2 463.5,281.9 464.0,284.6 464.5,287.3 465.0,290.0 465.5,292.6 466.0,295.2 466.5,297.8 467.0,300.4 467.5,302.9 468.0,305.4 468.5,308.0 469.0,310.4 469.5,312.9 470.0,315.4 470.5,317.8 471.0,320.2 471.5,322.6 472.0,325.0 472.5,327.4 473.0,329.7 473.5,332.0 474.0,334.3 474.5,336.6 475.0,338.9 475.5,341.1 476.0,343.4 476.5,345.6 477.0,347.8 477.5,350.0 478.0,352.2 478.5,354.3 479.0,356.4 479.5,358.6 480.0,360.7 480.5,362.7 481.0,364.8 481.5,366.9 482.0,368.9 482.5,370.9 483.0,372.9 483.5,374.9 484.0,376.9 484.5,378.8 485.0,380.8 485.5,382.7 486.0,384.6 486.5,386.5 487.0,388.4 487.5,390.3 488.0,392.1 488.5,394.0 489.0,395.8 489.5,397.6 490.0,399.4 490.5,401.2 491.0,403.0 491.5,404.7 492.0,406.5 492.5,408.2 493.0,409.9 493.5,411.6 494.0,413.3 494.5,415.0 495.0,416.7 495.5,418.3 496.0,420.0 496.5,421.6 497.0,421.4 497.5,418.5 498.0,415.6 498.5,412.7 499.0,409.8 499.5,407.0 500.0,404.2 500.5,401.4 501.0,398.7 501.5,395.9 502.0,393.2 502.5,390.5 503.0,387.8 503.5,385.2 504.0,382.5 504.5,379.9 505.0,377.3 505.5,374.7 506.0,372.2 506.5,369.6 507.0,367.1 507.5,364.6 508.0,362.1 508.5,359.7 509.0,357.2 509.5,354.8 510.0,352.4 510.5,350.0 511.0,347.7 511.5,345.3 512.0,343.0 512.5,340.7 513.0,338.4 513.5,336.1 514.0,333.9 514.5,331.6 515.0,329.4 515.5,327.2 516.0,325.0 516.5,322.8 517.0,320.7 517.5,318.5 518.0,316.4 518.5,314.3 519.0,312.2 519.5,310.1 520.0,308.1 520.5,306.0 521.0,304.0 521.5,302.0 522.0,300.0 522.5,298.0 523.0,296.1 523.5,294.1 524.0,292.2 524.5,290.3 525.0,288.4 525.5,286.5 526.0,284.6 526.5,282.7 527.0,280.9 527.5,279.1 528.0,277.3 528.5,275.5 529.0,273.7 529.5,271.9 530.0,270.1 530.5,268.4 531.0,266.6 531.5,264.9 532.0,263.2 532.5,261.5 533.0,259.8 533.5,258.2 534.0,256.5 534.5,254.9 535.0,253.2 535.5,252.2 536.0,255.1 536.5,258.0 537.0,260.9 537.5,263.7 538.0,266.6 538.5,269.4 539.0,272.2 539.5,274.9 540.0,277.7 540.5,280.4 541.0,283.1 541.5,285.8 542.0,288.5 542.5,291.1 543.0,293.7 543.5,296.3 544.0,298.9 544.5,301.5 545.0,304.0 545.5,306.5 546.0,309.1 546.5,311.5 547.0,314.0 547.5,316.4 548.0,318.9 548.5,321.3 549.0,323.7 549.5,326.0 550.0,328.4 550.5,330.7 551.0,333.0 551.5,335.3 552.0,337.6 552.5,339.9 553.0,342.1 553.5,344.4 554.0,346.6 554.5,348.8 555.0,350.9 555.5,353.1 556.0,355.2 556.5,357.4 557.0,359.5 557.5,361.6 558.0,363.7 558.5,365.7 559.0,367.8 559.5,369.8 560.0,371.8 560.5,373.8 561.0,375.8 561.5,377.8 562.0,379.7 562.5,381.6 563.0,383.6 563.5,385.5 564.0,387.4 564.5,389.2 565.0,391.1 565.5,393.0 566.0,394.8 566.5,396.6 567.0,398.4 567.5,400.2 568.0,402.0 568.5,403.8 569.0,405.5 569.5,407.2 570.0,409.0 570.5,410.7 571.0,412.4 571.5,414.1 572.0,415.7 572.5,417.4 573.0,419.0 573.5,420.7 574.0,422.3 574.5,420.1 575.0,417.2 575.5,414.3 576.0,411.4 576.5,408.6 577.0,405.8 577.5,403.0 578.0,400.2 578.5,397.5 579.0,394.7 579.5,392.0 580.0,389.3 580.5,386.7 581.0,384.0 581.5,381.4 582.0,378.8 582.5,376.2 583.0,373.6 583.5,371.1 584.0,368.5 584.5,366.0 585.0,363.5 585.5,361.1 586.0,358.6 586.5,356.2 587.0,353.8 587.5,351.4 588.0,349.0 588.5,346.6 589.0,344.3 589.5,342.0 590.0,339.7 590.5,337.4 591.0,335.1 591.5,332.9 592.0,330.6 592.5,328.4 593.0,326.2 593.5,324.0 594.0,321.9 594.5,319.7 595.0,317.6 595.5,315.5 596.0,313.4 596.5,311.3 597.0,309.2 597.5,307.2 598.0,305.2 598.5,303.1 599.0,301.1 599.5,299.1 600.0,297.2 600.5,295.2 601.0,293.3 601.5,291.3 602.0,289.4 602.5,287.5 603.0,285.7 603.5,283.8 604.0,281.9 604.5,280.1 605.0,278.3 605.5,276.5 606.0,274.7 606.5,272.9 607.0,271.1 607.5,269.4 608.0,267.6 608.5,265.9 609.0,264.2 609.5,262.5 610.0,260.8 610.5,259.1 611.0,257.4 611.5,255.8 612.0,254.2 612.5,252.5 613.0,253.5 613.5,256.4 614.0,259.3 614.5,262.1 615.0,265.0 615.5,267.8 616.0,270.6 616.5,273.4 617.0,276.2 617.5,278.9 618.0,281.6 618.5,284.3 619.0,287.0 619.5,289.6 620.0,292.3 620.5,294.9 621.0,297.5 621.5,300.0 622.0,302.6 622.5,305.1 623.0,307.7 623.5,310.1 624.0,312.6 624.5,315.1 625.0,317.5 625.5,319.9 626.0,322.3 626.5,324.7 627.0,327.1 627.5,329.4 628.0,331.7 628.5,334.1 629.0,336.3 629.5,338.6 630.0,340.9 630.5,343.1 631.0,345.3 631.5,347.5 632.0,349.7 632.5,351.9 633.0,354.0 633.5,356.2 634.0,358.3 634.5,360.4 635.0,362.5 635.5,364.6 636.0,366.6 636.5,368.7 637.0,370.7 637.5,372.7 638.0,374.7 638.5,376.7 639.0,378.6 639.5,380.6 640.0,382.5 640.5,384.4 641.0,386.3 641.5,388.2 642.0,390.1 642.5,391.9 643.0,393.8 643.5,395.6 644.0,397.4 644.5,399.2 645.0,401.0 645.5,402.8 646.0,404.5 646.5,406.3 647.0,408.0 647.5,409.7 648.0,411.4 648.5,413.1 649.0,414.8 649.5,416.5 650.0,418.1 650.5,419.8 651.0,421.4 651.5,421.7 652.0,418.8 652.5,415.9 653.0,413.0 653.5,410.2 654.0,407.4 654.5,404.5 655.0,401.8 655.5,399.0 656.0,396.3 656.5,393.5 657.0,390.8 657.5,388.1 658.0,385.5 658.5,382.8 659.0,380.2 659.5,377.6 660.0,375.0 660.5,372.5 661.0,369.9 661.5,367.4 662.0,364.9 662.5,362.4 663.0,360.0 663.5,357.5 664.0,355.1 664.5,352.7 665.0,350.3 665.5,348.0 666.0,345.6 666.5,343.3 667.0,341.0 667.5,338.7 668.0,336.4 668.5,334.1 669.0,331.9 669.5,329.7 670.0,327.5 670.5,325.3 671.0,323.1 671.5,320.9 672.0,318.8 672.5,316.7 673.0,314.6 673.5,312.5 674.0,310.4 674.5,308.3 675.0,306.3 675.5,304.3 676.0,302.3 676.5,300.3 677.0,298.3 677.5,296.3 678.0,294.4 678.5,292.4 679.0,290.5 679.5,288.6 680.0,286.7 680.5,284.8 681.0,283.0 681.5,281.1 682.0,279.3 682.5,277.5 683.0,275.7 683.5,273.9 684.0,272.1 684.5,270.3 685.0,268.6 685.5,266.9 686.0,265.1 686.5,263.4 687.0,261.7 687.5,260.0 688.0,258.4 688.5,256.7 689.0,255.1 689.5,253.4 690.0,251.8 690.5,254.7 691.0,257.7 691.5,260.5 692.0,263.4 692.5,266.2 693.0,269.0 693.5,271.8 694.0,274.6 694.5,277.4 695.0,280.1 695.5,282.8 696.0,285.5 696.5,288.1 697.0,290.8 697.5,293.4 698.0,296.0 698.5,298.6 699.0,301.2 699.5,303.7 700.0,306.2 700.5,308.8 701.0,311.2 701.5,313.7 702.0,316.2 702.5,318.6 703.0,321.0 703.5,323.4 704.0,325.8 704.5,328.1 705.0,330.4 705.5,332.8 706.0,335.1 706.5,337.3 707.0,339.6 707.5,341.9 708.0,344.1 708.5,346.3 709.0,348.5 709.5,350.7 710.0,352.8 710.5,355.0 711.0,357.1 711.5,359.2 712.0,361.3 712.5,363.4 713.0,365.5 713.5,367.5 714.0,369.5 714.5,371.6 715.0,373.6 715.5,375.5 716.0,377.5 716.5,379.5 717.0,381.4 717.5,383.3 718.0,385.2 718.5,387.1 719.0,389.0 719.5,390.9 720.0,392.7 720.5,394.6 721.0,396.4 721.5,398.2 722.0,400.0 722.5,401.8 723.0,403.5 723.5,405.3 724.0,407.0 724.5,408.8 725.0,410.5 725.5,412.2 726.0,413.9 726.5,415.5 727.0,417.2 727.5,418.8 728.0,420.5 728.5,422.1 729.0,420.4 729.5,417.5 730.0,414.6 730.5,411.8 731.0,408.9 731.5,406.1 732.0,403.3 732.5,400.5 733.0,397.8 733.5,395.0 734.0,392.3 734.5,389.6 735.0,387.0 735.5,384.3 736.0,381.7 736.5,379.1 737.0,376.5 737.5,373.9 738.0,371.4 738.5,368.8 739.0,366.3 739.5,363.8 740.0,361.4 740.5,358.9 741.0,356.5 741.5,354.1 742.0,351.7 742.5,349.3 743.0,346.9 743.5,344.6 744.0,342.3 744.5,340.0 745.0,337.7 745.5,335.4 746.0,333.1 746.5,330.9 747.0,328.7 747.5,326.5 748.0,324.3 748.5,322.1 749.0,320.0 749.5,317.9 750.0,315.7 750.5,313.6 751.0,311.6 751.5,309.5 752.0,307.4 752.5,305.4 753.0,303.4 753.5,301.4 754.0,299.4 754.5,297.4 755.0,295.4 755.5,293.5 756.0,291.6 756.5,289.7 757.0,287.8 757.5,285.9 758.0,284.0 758.5,282.2 759.0,280.3 759.5,278.5 760.0,276.7 760.5,274.9 761.0,273.1 761.5,271.3 762.0,269.6 762.5,267.8 763.0,266.1 763.5,264.4 764.0,262.7 764.5,261.0 765.0,259.3 765.5,257.6 766.0,256.0 766.5,254.4 767.0,252.7 767.5,253.1 768.0,256.0 768.5,258.9 769.0,261.8 769.5,264.6 770.0,267.5 770.5,270.3 771.0,273.1 771.5,275.8 772.0,278.6 772.5,281.3 773.0,284.0 773.5,286.7 774.0,289.3 774.5,292.0 775.0,294.6 775.5,297.2 776.0,299.7 776.5,302.3 777.0,304.8 777.5,307.3 778.0,309.8 778.5,312.3 779.0,314.8 779.5,317.2 780.0,319.6 780.5,322.0 781.0,324.4 781.5,326.8 782.0,329.1 782.5,331.5 783.0,333.8 783.5,336.1 784.0,338.3 784.5,340.6 785.0,342.8 785.5,345.1 786.0,347.3 786.5,349.5 787.0,351.6 787.5,353.8 788.0,355.9 788.5,358.0 789.0,360.2 789.5,362.2 790.0,364.3 790.5,366.4 791.0,368.4 791.5,370.4 792.0,372.4 792.5,374.4 793.0,376.4 793.5,378.4 794.0,380.3 794.5,382.3 795.0,384.2 795.5,386.1 796.0,388.0 796.5,389.8 797.0,391.7 797.5,393.5 798.0,395.4 798.5,397.2 799.0,399.0 799.5,400.8 800.0,402.6 800.5,404.3 801.0,406.1 801.5,407.8 802.0,409.5 802.5,411.2 803.0,412.9 803.5,414.6 804.0,416.3 804.5,417.9 805.0,419.6 805.5,421.2 806.0,422.1 806.5,419.2 807.0,416.3 807.5,413.4 808.0,410.5 808.5,407.7 809.0,404.9 809.5,402.1 810.0,399.3 810.5,396.6 811.0,393.9 811.5,391.1 812.0,388.5 812.5,385.8 813.0,383.2 813.5,380.5 814.0,377.9 814.5,375.4 815.0,372.8 815.5,370.3 816.0,367.7 816.5,365.2 817.0,362.7 817.5,360.3 818.0,357.8 818.5,355.4 819.0,353.0 819.5,350.6 820.0,348.2 820.5,345.9 821.0,343.6 821.5,341.2 822.0,338.9 822.5,336.7 823.0,334.4 823.5,332.2 824.0,329.9 824.5,327.7 825.0,325.5 825.5,323.3 826.0,321.2 826.5,319.0 827.0,316.9 827.5,314.8 828.0,312.7 828.5,310.6 829.0,308.6 829.5,306.5 830.0,304.5 830.5,302.5 831.0,300.5 831.5,298.5 832.0,296.5 832.5,294.6 833.0,292.7 833.5,290.7 834.0,288.8 834.5,286.9 835.0,285.1 835.5,283.2 836.0,281.3 836.5,279.5 837.0,277.7 837.5,275.9 838.0,274.1 838.5,272.3 839.0,270.5 839.5,268.8 840.0,267.1 840.5,265.3 841.0,263.6 841.5,261.9 842.0,260.2 842.5,258.6 843.0,256.9 843.5,255.3 844.0,253.6 844.5,252.0 845.0,254.4 845.5,257.3 846.0,260.2 846.5,263.0 847.0,265.9 847.5,268.7 848.0,271.5 848.5,274.3 849.0,277.0 849.5,279.8 850.0,282.5 850.5,285.2 851.0,287.8 851.5,290.5 852.0,293.1 852.5,295.7 853.0,298.3 853.5,300.9 854.0,303.4 854.5,305.9 855.0,308.5 855.5,310.9 856.0,313.4 856.5,315.9 857.0,318.3 857.5,320.7 858.0,323.1 858.5,325.5 859.0,327.8 859.5,330.2 860.0,332.5 860.5,334.8 861.0,337.1 861.5,339.3 862.0,341.6 862.5,343.8 863.0,346.0 863.5,348.2 864.0,350.4 864.5,352.6 865.0,354.7 865.5,356.9 866.0,359.0 866.5,361.1 867.0,363.2 867.5,365.2 868.0,367.3 868.5,369.3 869.0,371.3 869.5,373.3 870.0,375.3 870.5,377.3 871.0,379.2 871.5,381.2 872.0,383.1 872.5,385.0 873.0,386.9 873.5,388.8 874.0,390.7 874.5,392.5 875.0,394.4 875.5,396.2 876.0,398.0 876.5,399.8 877.0,401.6 877.5,403.3 878.0,405.1 878.5,406.8 879.0,408.6 879.5,410.3 880.0,412.0 880.5,413.7 881.0,415.3 881.5,417.0 882.0,418.6 882.5,420.3 883.0,421.9 883.5,420.8 884.0,417.9 884.5,415.0 885.0,412.1 885.5,409.3 886.0,406.5 886.5,403.7 887.0,400.9 887.5,398.1 888.0,395.4 888.5,392.7 889.0,390.0 889.5,387.3 890.0,384.6 890.5,382.0 891.0,379.4 891.5,376.8 892.0,374.2 892.5,371.7 893.0,369.1 893.5,366.6 894.0,364.1 894.5,361.7 895.0,359.2 895.5,356.8 896.0,354.3 896.5,351.9 897.0,349.6 897.5,347.2 898.0,344.9 898.5,342.5 899.0,340.2 899.5,337.9 900.0,335.7 900.5,333.4 901.0,331.2 901.5,329.0 902.0,326.8 902.5,324.6 903.0,322.4 903.5,320.2 904.0,318.1 904.5,316.0 905.0,313.9 905.5,311.8 906.0,309.7 906.5,307.7 907.0,305.6 907.5,303.6 908.0,301.6 908.5,299.6 909.0,297.6 909.5,295.7 910.0,293.7 910.5,291.8 911.0,289.9 911.5,288.0 912.0,286.1 912.5,284.2 913.0,282.4 913.5,280.5 914.0,278.7 914.5,276.9 915.0,275.1 915.5,273.3 916.0,271.5 916.5,269.8 917.0,268.0 917.5,266.3 918.0,264.6 918.5,262.9 919.0,261.2 919.5,259.5 920.0,257.8 920.5,256.2 921.0,254.5 921.5,252.9 922.0,252.8 922.5,255.7 923.0,258.6 923.5,261.4 924.0,264.3 924.5,267.1 925.0,269.9 925.5,272.7 926.0,275.5 926.5,278.2 927.0,281.0 927.5,283.7 928.0,286.3 928.5,289.0 929.0,291.6 929.5,294.3 930.0,296.9 930.5,299.4 931.0,302.0 931.5,304.5 932.0,307.0 932.5,309.5 933.0,312.0 933.5,314.5 934.0,316.9 934.5,319.4 935.0,321.8 935.5,324.1 936.0,326.5 936.5,328.9 937.0,331.2 937.5,333.5 938.0,335.8 938.5,338.1 939.0,340.3 939.5,342.6 940.0,344.8 940.5,347.0 941.0,349.2 941.5,351.4 942.0,353.5 942.5,355.7 943.0,357.8 943.5,359.9 944.0,362.0 944.5,364.1 945.0,366.1 945.5,368.2 946.0,370.2 946.5,372.2 947.0,374.2 947.5,376.2 948.0,378.1 948.5,380.1 949.0,382.0 949.5,383.9 950.0,385.9 950.5,387.7 951.0,389.6 951.5,391.5 952.0,393.3 952.5,395.2 953.0,397.0 953.5,398.8 954.0,400.6 954.5,402.3 955.0,404.1 955.5,405.9 956.0,407.6 956.5,409.3 957.0,411.0 957.5,412.7 958.0,414.4 958.5,416.1 959.0,417.7 959.5,419.4 960.0,421.0 960.5,422.4 961.0,419.5 961.5,416.6 962.0,413.7 962.5,410.9 963.0,408.0 963.5,405.2 964.0,402.4 964.5,399.7 965.0,396.9 965.5,394.2 966.0,391.5 966.5,388.8 967.0,386.1 967.5,383.5 968.0,380.9 968.5,378.2 969.0,375.7 969.5,373.1 970.0,370.6 970.5,368.0 971.0,365.5 971.5,363.0 972.0,360.6 972.5,358.1 973.0,355.7 973.5,353.3 974.0,350.9 974.5,348.5 975.0,346.2 975.5,343.8 976.0,341.5 976.5,339.2 977.0,336.9 977.5,334.7 978.0,332.4 978.5,330.2 979.0,328.0 979.5,325.8 980.0,323.6 980.5,321.4 981.0,319.3 981.5,317.2 982.0,315.1 982.5,313.0 983.0,310.9 983.5,308.8 984.0,306.8 984.5,304.7 985.0,302.7 985.5,300.7 986.0,298.7 986.5,296.8 987.0,294.8 987.5,292.9 988.0,291.0 988.5,289.1 989.0,287.2 989.5,285.3 990.0,283.4 990.5,281.6 991.0,279.7 991.5,277.9 992.0,276.1 992.5,274.3 993.0,272.5 993.5,270.8 994.0,269.0 994.5,267.3 995.0,265.5 995.5,263.8 996.0,262.1 996.5,260.4 997.0,258.8 997.5,257.1 998.0,255.5 998.5,253.8 999.0,252.2 999.5,254.0 1000.0,257.0 1000.5,259.8 1001.0,262.7 1001.5,265.5 1002.0,268.4 1002.5,271.2 1003.0,273.9 1003.5,276.7 1004.0,279.4 1004.5,282.1 1005.0,284.8 1005.5,287.5 1006.0,290.2 1006.5,292.8 1007.0,295.4 1007.5,298.0 1008.0,300.6 1008.5,303.1 1009.0,305.6 1009.5,308.2 1010.0,310.6 1010.5,313.1 1011.0,315.6 1011.5,318.0 1012.0,320.4 1012.5,322.8 1013.0,325.2 1013.5,327.5 1014.0,329.9 1014.5,332.2 1015.0,334.5 1015.5,336.8 1016.0,339.1 1016.5,341.3 1017.0,343.6 1017.5,345.8 1018.0,348.0 1018.5,350.2 1019.0,352.3 1019.5,354.5 1020.0,356.6 1020.5,358.7 1021.0,360.8 1021.5,362.9 1022.0,365.0 1022.5,367.0 1023.0,369.1 1023.5,371.1 1024.0,373.1 1024.5,375.1 1025.0,377.0 1025.5,379.0 1026.0,380.9 1026.5,382.9 1027.0,384.8 1027.5,386.7 1028.0,388.6 1028.5,390.4 1029.0,392.3 1029.5,394.1 1030.0,396.0 1030.5,397.8 1031.0,399.6 1031.5,401.4 1032.0,403.1 1032.5,404.9 1033.0,406.6 1033.5,408.4 1034.0,410.1 1034.5,411.8 1035.0,413.5 1035.5,415.1 1036.0,416.8 1036.5,418.5 1037.0,420.1 1037.5,421.7 1038.0,421.1 1038.5,418.2 1039.0,415.3 1039.5,412.5 1040.0,409.6 1040.5,406.8 1041.0,404.0 1041.5,401.2 1042.0,398.4 1042.5,395.7 1043.0,393.0 1043.5,390.3 1044.0,387.6 1044.5,385.0 1045.0,382.3 1045.5,379.7 1046.0,377.1 1046.5,374.5 1047.0,372.0 1047.5,369.4 1048.0,366.9 1048.5,364.4 1049.0,362.0 1049.5,359.5 1050.0,357.1 1050.5,354.6 1051.0,352.2 1051.5,349.9 1052.0,347.5 1052.5,345.1 1053.0,342.8 1053.5,340.5 1054.0,338.2 1054.5,335.9 1055.0,333.7 1055.5,331.4 1056.0,329.2 1056.5,327.0 1057.0,324.8 1057.5,322.7 1058.0,320.5 1058.5,318.4 1059.0,316.2 1059.5,314.1 1060.0,312.1 1060.5,310.0 1061.0,307.9 1061.5,305.9 1062.0,303.9 1062.5,301.9 1063.0,299.9 1063.5,297.9 1064.0,295.9 1064.5,294.0 1065.0,292.0 1065.5,290.1 1066.0,288.2 1066.5,286.3 1067.0,284.5 1067.5,282.6 1068.0,280.8 1068.5,278.9 1069.0,277.1 1069.5,275.3 1070.0,273.5 1070.5,271.7 1071.0,270.0 1071.5,268.2 1072.0,266.5 1072.5,264.8 1073.0,263.1 1073.5,261.4 1074.0,259.7 1074.5,258.0 1075.0,256.4 1075.5,254.7 1076.0,253.1 1076.5,252.4 1077.0,255.3 1077.5,258.2 1078.0,261.1 1078.5,264.0 1079.0,266.8 1079.5,269.6 1080.0,272.4 1080.5,275.2 1081.0,277.9 1081.5,280.6 1082.0,283.3 1082.5,286.0 1083.0,288.7 1083.5,291.3 1084.0,293.9 1084.5,296.5 1085.0,299.1 1085.5,301.7 1086.0,304.2 1086.5,306.7 1087.0,309.2 1087.5,311.7 1088.0,314.2 1088.5,316.6 1089.0,319.1 1089.5,321.5 1090.0,323.9 1090.5,326.2 1091.0,328.6 1091.5,330.9 1092.0,333.2 1092.5,335.5 1093.0,337.8 1093.5,340.1 1094.0,342.3 1094.5,344.5 1095.0,346.7 1095.5,348.9 1096.0,351.1 1096.5,353.3 1097.0,355.4 1097.5,357.5 1098.0,359.6 1098.5,361.7 1099.0,363.8 1099.5,365.9 1100.0,367.9 1100.5,370.0 1101.0,372.0 1101.5,374.0 1102.0,375.9 1102.5,377.9 1103.0,379.9 1103.5,381.8 1104.0,383.7 1104.5,385.6 1105.0,387.5 1105.5,389.4 1106.0,391.3 1106.5,393.1 1107.0,394.9 1107.5,396.8 1108.0,398.6 1108.5,400.4 1109.0,402.1 1109.5,403.9 1110.0,405.7 1110.5,407.4 1111.0,409.1 1111.5,410.8 1112.0,412.5 1112.5,414.2 1113.0,415.9 1113.5,417.5 1114.0,419.2 1114.5,420.8 1115.0,422.4 1115.5,419.9 1116.0,417.0 1116.5,414.1 1117.0,411.2 1117.5,408.4 1118.0,405.6 1118.5,402.8 1119.0,400.0 1119.5,397.2 1120.0,394.5 1120.5,391.8 1121.0,389.1 1121.5,386.4 1122.0,383.8 1122.5,381.2 1123.0,378.6 1123.5,376.0 1124.0,373.4 1124.5,370.9 1125.0,368.3 1125.5,365.8 1126.0,363.3 1126.5,360.9 1127.0,358.4 1127.5,356.0 1128.0,353.6 1128.5,351.2 1129.0,348.8 1129.5,346.5 1130.0,344.1 1130.5,341.8 1131.0,339.5 1131.5,337.2 1132.0,334.9 1132.5,332.7 1133.0,330.5 1133.5,328.2 1134.0,326.0 1134.5,323.9 1135.0,321.7 1135.5,319.6 1136.0,317.4 1136.5,315.3 1137.0,313.2 1137.5,311.1 1138.0,309.1 1138.5,307.0 1139.0,305.0 1139.5,303.0 1140.0,301.0 1140.5,299.0 1141.0,297.0 1141.5,295.1 1142.0,293.1 1142.5,291.2 1143.0,289.3 1143.5,287.4 1144.0,285.5 1144.5,283.6 1145.0,281.8 1145.5,279.9 1146.0,278.1 1146.5,276.3 1147.0,274.5 1147.5,272.7 1148.0,271.0 1148.5,269.2 1149.0,267.5 1149.5,265.7 1150.0,264.0 1150.5,262.3 1151.0,260.6 1151.5,259.0 1152.0,257.3 1152.5,255.7 1153.0,254.0 1153.5,252.4 1154.0,253.7 1154.5,256.6 1155.0,259.5 1155.5,262.4 1156.0,265.2 1156.5,268.0 1157.0,270.8 1157.5,273.6 1158.0,276.4 1158.5,279.1 1159.0,281.8 1159.5,284.5 1160.0,287.2 1160.5,289.8 1161.0,292.5 1161.5,295.1 1162.0,297.7 1162.5,300.3 1163.0,302.8 1163.5,305.3 1164.0,307.9 1164.5,310.3 1165.0,312.8 1165.5,315.3 1166.0,317.7 1166.5,320.1 1167.0,322.5 1167.5,324.9 1168.0,327.3 1168.5,329.6 1169.0,331.9 1169.5,334.2 1170.0,336.5 1170.5,338.8 1171.0,341.1 1171.5,343.3 1172.0,345.5 1172.5,347.7 1173.0,349.9 1173.5,352.1 1174.0,354.2 1174.5,356.4 1175.0,358.5 1175.5,360.6 1176.0,362.7 1176.5,364.7 1177.0,366.8 1177.5,368.8 1178.0,370.8 1178.5,372.8 1179.0,374.8 1179.5,376.8 1180.0,378.8 1180.5,380.7 1181.0,382.6 1181.5,384.6 1182.0,386.5 1182.5,388.3 1183.0,390.2 1183.5,392.1 1184.0,393.9 1184.5,395.7 1185.0,397.6 1185.5,399.4 1186.0,401.1 1186.5,402.9 1187.0,404.7 1187.5,406.4 1188.0,408.1 1188.5,409.9 1189.0,411.6 1189.5,413.3 1190.0,414.9 1190.5,416.6 1191.0,418.3 1191.5,419.9 1192.0,421.5 1192.5,421.5 1193.0,418.6 1193.5,415.7 1194.0,412.8 1194.5,410.0 1195.0,407.1 1195.5,404.3 1196.0,401.5 1196.5,398.8 1197.0,396.0 1197.5,393.3 1198.0,390.6 1198.5,387.9 1199.0,385.3 1199.5,382.6 1200.0,380.0 1200.5,377.4 1201.0,374.8 1201.5,372.3 1202.0,369.7 1202.5,367.2 1203.0,364.7 1203.5,362.2 1204.0,359.8 1204.5,357.3 1205.0,354.9 1205.5,352.5 1206.0,350.1 1206.5,347.8 1207.0,345.4 1207.5,343.1 1208.0,340.8 1208.5,338.5 1209.0,336.2 1209.5,334.0 1210.0,331.7 1210.5,329.5 1211.0,327.3 1211.5,325.1 1212.0,322.9 1212.5,320.8 1213.0,318.6 1213.5,316.5 1214.0,314.4 1214.5,312.3 1215.0,310.2 1215.5,308.2 1216.0,306.1 1216.5,304.1 1217.0,302.1 1217.5,300.1 1218.0,298.1 1218.5,296.2 1219.0,294.2 1219.5,292.3 1220.0,290.3 1220.5,288.4 1221.0,286.6 1221.5,284.7 1222.0,282.8 1222.5,281.0 1223.0,279.1 1223.5,277.3 1224.0,275.5 1224.5,273.7 1225.0,272.0 1225.5,270.2 1226.0,268.4 1226.5,266.7 1227.0,265.0 1227.5,263.3 1228.0,261.6 1228.5,259.9 1229.0,258.2 1229.5,256.6 1230.0,254.9 1230.5,253.3 1231.0,252.1 1231.5,255.0 1232.0,257.9 1232.5,260.8 1233.0,263.6 1233.5,266.5 1234.0,269.3 1234.5,272.1 1235.0,274.8 1235.5,277.6 1236.0,280.3 1236.5,283.0 1237.0,285.7 1237.5,288.4 1238.0,291.0 1238.5,293.6 1239.0,296.2 1239.5,298.8 1240.0,301.4 1240.5,303.9 1241.0,306.4 1241.5,309.0 1242.0,311.4 1242.5,313.9 1243.0,316.3 1243.5,318.8 1244.0,321.2 1244.5,323.6 1245.0,325.9 1245.5,328.3 1246.0,330.6 1246.5,333.0 1247.0,335.3 1247.5,337.5 1248.0,339.8 1248.5,342.0 1249.0,344.3 1249.5,346.5 1250.0,348.7 1250.5,350.9 1251.0,353.0 1251.5,355.2 1252.0,357.3 1252.5,359.4 1253.0,361.5 1253.5,363.6 1254.0,365.6 1254.5,367.7 1255.0,369.7 1255.5,371.7 1256.0,373.7 1256.5,375.7 1257.0,377.7 1257.5,379.6 1258.0,381.6 1258.5,383.5 1259.0,385.4 1259.5,387.3 1260.0,389.2 1260.5,391.0 1261.0,392.9 1261.5,394.7 1262.0,396.5 1262.5,398.3 1263.0,400.1 1263.5,401.9 1264.0,403.7 1264.5,405.4 1265.0,407.2 1265.5,408.9 1266.0,410.6 1266.5,412.3 1267.0,414.0 1267.5,415.7 1268.0,417.3 1268.5,419.0 1269.0,420.6 1269.5,422.2 1270.0,420.2 1270.5,417.3 1271.0,414.4 1271.5,411.6 1272.0,408.7 1272.5,405.9 1273.0,403.1 1273.5,400.3 1274.0,397.6 1274.5,394.8 1275.0,392.1 1275.5,389.4 1276.0,386.8 1276.5,384.1 1277.0,381.5 1277.5,378.9 1278.0,376.3 1278.5,373.7 1279.0,371.2 1279.5,368.6 1280.0,366.1 1280.5,363.6 1281.0,361.2 1281.5,358.7 1282.0,356.3 1282.5,353.9 1283.0,351.5 1283.5,349.1 1284.0,346.7 1284.5,344.4 1285.0,342.1 1285.5,339.8 1286.0,337.5 1286.5,335.2 1287.0,333.0 1287.5,330.7 1288.0,328.5 1288.5,326.3 1289.0,324.1 1289.5,322.0 1290.0,319.8 1290.5,317.7 1291.0,315.6 1291.5,313.5 1292.0,311.4 1292.5,309.3 1293.0,307.3 1293.5,305.2 1294.0,303.2 1294.5,301.2 1295.0,299.2 1295.5,297.2 1296.0,295.3 1296.5,293.3 1297.0,291.4 1297.5,289.5 1298.0,287.6 1298.5,285.7 1299.0,283.9 1299.5,282.0 1300.0,280.2 1300.5,278.3 1301.0,276.5 1301.5,274.7 1302.0,272.9 1302.5,271.2 1303.0,269.4 1303.5,267.7 1304.0,266.0 1304.5,264.2 1305.0,262.5 1305.5,260.8 1306.0,259.2 1306.5,257.5 1307.0,255.9 1307.5,254.2 1308.0,252.6 1308.5,253.3 1309.0,256.3 1309.5,259.2 1310.0,262.0 1310.5,264.9 1311.0,267.7 1311.5,270.5 1312.0,273.3 1312.5,276.0 1313.0,278.8 1313.5,281.5 1314.0,284.2 1314.5,286.9 1315.0,289.5 1315.5,292.2 1316.0,294.8 1316.5,297.4 1317.0,299.9 1317.5,302.5 1318.0,305.0 1318.5,307.6 1319.0,310.0 1319.5,312.5 1320.0,315.0 1320.5,317.4 1321.0,319.8 1321.5,322.2 1322.0,324.6 1322.5,327.0 1323.0,329.3 1323.5,331.7 1324.0,334.0 1324.5,336.3 1325.0,338.5 1325.5,340.8 1326.0,343.0 1326.5,345.2 1327.0,347.4 1327.5,349.6 1328.0,351.8 1328.5,354.0 1329.0,356.1 1329.5,358.2 1330.0,360.3 1330.5,362.4 1331.0,364.5 1331.5,366.5 1332.0,368.6 1332.5,370.6 1333.0,372.6 1333.5,374.6 1334.0,376.6 1334.5,378.5 1335.0,380.5 1335.5,382.4 1336.0,384.3 1336.5,386.2 1337.0,388.1 1337.5,390.0 1338.0,391.9 1338.5,393.7 1339.0,395.5 1339.5,397.3 1340.0,399.1 1340.5,400.9 1341.0,402.7 1341.5,404.5 1342.0,406.2 1342.5,407.9 1343.0,409.7 1343.5,411.4 1344.0,413.1 1344.5,414.7 1345.0,416.4 1345.5,418.1 1346.0,419.7 1346.5,421.3 1347.0,421.9 1347.5,418.9 1348.0,416.0 1348.5,413.2 1349.0,410.3 1349.5,407.5 1350.0,404.7 1350.5,401.9 1351.0,399.1 1351.5,396.4 1352.0,393.6 1352.5,390.9 1353.0,388.3 1353.5,385.6 1354.0,382.9 1354.5,380.3 1355.0,377.7 1355.5,375.1 1356.0,372.6 1356.5,370.0 1357.0,367.5 1357.5,365.0 1358.0,362.5 1358.5,360.1 1359.0,357.6 1359.5,355.2 1360.0,352.8 1360.5,350.4 1361.0,348.1 1361.5,345.7 1362.0,343.4 1362.5,341.1 1363.0,338.8 1363.5,336.5 1364.0,334.2 1364.5,332.0 1365.0,329.8 1365.5,327.5 1366.0,325.3 1366.5,323.2 1367.0,321.0 1367.5,318.9 1368.0,316.8 1368.5,314.6 1369.0,312.6 1369.5,310.5 1370.0,308.4 1370.5,306.4 1371.0,304.3 1371.5,302.3 1372.0,300.3 1372.5,298.4 1373.0,296.4 1373.5,294.4 1374.0,292.5 1374.5,290.6 1375.0,288.7 1375.5,286.8 1376.0,284.9 1376.5,283.0 1377.0,281.2 1377.5,279.4 1378.0,277.5 1378.5,275.7 1379.0,273.9 1379.5,272.2 1380.0,270.4 1380.5,268.7 1381.0,266.9 1381.5,265.2 1382.0,263.5 1382.5,261.8 1383.0,260.1 1383.5,258.4 1384.0,256.8 1384.5,255.1 1385.0,253.5 1385.5,251.9 1386.0,254.6 1386.5,257.5 1387.0,260.4 1387.5,263.3 1388.0,266.1 1388.5,268.9 1389.0,271.7 1389.5,274.5 1390.0,277.2 1390.5,280.0 1391.0,282.7 1391.5,285.4 1392.0,288.0 1392.5,290.7 1393.0,293.3 1393.5,295.9 1394.0,298.5 1394.5,301.1 1395.0,303.6 1395.5,306.1 1396.0,308.7 1396.5,311.1 1397.0,313.6 1397.5,316.1 1398.0,318.5 1398.5,320.9 1399.0,323.3 1399.5,325.7 1400.0,328.0 1400.5,330.4 1401.0,332.7 1401.5,335.0 1402.0,337.3 1402.5,339.5 1403.0,341.8 1403.5,344.0 1404.0,346.2 1404.5,348.4 1405.0,350.6 1405.5,352.8 1406.0,354.9 1406.5,357.0 1407.0,359.1 1407.5,361.2 1408.0,363.3 1408.5,365.4 1409.0,367.4 1409.5,369.5 1410.0,371.5 1410.5,373.5 1411.0,375.5"/>
<polyline fill="none" stroke="#4daf4a" stroke-width="2.5" stroke-linejoin="round" shape-rendering="crispEdges" points="70.0,337.2 70.5,337.2 71.0,337.2 71.5,337.2 72.0,337.2 72.5,337.2 73.0,337.2 73.5,337.2 74.0,337.2 74.5,337.2 75.0,337.2 75.5,337.2 76.0,337.2 76.5,337.2 77.0,337.2 77.5,337.2 78.0,337.2 78.5,337.2 79.0,337.2 79.5,337.2 80.0,337.2 80.5,337.2 81.0,337.2 81.5,337.2 82.0,337.2 82.5,337.2 83.0,337.2 83.5,337.2 84.0,337.2 84.5,337.2 85.0,337.2 85.5,337.2 86.0,337.2 86.5,337.2 87.0,337.2 87.5,337.2 88.0,337.2 88.5,337.0 89.0,337.2 89.5,338.2 90.0,339.8 90.5,342.1 91.0,344.9 91.5,348.3 92.0,352.0 92.5,356.2 93.0,360.7 93.5,365.5 94.0,370.6 94.5,375.9 95.0,381.4 95.5,387.0 96.0,392.8 96.5,398.7 97.0,404.7 97.5,410.8 98.0,416.8 98.5,422.9 99.0,429.1 99.5,435.1 100.0,441.2 100.5,447.2 101.0,453.2 101.5,459.1 102.0,465.0 102.5,470.8 103.0,476.4 103.5,482.0 104.0,487.5 104.5,492.8 105.0,498.1 105.5,503.2 106.0,508.2 106.5,513.1 107.0,517.8 107.5,522.4 108.0,526.9 108.5,531.2 109.0,535.4 109.5,539.4 110.0,543.3 110.5,547.4 111.0,550.5 111.5,551.9 112.0,551.8 112.5,550.4 113.0,547.7 113.5,544.0 114.0,539.3 114.5,533.7 115.0,527.4 115.5,520.4 116.0,512.7 116.5,504.6 117.0,496.0 117.5,487.0 118.0,477.7 118.5,468.1 119.0,458.3 119.5,448.3 120.0,438.1 120.5,427.9 121.0,417.6 121.5,407.3 122.0,396.9 122.5,386.6 123.0,376.3 123.5,366.1 124.0,356.0 124.5,345.9 125.0,336.0 125.5,326.2 126.0,316.6 126.5,307.1 127.0,297.8 127.5,288.7 128.0,279.7 128.5,271.0 129.0,262.4 129.5,254.0 130.0,245.9 130.5,237.9 131.0,230.1 131.5,222.5 132.0,215.0 132.5,207.7 133.0,200.6 133.5,193.7 134.0,186.9 134.5,180.3 135.0,173.9 135.5,167.7 136.0,161.6 136.5,155.7 137.0,150.0 137.5,144.4 138.0,139.0 138.5,133.7 139.0,128.6 139.5,123.7 140.0,118.9 140.5,114.3 141.0,109.8 141.5,105.5 142.0,101.3 142.5,97.2 143.0,93.3 143.5,89.5 144.0,85.9 144.5,82.4 145.0,79.0 145.5,75.7 146.0,72.6 146.5,69.6 147.0,66.7 147.5,64.0 148.0,61.3 148.5,58.8 149.0,56.1 149.5,53.9 150.0,53.5 150.5,54.6 151.0,57.1 151.5,60.8 152.0,65.7 152.5,71.6 153.0,78.4 153.5,85.9 154.0,94.2 154.5,103.0 155.0,112.4 155.5,122.2 156.0,132.3 156.5,142.8 157.0,153.6 157.5,164.6 158.0,175.7 158.5,186.9 159.0,198.3 159.5,209.6 160.0,221.0 160.5,232.3 161.0,243.6 161.5,254.9 162.0,266.0 162.5,277.1 163.0,288.0 163.5,298.7 164.0,309.4 164.5,319.8 165.0,330.1 165.5,340.2 166.0,350.1 166.5,359.8 167.0,369.3 167.5,378.6 168.0,387.8 168.5,396.7 169.0,405.3 169.5,413.8 170.0,422.1 170.5,430.1 171.0,438.0 171.5,445.6 172.0,453.0 172.5,460.3 173.0,467.3 173.5,474.1 174.0,480.7 174.5,487.2 175.0,493.4 175.5,499.5 176.0,505.3 176.5,511.0 177.0,516.5 177.5,521.9 178.0,527.0 178.5,532.0 179.0,536.9 179.5,541.6 180.0,546.1 180.5,550.5 181.0,554.7 181.5,558.8 182.0,562.8 182.5,566.6 183.0,570.3 183.5,573.8 184.0,577.3 184.5,580.6 185.0,583.8 185.5,586.9 186.0,589.9 186.5,592.8 187.0,595.6 187.5,598.2 188.0,601.2 188.5,602.4 189.0,602.0 189.5,600.1 190.0,597.0 190.5,592.7 191.0,587.3 191.5,581.0 192.0,573.9 192.5,566.1 193.0,557.7 193.5,548.7 194.0,539.2 194.5,529.4 195.0,519.2 195.5,508.7 196.0,498.0 196.5,487.1 197.0,476.1 197.5,465.0 198.0,453.9 198.5,442.7 199.0,431.5 199.5,420.4 200.0,409.3 200.5,398.4 201.0,387.5 201.5,376.7 202.0,366.1 202.5,355.6 203.0,345.3 203.5,335.1 204.0,325.1 204.5,315.3 205.0,305.7 205.5,296.3 206.0,287.1 206.5,278.1 207.0,269.3 207.5,260.7 208.0,252.3 208.5,244.1 209.0,236.2 209.5,228.4 210.0,220.8 210.5,213.5 211.0,206.4 211.5,199.4 212.0,192.7 212.5,186.1 213.0,179.8 213.5,173.6 214.0,167.7 214.5,161.9 215.0,156.3 215.5,150.8 216.0,145.6 216.5,140.5 217.0,135.5 217.5,130.8 218.0,126.2 218.5,121.7 219.0,117.4 219.5,113.2 220.0,109.2 220.5,105.3 221.0,101.5 221.5,97.9 222.0,94.4 222.5,91.0 223.0,87.8 223.5,84.6 224.0,81.6 224.5,78.7 225.0,75.8 225.5,73.1 226.0,70.5 226.5,67.5 227.0,65.9 227.5,65.9 228.0,67.5 228.5,70.3 229.0,74.4 229.5,79.6 230.0,85.7 230.5,92.6 231.0,100.3 231.5,108.7 232.0,117.6 232.5,127.0 233.0,136.8 233.5,147.0 234.0,157.5 234.5,168.2 235.0,179.1 235.5,190.2 236.0,201.3 236.5,212.6 237.0,223.8 237.5,235.1 238.0,246.3 238.5,257.5 239.0,268.6 239.5,279.6 240.0,290.4 240.5,301.2 241.0,311.8 241.5,322.3 242.0,332.6 242.5,342.7 243.0,352.6 243.5,362.3 244.0,371.9 244.5,381.2 245.0,390.4 245.5,399.3 246.0,408.0 246.5,416.6 247.0,424.9 247.5,433.0 248.0,440.9 248.5,448.5 249.0,456.0 249.5,463.3 250.0,470.4 250.5,477.2 251.0,483.9 251.5,490.4 252.0,496.7 252.5,502.7 253.0,508.7 253.5,514.4 254.0,519.9 254.5,525.3 255.0,530.5 255.5,535.5 256.0,540.4 256.5,545.1 257.0,549.7 257.5,554.1 258.0,558.4 258.5,562.5 259.0,566.4 259.5,570.3 260.0,574.0 260.5,577.6 261.0,581.0 261.5,584.4 262.0,587.6 262.5,590.7 263.0,593.7 263.5,596.6 264.0,599.4 264.5,602.0 265.0,605.0 265.5,607.1 266.0,607.6 266.5,606.4 267.0,604.0 267.5,600.2 268.0,595.4 268.5,589.6 269.0,582.9 269.5,575.4 270.0,567.2 270.5,558.5 271.0,549.2 271.5,539.5 272.0,529.4 272.5,519.1 273.0,508.4 273.5,497.6 274.0,486.6 274.5,475.5 275.0,464.3 275.5,453.0 276.0,441.8 276.5,430.6 277.0,419.4 277.5,408.3 278.0,397.3 278.5,386.4 279.0,375.7 279.5,365.0 280.0,354.5 280.5,344.2 281.0,334.1 281.5,324.1 282.0,314.3 282.5,304.7 283.0,295.3 283.5,286.2 284.0,277.2 284.5,268.4 285.0,259.9 285.5,251.5 286.0,243.4 286.5,235.4 287.0,227.7 287.5,220.2 288.0,212.9 288.5,205.7 289.0,198.8 289.5,192.1 290.0,185.6 290.5,179.3 291.0,173.2 291.5,167.2 292.0,161.4 292.5,155.9 293.0,150.4 293.5,145.2 294.0,140.1 294.5,135.2 295.0,130.5 295.5,125.9 296.0,121.4 296.5,117.1 297.0,113.0 297.5,109.0 298.0,105.1 298.5,101.4 299.0,97.8 299.5,94.3 300.0,90.9 300.5,87.7 301.0,84.5 301.5,81.5 302.0,78.6 302.5,75.8 303.0,73.1 303.5,70.3 304.0,67.7 304.5,66.8 305.0,67.5 305.5,69.6 306.0,73.0 306.5,77.5 307.0,83.1 307.5,89.6 308.0,96.8 308.5,104.8 309.0,113.4 309.5,122.5 310.0,132.1 310.5,142.1 311.0,152.4 311.5,163.0 312.0,173.8 312.5,184.7 313.0,195.8 313.5,207.0 314.0,218.2 314.5,229.4 315.0,240.6 315.5,251.8 316.0,262.9 316.5,274.0 317.0,284.9 317.5,295.7 318.0,306.4 318.5,316.9 319.0,327.3 319.5,337.5 320.0,347.5 320.5,357.3 321.0,367.0 321.5,376.4 322.0,385.7 322.5,394.7 323.0,403.5 323.5,412.1 324.0,420.6 324.5,428.8 325.0,436.8 325.5,444.5 326.0,452.1 326.5,459.5 327.0,466.7 327.5,473.6 328.0,480.4 328.5,487.0 329.0,493.3 329.5,499.5 330.0,505.5 330.5,511.3 331.0,517.0 331.5,522.4 332.0,527.7 332.5,532.8 333.0,537.8 333.5,542.6 334.0,547.2 334.5,551.7 335.0,556.1 335.5,560.2 336.0,564.3 336.5,568.2 337.0,572.0 337.5,575.6 338.0,579.1 338.5,582.5 339.0,585.8 339.5,589.0 340.0,592.0 340.5,595.0 341.0,597.8 341.5,600.6 342.0,603.2 342.5,606.2 343.0,607.5 343.5,607.2 344.0,605.5 344.5,602.5 345.0,598.2 345.5,592.9 346.0,586.7 346.5,579.7 347.0,571.9 347.5,563.4 348.0,554.5 348.5,545.0 349.0,535.1 349.5,524.9 350.0,514.4 350.5,503.7 351.0,492.7 351.5,481.7 352.0,470.5 352.5,459.3 353.0,448.1 353.5,436.9 354.0,425.7 354.5,414.5 355.0,403.5 355.5,392.5 356.0,381.7 356.5,371.0 357.0,360.4 357.5,350.0 358.0,339.7 358.5,329.7 359.0,319.8 359.5,310.1 360.0,300.6 360.5,291.3 361.0,282.2 361.5,273.3 362.0,264.6 362.5,256.1 363.0,247.9 363.5,239.8 364.0,232.0 364.5,224.4 365.0,216.9 365.5,209.7 366.0,202.7 366.5,195.9 367.0,189.2 367.5,182.8 368.0,176.6 368.5,170.5 369.0,164.6 369.5,159.0 370.0,153.4 370.5,148.1 371.0,142.9 371.5,137.9 372.0,133.1 372.5,128.4 373.0,123.9 373.5,119.5 374.0,115.3 374.5,111.2 375.0,107.3 375.5,103.4 376.0,99.8 376.5,96.2 377.0,92.8 377.5,89.5 378.0,86.3 378.5,83.2 379.0,80.2 379.5,77.3 380.0,74.6 380.5,71.9 381.0,68.9 381.5,67.1 382.0,66.9 382.5,68.2 383.0,70.9 383.5,74.9 384.0,79.9 384.5,85.8 385.0,92.7 385.5,100.3 386.0,108.5 386.5,117.4 387.0,126.7 387.5,136.5 388.0,146.6 388.5,157.0 389.0,167.7 389.5,178.6 390.0,189.6 390.5,200.7 391.0,211.9 391.5,223.1 392.0,234.4 392.5,245.6 393.0,256.7 393.5,267.8 394.0,278.8 394.5,289.7 395.0,300.4 395.5,311.0 396.0,321.5 396.5,331.8 397.0,341.9 397.5,351.9 398.0,361.6 398.5,371.2 399.0,380.5 399.5,389.7 400.0,398.6 400.5,407.3 401.0,415.9 401.5,424.2 402.0,432.3 402.5,440.2 403.0,447.9 403.5,455.4 404.0,462.7 404.5,469.7 405.0,476.6 405.5,483.3 406.0,489.8 406.5,496.1 407.0,502.2 407.5,508.1 408.0,513.8 408.5,519.4 409.0,524.8 409.5,530.0 410.0,535.0 410.5,539.9 411.0,544.7 411.5,549.2 412.0,553.6 412.5,557.9 413.0,562.0 413.5,566.0 414.0,569.9 414.5,573.6 415.0,577.2 415.5,580.7 416.0,584.0 416.5,587.2 417.0,590.3 417.5,593.3 418.0,596.2 418.5,599.0 419.0,601.7 419.5,604.6 420.0,607.0 420.5,607.6 421.0,606.7 421.5,604.3 422.0,600.7 422.5,596.0 423.0,590.3 423.5,583.7 424.0,576.3 424.5,568.2 425.0,559.6 425.5,550.3 426.0,540.7 426.5,530.7 427.0,520.3 427.5,509.7 428.0,498.9 428.5,487.9 429.0,476.8 429.5,465.6 430.0,454.4 430.5,443.2 431.0,431.9 431.5,420.8 432.0,409.7 432.5,398.6 433.0,387.7 433.5,376.9 434.0,366.3 434.5,355.8 435.0,345.4 435.5,335.3 436.0,325.3 436.5,315.5 437.0,305.9 437.5,296.5 438.0,287.3 438.5,278.3 439.0,269.5 439.5,260.9 440.0,252.5 440.5,244.3 441.0,236.4 441.5,228.6 442.0,221.1 442.5,213.7 443.0,206.6 443.5,199.7 444.0,192.9 444.5,186.4 445.0,180.0 445.5,173.9 446.0,167.9 446.5,162.1 447.0,156.5 447.5,151.1 448.0,145.8 448.5,140.7 449.0,135.8 449.5,131.0 450.0,126.4 450.5,122.0 451.0,117.6 451.5,113.5 452.0,109.5 452.5,105.6 453.0,101.8 453.5,98.2 454.0,94.7 454.5,91.3 455.0,88.0 455.5,84.9 456.0,81.9 456.5,78.9 457.0,76.1 457.5,73.4 458.0,70.7 458.5,67.9 459.0,66.8 459.5,67.3 460.0,69.3 460.5,72.5 461.0,76.9 461.5,82.4 462.0,88.7 462.5,95.9 463.0,103.8 463.5,112.3 464.0,121.4 464.5,130.9 465.0,140.9 465.5,151.1 466.0,161.7 466.5,172.4 467.0,183.4 467.5,194.5 468.0,205.6 468.5,216.8 469.0,228.1 469.5,239.3 470.0,250.5 470.5,261.6 471.0,272.7 471.5,283.6 472.0,294.4 472.5,305.1 473.0,315.7 473.5,326.1 474.0,336.3 474.5,346.3 475.0,356.2 475.5,365.8 476.0,375.3 476.5,384.6 477.0,393.6 477.5,402.5 478.0,411.1 478.5,419.6 479.0,427.8 479.5,435.8 480.0,443.6 480.5,451.2 481.0,458.6 481.5,465.8 482.0,472.8 482.5,479.6 483.0,486.2 483.5,492.6 484.0,498.8 484.5,504.8 485.0,510.7 485.5,516.3 486.0,521.8 486.5,527.1 487.0,532.2 487.5,537.2 488.0,542.0 488.5,546.7 489.0,551.2 489.5,555.5 490.0,559.7 490.5,563.8 491.0,567.7 491.5,571.5 492.0,575.2 492.5,578.7 493.0,582.1 493.5,585.4 494.0,588.6 494.5,591.7 495.0,594.6 495.5,597.5 496.0,600.2 496.5,602.9 497.0,605.9 497.5,607.4 498.0,607.4 498.5,605.8 499.0,602.9 499.5,598.8 500.0,593.6 500.5,587.5 501.0,580.5 501.5,572.8 502.0,564.5 502.5,555.6 503.0,546.2 503.5,536.3 504.0,526.1 504.5,515.7 505.0,505.0 505.5,494.1 506.0,483.0 506.5,471.9 507.0,460.7 507.5,449.5 508.0,438.2 508.5,427.0 509.0,415.9 509.5,404.8 510.0,393.8 510.5,383.0 511.0,372.2 511.5,361.6 512.0,351.2 512.5,340.9 513.0,330.9 513.5,320.9 514.0,311.2 514.5,301.7 515.0,292.4 515.5,283.3 516.0,274.4 516.5,265.7 517.0,257.2 517.5,248.9 518.0,240.8 518.5,232.9 519.0,225.3 519.5,217.8 520.0,210.6 520.5,203.5 521.0,196.7 521.5,190.0 522.0,183.6 522.5,177.3 523.0,171.2 523.5,165.3 524.0,159.6 524.5,154.1 525.0,148.7 525.5,143.6 526.0,138.5 526.5,133.7 527.0,129.0 527.5,124.4 528.0,120.0 528.5,115.8 529.0,111.7 529.5,107.7 530.0,103.9 530.5,100.2 531.0,96.6 531.5,93.2 532.0,89.9 532.5,86.6 533.0,83.5 533.5,80.6 534.0,77.7 534.5,74.9 535.0,72.2 535.5,69.3 536.0,67.2 536.5,66.8 537.0,68.0 537.5,70.5 538.0,74.3 538.5,79.2 539.0,85.1 539.5,91.8 540.0,99.3 540.5,107.5 541.0,116.3 541.5,125.5 542.0,135.3 542.5,145.3 543.0,155.7 543.5,166.4 544.0,177.2 544.5,188.2 545.0,199.4 545.5,210.5 546.0,221.8 546.5,233.0 547.0,244.2 547.5,255.4 548.0,266.5 548.5,277.5 549.0,288.4 549.5,299.2 550.0,309.8 550.5,320.3 551.0,330.6 551.5,340.7 552.0,350.7 552.5,360.4 553.0,370.0 553.5,379.4 554.0,388.6 554.5,397.5 555.0,406.3 555.5,414.9 556.0,423.2 556.5,431.3 557.0,439.3 557.5,447.0 558.0,454.5 558.5,461.8 559.0,468.9 559.5,475.8 560.0,482.5 560.5,489.0 561.0,495.3 561.5,501.5 562.0,507.4 562.5,513.2 563.0,518.7 563.5,524.2 564.0,529.4 564.5,534.5 565.0,539.4 565.5,544.1 566.0,548.7 566.5,553.1 567.0,557.4 567.5,561.6 568.0,565.6 568.5,569.4 569.0,573.2 569.5,576.8 570.0,580.2 570.5,583.6 571.0,586.8 571.5,590.0 572.0,593.0 572.5,595.9 573.0,598.7 573.5,601.4 574.0,604.2 574.5,606.8 575.0,607.6 575.5,606.8 576.0,604.7 576.5,601.2 577.0,596.6 577.5,591.0 578.0,584.5 578.5,577.2 579.0,569.2 579.5,560.6 580.0,551.5 580.5,541.9 581.0,531.9 581.5,521.6 582.0,511.0 582.5,500.2 583.0,489.2 583.5,478.1 584.0,467.0 584.5,455.7 585.0,444.5 585.5,433.3 586.0,422.1 586.5,411.0 587.0,400.0 587.5,389.0 588.0,378.2 588.5,367.6 589.0,357.0 589.5,346.7 590.0,336.5 590.5,326.5 591.0,316.6 591.5,307.0 592.0,297.6 592.5,288.4 593.0,279.3 593.5,270.5 594.0,261.9 594.5,253.5 595.0,245.3 595.5,237.3 596.0,229.5 596.5,222.0 597.0,214.6 597.5,207.4 598.0,200.5 598.5,193.7 599.0,187.2 599.5,180.8 600.0,174.6 600.5,168.6 601.0,162.8 601.5,157.2 602.0,151.7 602.5,146.4 603.0,141.3 603.5,136.4 604.0,131.6 604.5,127.0 605.0,122.5 605.5,118.2 606.0,114.0 606.5,109.9 607.0,106.0 607.5,102.2 608.0,98.6 608.5,95.1 609.0,91.7 609.5,88.4 610.0,85.3 610.5,82.2 611.0,79.3 611.5,76.4 612.0,73.7 612.5,71.1 613.0,68.1 613.5,66.8 614.0,67.2 614.5,69.0 615.0,72.1 615.5,76.3 616.0,81.7 616.5,87.9 617.0,95.0 617.5,102.8 618.0,111.3 618.5,120.3 619.0,129.8 619.5,139.7 620.0,149.9 620.5,160.4 621.0,171.1 621.5,182.1 622.0,193.1 622.5,204.3 623.0,215.5 623.5,226.7 624.0,237.9 624.5,249.1 625.0,260.3 625.5,271.3 626.0,282.3 626.5,293.1 627.0,303.8 627.5,314.4 628.0,324.8 628.5,335.1 629.0,345.1 629.5,355.0 630.0,364.7 630.5,374.2 631.0,383.5 631.5,392.5 632.0,401.4 632.5,410.1 633.0,418.6 633.5,426.8 634.0,434.9 634.5,442.7 635.0,450.3 635.5,457.7 636.0,465.0 636.5,472.0 637.0,478.8 637.5,485.4 638.0,491.8 638.5,498.1 639.0,504.1 639.5,510.0 640.0,515.6 640.5,521.1 641.0,526.5 641.5,531.6 642.0,536.6 642.5,541.5 643.0,546.1 643.5,550.7 644.0,555.0 644.5,559.2 645.0,563.3 645.5,567.3 646.0,571.1 646.5,574.8 647.0,578.3 647.5,581.7 648.0,585.0 648.5,588.2 649.0,591.3 649.5,594.3 650.0,597.1 650.5,599.9 651.0,602.6 651.5,605.6 652.0,607.3 652.5,607.4 653.0,606.1 653.5,603.3 654.0,599.3 654.5,594.3 655.0,588.3 655.5,581.4 656.0,573.8 656.5,565.5 657.0,556.7 657.5,547.3 658.0,537.5 658.5,527.4 659.0,516.9 659.5,506.3 660.0,495.4 660.5,484.4 661.0,473.2 661.5,462.0 662.0,450.8 662.5,439.6 663.0,428.4 663.5,417.2 664.0,406.1 664.5,395.1 665.0,384.3 665.5,373.5 666.0,362.9 666.5,352.5 667.0,342.2 667.5,332.1 668.0,322.1 668.5,312.4 669.0,302.8 669.5,293.5 670.0,284.4 670.5,275.4 671.0,266.7 671.5,258.2 672.0,249.9 672.5,241.7 673.0,233.9 673.5,226.2 674.0,218.7 674.5,211.4 675.0,204.3 675.5,197.5 676.0,190.8 676.5,184.3 677.0,178.0 677.5,171.9 678.0,166.0 678.5,160.3 679.0,154.8 679.5,149.4 680.0,144.2 680.5,139.1 681.0,134.3 681.5,129.5 682.0,125.0 682.5,120.6 683.0,116.3 683.5,112.2 684.0,108.2 684.5,104.3 685.0,100.6 685.5,97.0 686.0,93.6 686.5,90.2 687.0,87.0 687.5,83.9 688.0,80.9 688.5,78.0 689.0,75.2 689.5,72.5 690.0,69.6 690.5,67.4 691.0,66.8 691.5,67.8 692.0,70.2 692.5,73.8 693.0,78.6 693.5,84.3 694.0,91.0 694.5,98.4 695.0,106.5 695.5,115.2 696.0,124.4 696.5,134.1 697.0,144.1 697.5,154.5 698.0,165.1 698.5,175.9 699.0,186.9 699.5,198.0 700.0,209.2 700.5,220.4 701.0,231.7 701.5,242.9 702.0,254.1 702.5,265.2 703.0,276.2 703.5,287.1 704.0,297.9 704.5,308.5 705.0,319.0 705.5,329.3 706.0,339.5 706.5,349.5 707.0,359.3 707.5,368.9 708.0,378.3 708.5,387.5 709.0,396.5 709.5,405.3 710.0,413.8 710.5,422.2 711.0,430.4 711.5,438.3 712.0,446.1 712.5,453.6 713.0,460.9 713.5,468.1 714.0,475.0 714.5,481.7 715.0,488.3 715.5,494.6 716.0,500.7 716.5,506.7 717.0,512.5 717.5,518.1 718.0,523.5 718.5,528.8 719.0,533.9 719.5,538.8 720.0,543.5 720.5,548.1 721.0,552.6 721.5,556.9 722.0,561.1 722.5,565.1 723.0,569.0 723.5,572.7 724.0,576.3 724.5,579.8 725.0,583.2 725.5,586.5 726.0,589.6 726.5,592.6 727.0,595.6 727.5,598.4 728.0,601.1 728.5,603.8 729.0,606.6 729.5,607.6 730.0,607.0 730.5,605.0 731.0,601.7 731.5,597.2 732.0,591.8 732.5,585.4 733.0,578.2 733.5,570.2 734.0,561.7 734.5,552.6 735.0,543.0 735.5,533.1 736.0,522.8 736.5,512.3 737.0,501.5 737.5,490.5 738.0,479.5 738.5,468.3 739.0,457.1 739.5,445.9 740.0,434.6 740.5,423.4 741.0,412.3 741.5,401.3 742.0,390.3 742.5,379.5 743.0,368.8 743.5,358.3 744.0,347.9 744.5,337.7 745.0,327.7 745.5,317.8 746.0,308.2 746.5,298.7 747.0,289.4 747.5,280.4 748.0,271.5 748.5,262.9 749.0,254.5 749.5,246.3 750.0,238.3 750.5,230.4 751.0,222.9 751.5,215.5 752.0,208.3 752.5,201.3 753.0,194.5 753.5,187.9 754.0,181.5 754.5,175.3 755.0,169.3 755.5,163.5 756.0,157.8 756.5,152.4 757.0,147.1 757.5,141.9 758.0,137.0 758.5,132.2 759.0,127.5 759.5,123.0 760.0,118.7 760.5,114.5 761.0,110.4 761.5,106.5 762.0,102.7 762.5,99.0 763.0,95.5 763.5,92.1 764.0,88.8 764.5,85.6 765.0,82.6 765.5,79.6 766.0,76.8 766.5,74.0 767.0,71.4 767.5,68.4 768.0,66.9 768.5,67.1 769.0,68.7 769.5,71.6 770.0,75.8 770.5,81.0 771.0,87.1 771.5,94.1 772.0,101.9 772.5,110.2 773.0,119.2 773.5,128.6 774.0,138.5 774.5,148.6 775.0,159.1 775.5,169.8 776.0,180.7 776.5,191.8 777.0,202.9 777.5,214.1 778.0,225.4 778.5,236.6 779.0,247.8 779.5,258.9 780.0,270.0 780.5,281.0 781.0,291.8 781.5,302.6 782.0,313.2 782.5,323.6 783.0,333.8 783.5,343.9 784.0,353.8 784.5,363.5 785.0,373.0 785.5,382.4 786.0,391.5 786.5,400.4 787.0,409.1 787.5,417.6 788.0,425.8 788.5,433.9 789.0,441.8 789.5,449.4 790.0,456.9 790.5,464.1 791.0,471.1 791.5,478.0 792.0,484.6 792.5,491.1 793.0,497.3 793.5,503.4 794.0,509.3 794.5,515.0 795.0,520.5 795.5,525.8 796.0,531.0 796.5,536.0 797.0,540.9 797.5,545.6 798.0,550.1 798.5,554.5 799.0,558.7 799.5,562.8 800.0,566.8 800.5,570.6 801.0,574.3 801.5,577.9 802.0,581.3 802.5,584.7 803.0,587.9 803.5,591.0 804.0,593.9 804.5,596.8 805.0,599.6 805.5,602.3 806.0,605.2 806.5,607.2 807.0,607.5 807.5,606.3 808.0,603.7 808.5,599.9 809.0,595.0 809.5,589.1 810.0,582.3 810.5,574.8 811.0,566.5 811.5,557.7 812.0,548.5 812.5,538.7 813.0,528.6 813.5,518.2 814.0,507.6 814.5,496.7 815.0,485.7 815.5,474.6 816.0,463.4 816.5,452.1 817.0,440.9 817.5,429.7 818.0,418.5 818.5,407.4 819.0,396.4 819.5,385.6 820.0,374.8 820.5,364.2 821.0,353.7 821.5,343.4 822.0,333.3 822.5,323.3 823.0,313.5 823.5,304.0 824.0,294.6 824.5,285.4 825.0,276.5 825.5,267.7 826.0,259.2 826.5,250.8 827.0,242.7 827.5,234.8 828.0,227.1 828.5,219.6 829.0,212.3 829.5,205.2 830.0,198.3 830.5,191.6 831.0,185.1 831.5,178.8 832.0,172.7 832.5,166.7 833.0,161.0 833.5,155.4 834.0,150.0 834.5,144.8 835.0,139.7 835.5,134.8 836.0,130.1 836.5,125.5 837.0,121.1 837.5,116.8 838.0,112.7 838.5,108.7 839.0,104.8 839.5,101.1 840.0,97.5 840.5,94.0 841.0,90.6 841.5,87.4 842.0,84.3 842.5,81.3 843.0,78.4 843.5,75.6 844.0,72.9 844.5,70.0 845.0,67.5 845.5,66.8 846.0,67.6 846.5,69.8 847.0,73.3 847.5,77.9 848.0,83.6 848.5,90.1 849.0,97.4 849.5,105.5 850.0,114.1 850.5,123.3 851.0,132.9 851.5,142.9 852.0,153.2 852.5,163.8 853.0,174.6 853.5,185.6 854.0,196.7 854.5,207.9 855.0,219.1 855.5,230.3 856.0,241.5 856.5,252.7 857.0,263.8 857.5,274.9 858.0,285.8 858.5,296.6 859.0,307.2 859.5,317.8 860.0,328.1 860.5,338.3 861.0,348.3 861.5,358.1 862.0,367.7 862.5,377.2 863.0,386.4 863.5,395.4 864.0,404.2 864.5,412.8 865.0,421.2 865.5,429.4 866.0,437.4 866.5,445.2 867.0,452.7 867.5,460.1 868.0,467.2 868.5,474.2 869.0,480.9 869.5,487.5 870.0,493.8 870.5,500.0 871.0,506.0 871.5,511.8 872.0,517.4 872.5,522.9 873.0,528.1 873.5,533.2 874.0,538.2 874.5,543.0 875.0,547.6 875.5,552.1 876.0,556.4 876.5,560.6 877.0,564.6 877.5,568.5 878.0,572.3 878.5,575.9 879.0,579.4 879.5,582.8 880.0,586.1 880.5,589.2 881.0,592.3 881.5,595.2 882.0,598.0 882.5,600.8 883.0,603.4 883.5,606.3 884.0,607.5 884.5,607.2 885.0,605.3 885.5,602.2 886.0,597.8 886.5,592.5 887.0,586.2 887.5,579.1 888.0,571.2 888.5,562.7 889.0,553.7 889.5,544.2 890.0,534.3 890.5,524.1 891.0,513.5 891.5,502.8 892.0,491.9 892.5,480.8 893.0,469.7 893.5,458.4 894.0,447.2 894.5,436.0 895.0,424.8 895.5,413.7 896.0,402.6 896.5,391.6 897.0,380.8 897.5,370.1 898.0,359.5 898.5,349.1 899.0,338.9 899.5,328.9 900.0,319.0 900.5,309.3 901.0,299.8 901.5,290.5 902.0,281.5 902.5,272.6 903.0,263.9 903.5,255.5 904.0,247.2 904.5,239.2 905.0,231.4 905.5,223.8 906.0,216.3 906.5,209.1 907.0,202.1 907.5,195.3 908.0,188.7 908.5,182.3 909.0,176.1 909.5,170.0 910.0,164.2 910.5,158.5 911.0,153.0 911.5,147.7 912.0,142.5 912.5,137.6 913.0,132.7 913.5,128.1 914.0,123.5 914.5,119.2 915.0,115.0 915.5,110.9 916.0,106.9 916.5,103.1 917.0,99.5 917.5,95.9 918.0,92.5 918.5,89.2 919.0,86.0 919.5,82.9 920.0,80.0 920.5,77.1 921.0,74.4 921.5,71.7 922.0,68.7 922.5,67.0 923.0,67.0 923.5,68.4 924.0,71.2 924.5,75.2 925.0,80.3 925.5,86.3 926.0,93.2 926.5,100.9 927.0,109.2 927.5,118.1 928.0,127.5 928.5,137.3 929.0,147.4 929.5,157.9 930.0,168.5 930.5,179.4 931.0,190.5 931.5,201.6 932.0,212.8 932.5,224.0 933.0,235.3 933.5,246.5 934.0,257.6 934.5,268.7 935.0,279.7 935.5,290.5 936.0,301.3 936.5,311.9 937.0,322.3 937.5,332.6 938.0,342.7 938.5,352.6 939.0,362.4 939.5,371.9 940.0,381.2 940.5,390.4 941.0,399.3 941.5,408.0 942.0,416.5 942.5,424.9 943.0,432.9 943.5,440.8 944.0,448.5 944.5,456.0 945.0,463.2 945.5,470.3 946.0,477.2 946.5,483.8 947.0,490.3 947.5,496.6 948.0,502.7 948.5,508.6 949.0,514.3 949.5,519.8 950.0,525.2 950.5,530.4 951.0,535.4 951.5,540.3 952.0,545.0 952.5,549.6 953.0,554.0 953.5,558.2 954.0,562.4 954.5,566.3 955.0,570.2 955.5,573.9 956.0,577.5 956.5,580.9 957.0,584.3 957.5,587.5 958.0,590.6 958.5,593.6 959.0,596.5 959.5,599.3 960.0,601.9 960.5,604.9 961.0,607.1 961.5,607.6 962.0,606.5 962.5,604.1 963.0,600.4 963.5,595.6 964.0,589.8 964.5,583.1 965.0,575.7 965.5,567.6 966.0,558.8 966.5,549.6 967.0,539.9 967.5,529.8 968.0,519.5 968.5,508.8 969.0,498.0 969.5,487.0 970.0,475.9 970.5,464.7 971.0,453.5 971.5,442.3 972.0,431.0 972.5,419.9 973.0,408.8 973.5,397.8 974.0,386.9 974.5,376.1 975.0,365.4 975.5,354.9 976.0,344.6 976.5,334.5 977.0,324.5 977.5,314.7 978.0,305.1 978.5,295.7 979.0,286.5 979.5,277.5 980.0,268.8 980.5,260.2 981.0,251.8 981.5,243.7 982.0,235.7 982.5,228.0 983.0,220.5 983.5,213.1 984.0,206.0 984.5,199.1 985.0,192.4 985.5,185.9 986.0,179.5 986.5,173.4 987.0,167.4 987.5,161.7 988.0,156.1 988.5,150.7 989.0,145.4 989.5,140.3 990.0,135.4 990.5,130.7 991.0,126.1 991.5,121.6 992.0,117.3 992.5,113.2 993.0,109.1 993.5,105.3 994.0,101.5 994.5,97.9 995.0,94.4 995.5,91.0 996.0,87.8 996.5,84.6 997.0,81.6 997.5,78.7 998.0,75.9 998.5,73.2 999.0,70.4 999.5,67.7 1000.0,66.8 1000.5,67.4 1001.0,69.5 1001.5,72.8 1002.0,77.3 1002.5,82.9 1003.0,89.3 1003.5,96.5 1004.0,104.5 1004.5,113.0 1005.0,122.1 1005.5,131.7 1006.0,141.7 1006.5,152.0 1007.0,162.5 1007.5,173.3 1008.0,184.3 1008.5,195.3 1009.0,206.5 1009.5,217.7 1010.0,229.0 1010.5,240.2 1011.0,251.4 1011.5,262.5 1012.0,273.5 1012.5,284.5 1013.0,295.3 1013.5,306.0 1014.0,316.5 1014.5,326.9 1015.0,337.1 1015.5,347.1 1016.0,356.9 1016.5,366.6 1017.0,376.0 1017.5,385.3 1018.0,394.3 1018.5,403.2 1019.0,411.8 1019.5,420.2 1020.0,428.4 1020.5,436.4 1021.0,444.2 1021.5,451.8 1022.0,459.2 1022.5,466.4 1023.0,473.3 1023.5,480.1 1024.0,486.7 1024.5,493.1 1025.0,499.3 1025.5,505.3 1026.0,511.1 1026.5,516.8 1027.0,522.2 1027.5,527.5 1028.0,532.6 1028.5,537.6 1029.0,542.4 1029.5,547.1 1030.0,551.5 1030.5,555.9 1031.0,560.1 1031.5,564.1 1032.0,568.0 1032.5,571.8 1033.0,575.5 1033.5,579.0 1034.0,582.4 1034.5,585.7 1035.0,588.9 1035.5,591.9 1036.0,594.9 1036.5,597.7 1037.0,600.4 1037.5,603.1 1038.0,606.1 1038.5,607.5 1039.0,607.3 1039.5,605.6 1040.0,602.6 1040.5,598.4 1041.0,593.2 1041.5,587.0 1042.0,580.0 1042.5,572.2 1043.0,563.8 1043.5,554.8 1044.0,545.4 1044.5,535.5 1045.0,525.3 1045.5,514.8 1046.0,504.1 1046.5,493.2 1047.0,482.1 1047.5,471.0 1048.0,459.8 1048.5,448.6 1049.0,437.3 1049.5,426.1 1050.0,415.0 1050.5,403.9 1051.0,393.0 1051.5,382.1 1052.0,371.4 1052.5,360.8 1053.0,350.4 1053.5,340.1 1054.0,330.1 1054.5,320.2 1055.0,310.5 1055.5,301.0 1056.0,291.7 1056.5,282.5 1057.0,273.7 1057.5,265.0 1058.0,256.5 1058.5,248.2 1059.0,240.2 1059.5,232.3 1060.0,224.7 1060.5,217.2 1061.0,210.0 1061.5,203.0 1062.0,196.1 1062.5,189.5 1063.0,183.1 1063.5,176.8 1064.0,170.8 1064.5,164.9 1065.0,159.2 1065.5,153.7 1066.0,148.3 1066.5,143.1 1067.0,138.1 1067.5,133.3 1068.0,128.6 1068.5,124.1 1069.0,119.7 1069.5,115.5 1070.0,111.4 1070.5,107.4 1071.0,103.6 1071.5,99.9 1072.0,96.3 1072.5,92.9 1073.0,89.6 1073.5,86.4 1074.0,83.3 1074.5,80.3 1075.0,77.5 1075.5,74.7 1076.0,72.0 1076.5,69.0 1077.0,67.1 1077.5,66.9 1078.0,68.2 1078.5,70.8 1079.0,74.7 1079.5,79.6 1080.0,85.6 1080.5,92.4 1081.0,99.9 1081.5,108.2 1082.0,117.0 1082.5,126.3 1083.0,136.1 1083.5,146.2 1084.0,156.6 1084.5,167.3 1085.0,178.1 1085.5,189.1 1086.0,200.3 1086.5,211.4 1087.0,222.7 1087.5,233.9 1088.0,245.1 1088.5,256.3 1089.0,267.4 1089.5,278.4 1090.0,289.2 1090.5,300.0 1091.0,310.6 1091.5,321.1 1092.0,331.4 1092.5,341.5 1093.0,351.5 1093.5,361.2 1094.0,370.8 1094.5,380.1 1095.0,389.3 1095.5,398.3 1096.0,407.0 1096.5,415.5 1097.0,423.9 1097.5,432.0 1098.0,439.9 1098.5,447.6 1099.0,455.1 1099.5,462.4 1100.0,469.5 1100.5,476.4 1101.0,483.0 1101.5,489.5 1102.0,495.8 1102.5,501.9 1103.0,507.9 1103.5,513.6 1104.0,519.2 1104.5,524.6 1105.0,529.8 1105.5,534.8 1106.0,539.7 1106.5,544.5 1107.0,549.0 1107.5,553.5 1108.0,557.7 1108.5,561.9 1109.0,565.9 1109.5,569.7 1110.0,573.5 1110.5,577.0 1111.0,580.5 1111.5,583.9 1112.0,587.1 1112.5,590.2 1113.0,593.2 1113.5,596.1 1114.0,598.9 1114.5,601.6 1115.0,604.5 1115.5,606.9 1116.0,607.6 1116.5,606.7 1117.0,604.4 1117.5,600.9 1118.0,596.2 1118.5,590.6 1119.0,584.0 1119.5,576.6 1120.0,568.6 1120.5,559.9 1121.0,550.7 1121.5,541.1 1122.0,531.1 1122.5,520.7 1123.0,510.1 1123.5,499.3 1124.0,488.3 1124.5,477.2 1125.0,466.1 1125.5,454.8 1126.0,443.6 1126.5,432.4 1127.0,421.2 1127.5,410.1 1128.0,399.1 1128.5,388.2 1129.0,377.4 1129.5,366.7 1130.0,356.2 1130.5,345.9 1131.0,335.7 1131.5,325.7 1132.0,315.9 1132.5,306.3 1133.0,296.8 1133.5,287.6 1134.0,278.6 1134.5,269.8 1135.0,261.2 1135.5,252.8 1136.0,244.6 1136.5,236.7 1137.0,228.9 1137.5,221.4 1138.0,214.0 1138.5,206.9 1139.0,199.9 1139.5,193.2 1140.0,186.6 1140.5,180.3 1141.0,174.1 1141.5,168.1 1142.0,162.3 1142.5,156.7 1143.0,151.3 1143.5,146.0 1144.0,140.9 1144.5,136.0 1145.0,131.2 1145.5,126.6 1146.0,122.1 1146.5,117.8 1147.0,113.6 1147.5,109.6 1148.0,105.7 1148.5,102.0 1149.0,98.3 1149.5,94.8 1150.0,91.4 1150.5,88.2 1151.0,85.0 1151.5,82.0 1152.0,79.0 1152.5,76.2 1153.0,73.5 1153.5,70.9 1154.0,68.0 1154.5,66.8 1155.0,67.3 1155.5,69.2 1156.0,72.4 1156.5,76.7 1157.0,82.1 1157.5,88.5 1158.0,95.6 1158.5,103.5 1159.0,112.0 1159.5,121.0 1160.0,130.5 1160.5,140.5 1161.0,150.7 1161.5,161.3 1162.0,172.0 1162.5,182.9 1163.0,194.0 1163.5,205.2 1164.0,216.4 1164.5,227.6 1165.0,238.8 1165.5,250.0 1166.0,261.2 1166.5,272.2 1167.0,283.2 1167.5,294.0 1168.0,304.7 1168.5,315.2 1169.0,325.6 1169.5,335.9 1170.0,345.9 1170.5,355.8 1171.0,365.4 1171.5,374.9 1172.0,384.2 1172.5,393.3 1173.0,402.1 1173.5,410.8 1174.0,419.2 1174.5,427.5 1175.0,435.5 1175.5,443.3 1176.0,450.9 1176.5,458.3 1177.0,465.5 1177.5,472.5 1178.0,479.3 1178.5,485.9 1179.0,492.3 1179.5,498.5 1180.0,504.6 1180.5,510.4 1181.0,516.1 1181.5,521.6 1182.0,526.9 1182.5,532.0 1183.0,537.0 1183.5,541.8 1184.0,546.5 1184.5,551.0 1185.0,555.4 1185.5,559.6 1186.0,563.7 1186.5,567.6 1187.0,571.4 1187.5,575.0 1188.0,578.6 1188.5,582.0 1189.0,585.3 1189.5,588.5 1190.0,591.6 1190.5,594.5 1191.0,597.4 1191.5,600.1 1192.0,602.8 1192.5,605.8 1193.0,607.4 1193.5,607.4 1194.0,605.9 1194.5,603.0 1195.0,599.0 1195.5,593.8 1196.0,587.8 1196.5,580.8 1197.0,573.2 1197.5,564.8 1198.0,555.9 1198.5,546.5 1199.0,536.7 1199.5,526.6 1200.0,516.1 1200.5,505.4 1201.0,494.5 1201.5,483.5 1202.0,472.3 1202.5,461.1 1203.0,449.9 1203.5,438.7 1204.0,427.5 1204.5,416.3 1205.0,405.2 1205.5,394.3 1206.0,383.4 1206.5,372.7 1207.0,362.1 1207.5,351.6 1208.0,341.4 1208.5,331.3 1209.0,321.3 1209.5,311.6 1210.0,302.1 1210.5,292.8 1211.0,283.6 1211.5,274.7 1212.0,266.0 1212.5,257.5 1213.0,249.2 1213.5,241.1 1214.0,233.2 1214.5,225.6 1215.0,218.1 1215.5,210.8 1216.0,203.8 1216.5,196.9 1217.0,190.3 1217.5,183.8 1218.0,177.5 1218.5,171.5 1219.0,165.6 1219.5,159.9 1220.0,154.3 1220.5,149.0 1221.0,143.8 1221.5,138.7 1222.0,133.9 1222.5,129.2 1223.0,124.6 1223.5,120.2 1224.0,116.0 1224.5,111.9 1225.0,107.9 1225.5,104.0 1226.0,100.3 1226.5,96.8 1227.0,93.3 1227.5,90.0 1228.0,86.8 1228.5,83.7 1229.0,80.7 1229.5,77.8 1230.0,75.0 1230.5,72.3 1231.0,69.4 1231.5,67.2 1232.0,66.8 1232.5,67.9 1233.0,70.4 1233.5,74.2 1234.0,79.0 1234.5,84.8 1235.0,91.5 1235.5,99.0 1236.0,107.2 1236.5,115.9 1237.0,125.2 1237.5,134.9 1238.0,144.9 1238.5,155.3 1239.0,166.0 1239.5,176.8 1240.0,187.8 1240.5,198.9 1241.0,210.1 1241.5,221.3 1242.0,232.6 1242.5,243.8 1243.0,254.9 1243.5,266.0 1244.0,277.1 1244.5,287.9 1245.0,298.7 1245.5,309.4 1246.0,319.8 1246.5,330.2 1247.0,340.3 1247.5,350.3 1248.0,360.1 1248.5,369.6 1249.0,379.0 1249.5,388.2 1250.0,397.2 1250.5,406.0 1251.0,414.5 1251.5,422.9 1252.0,431.0 1252.5,439.0 1253.0,446.7 1253.5,454.2 1254.0,461.5 1254.5,468.6 1255.0,475.5 1255.5,482.3 1256.0,488.8 1256.5,495.1 1257.0,501.2 1257.5,507.2 1258.0,512.9 1258.5,518.5 1259.0,523.9 1259.5,529.2 1260.0,534.3 1260.5,539.2 1261.0,543.9 1261.5,548.5 1262.0,552.9 1262.5,557.2 1263.0,561.4 1263.5,565.4 1264.0,569.3 1264.5,573.0 1265.0,576.6 1265.5,580.1 1266.0,583.5 1266.5,586.7 1267.0,589.9 1267.5,592.9 1268.0,595.8 1268.5,598.6 1269.0,601.3 1269.5,604.1 1270.0,606.7 1270.5,607.6 1271.0,606.9 1271.5,604.8 1272.0,601.4 1272.5,596.8 1273.0,591.3 1273.5,584.8 1274.0,577.5 1274.5,569.6 1275.0,561.0 1275.5,551.9 1276.0,542.3 1276.5,532.3 1277.0,522.0 1277.5,511.4 1278.0,500.6 1278.5,489.7 1279.0,478.6 1279.5,467.4 1280.0,456.2 1280.5,445.0 1281.0,433.7 1281.5,422.6 1282.0,411.4 1282.5,400.4 1283.0,389.5 1283.5,378.7 1284.0,368.0 1284.5,357.5 1285.0,347.1 1285.5,336.9 1286.0,326.9 1286.5,317.0 1287.0,307.4 1287.5,298.0 1288.0,288.7 1288.5,279.7 1289.0,270.8 1289.5,262.2 1290.0,253.8 1290.5,245.6 1291.0,237.6 1291.5,229.8 1292.0,222.3 1292.5,214.9 1293.0,207.7 1293.5,200.8 1294.0,194.0 1294.5,187.4 1295.0,181.0 1295.5,174.9 1296.0,168.9 1296.5,163.0 1297.0,157.4 1297.5,151.9 1298.0,146.6 1298.5,141.5 1299.0,136.6 1299.5,131.8 1300.0,127.1 1300.5,122.7 1301.0,118.3 1301.5,114.1 1302.0,110.1 1302.5,106.2 1303.0,102.4 1303.5,98.8 1304.0,95.2 1304.5,91.8 1305.0,88.6 1305.5,85.4 1306.0,82.3 1306.5,79.4 1307.0,76.6 1307.5,73.8 1308.0,71.2 1308.5,68.2 1309.0,66.9 1309.5,67.1 1310.0,68.9 1310.5,71.9 1311.0,76.2 1311.5,81.4 1312.0,87.7 1312.5,94.7 1313.0,102.5 1313.5,110.9 1314.0,119.9 1314.5,129.4 1315.0,139.3 1315.5,149.5 1316.0,160.0 1316.5,170.7 1317.0,181.6 1317.5,192.7 1318.0,203.8 1318.5,215.0 1319.0,226.3 1319.5,237.5 1320.0,248.7 1320.5,259.8 1321.0,270.9 1321.5,281.9 1322.0,292.7 1322.5,303.4 1323.0,314.0 1323.5,324.4 1324.0,334.6 1324.5,344.7 1325.0,354.6 1325.5,364.3 1326.0,373.8 1326.5,383.1 1327.0,392.2 1327.5,401.1 1328.0,409.8 1328.5,418.2 1329.0,426.5 1329.5,434.5 1330.0,442.4 1330.5,450.0 1331.0,457.4 1331.5,464.7 1332.0,471.7 1332.5,478.5 1333.0,485.1 1333.5,491.6 1334.0,497.8 1334.5,503.9 1335.0,509.7 1335.5,515.4 1336.0,520.9 1336.5,526.3 1337.0,531.4 1337.5,536.4 1338.0,541.3 1338.5,546.0 1339.0,550.5 1339.5,554.9 1340.0,559.1 1340.5,563.2 1341.0,567.1 1341.5,570.9 1342.0,574.6 1342.5,578.2 1343.0,581.6 1343.5,584.9 1344.0,588.1 1344.5,591.2 1345.0,594.2 1345.5,597.0 1346.0,599.8 1346.5,602.5 1347.0,605.5 1347.5,607.3 1348.0,607.5 1348.5,606.1 1349.0,603.4 1349.5,599.5 1350.0,594.5 1350.5,588.5 1351.0,581.7 1351.5,574.1 1352.0,565.9 1352.5,557.0 1353.0,547.7 1353.5,537.9 1354.0,527.8 1354.5,517.4 1355.0,506.7 1355.5,495.8 1356.0,484.8 1356.5,473.7 1357.0,462.5 1357.5,451.3 1358.0,440.0 1358.5,428.8 1359.0,417.7 1359.5,406.6 1360.0,395.6 1360.5,384.7 1361.0,373.9 1361.5,363.3 1362.0,352.9 1362.5,342.6 1363.0,332.5 1363.5,322.5 1364.0,312.8 1364.5,303.2 1365.0,293.9 1365.5,284.7 1366.0,275.8 1366.5,267.0 1367.0,258.5 1367.5,250.2 1368.0,242.1 1368.5,234.2 1369.0,226.5 1369.5,219.0 1370.0,211.7 1370.5,204.6 1371.0,197.7 1371.5,191.1 1372.0,184.6 1372.5,178.3 1373.0,172.2 1373.5,166.3 1374.0,160.5 1374.5,155.0 1375.0,149.6 1375.5,144.4 1376.0,139.3 1376.5,134.4 1377.0,129.7 1377.5,125.2 1378.0,120.7 1378.5,116.5 1379.0,112.3 1379.5,108.3 1380.0,104.5 1380.5,100.8 1381.0,97.2 1381.5,93.7 1382.0,90.4 1382.5,87.1 1383.0,84.0 1383.5,81.0 1384.0,78.1 1384.5,75.3 1385.0,72.6 1385.5,69.8 1386.0,67.4 1386.5,66.8 1387.0,67.7 1387.5,70.1 1388.0,73.6 1388.5,78.4 1389.0,84.1 1389.5,90.7 1390.0,98.1 1390.5,106.1 1391.0,114.8 1391.5,124.0 1392.0,133.7 1392.5,143.7 1393.0,154.1 1393.5,164.7 1394.0,175.5 1394.5,186.5 1395.0,197.6 1395.5,208.8 1396.0,220.0 1396.5,231.2 1397.0,242.4 1397.5,253.6 1398.0,264.7 1398.5,275.7 1399.0,286.6 1399.5,297.4 1400.0,308.1 1400.5,318.6 1401.0,328.9 1401.5,339.1 1402.0,349.1 1402.5,358.9 1403.0,368.5 1403.5,377.9 1404.0,387.1 1404.5,396.1 1405.0,404.9 1405.5,413.5 1406.0,421.9 1406.5,430.1 1407.0,438.0 1407.5,445.8 1408.0,453.3 1408.5,460.7 1409.0,467.8 1409.5,474.7 1410.0,481.5 1410.5,488.0 1411.0,494.3"/>
<polyline fill="none" stroke="#984ea3" stroke-width="2.5" stroke-linejoin="round" shape-rendering="crispEdges" points="70.0,636.0 70.5,636.0 71.0,636.0 71.5,636.0 72.0,636.0 72.5,636.0 73.0,636.0 73.5,636.0 74.0,636.0 74.5,636.0 75.0,636.0 75.5,636.0 76.0,636.0 76.5,636.0 77.0,636.0 77.5,636.0 78.0,636.0 78.5,636.0 79.0,636.0 79.5,636.0 80.0,636.0 80.5,636.0 81.0,636.0 81.5,636.0 82.0,636.0 82.5,636.0 83.0,636.0 83.5,636.0 84.0,636.0 84.5,636.0 85.0,636.0 85.5,636.0 86.0,636.0 86.5,636.0 87.0,636.0 87.5,636.0 88.0,636.0 88.5,636.6 89.0,638.5 89.5,640.8 90.0,643.6 90.5,647.2 91.0,651.5 91.5,656.4 92.0,661.6 92.5,666.9 93.0,672.1 93.5,676.9 94.0,681.3 94.5,685.6 95.0,689.9 95.5,694.2 96.0,698.4 96.5,702.5 97.0,706.5 97.5,710.5 98.0,714.3 98.5,717.9 99.0,721.3 99.5,724.7 100.0,728.2 100.5,731.6 101.0,735.1 101.5,738.5 102.0,741.8 102.5,745.0 103.0,748.1 103.5,751.1 104.0,753.8 104.5,756.4 105.0,758.7 105.5,760.8 106.0,762.6 106.5,764.0 107.0,765.3 107.5,766.5 108.0,767.7 108.5,768.7 109.0,769.6 109.5,770.4 110.0,771.0 110.5,771.4 111.0,771.2 111.5,769.5 112.0,766.7 112.5,763.2 113.0,755.2 113.5,743.3 114.0,730.4 114.5,719.4 115.0,709.7 115.5,700.4 116.0,691.3 116.5,682.3 117.0,673.2 117.5,664.1 118.0,655.1 118.5,646.3 119.0,637.7 119.5,629.4 120.0,621.6 120.5,614.0 121.0,606.3 121.5,598.3 122.0,589.8 122.5,580.7 123.0,571.3 123.5,561.8 124.0,552.4 124.5,543.3 125.0,534.0 125.5,524.9 126.0,516.1 126.5,507.9 127.0,500.0 127.5,492.1 128.0,484.4 128.5,477.3 129.0,471.1 129.5,466.1 130.0,462.1 130.5,458.3 131.0,454.7 131.5,451.4 132.0,448.3 132.5,445.4 133.0,442.9 133.5,440.6 134.0,438.7 134.5,437.0 135.0,435.8 135.5,434.8 136.0,433.9 136.5,433.1 137.0,432.3 137.5,431.6 138.0,431.0 138.5,430.5 139.0,430.1 139.5,429.9 140.0,429.8 140.5,429.9 141.0,430.2 141.5,430.7 142.0,431.3 142.5,432.1 143.0,432.9 143.5,433.9 144.0,434.9 144.5,436.0 145.0,437.1 145.5,438.2 146.0,439.5 146.5,441.1 147.0,442.9 147.5,444.8 148.0,446.9 148.5,449.1 149.0,451.5 149.5,453.9 150.0,457.2 150.5,463.2 151.0,471.2 151.5,481.2 152.0,492.6 152.5,504.6 153.0,517.1 153.5,531.1 154.0,544.7 154.5,556.4 155.0,566.4 155.5,575.9 156.0,585.8 156.5,597.2 157.0,610.6 157.5,624.6 158.0,637.4 158.5,648.7 159.0,659.3 159.5,669.6 160.0,679.9 160.5,690.3 161.0,700.7 161.5,710.8 162.0,720.6 162.5,730.1 163.0,739.7 163.5,748.8 164.0,757.3 164.5,764.9 165.0,771.8 165.5,778.4 166.0,784.6 166.5,790.4 167.0,795.9 167.5,800.9 168.0,805.5 168.5,809.8 169.0,814.0 169.5,818.2 170.0,822.3 170.5,826.2 171.0,829.8 171.5,833.2 172.0,836.3 172.5,839.0 173.0,841.3 173.5,843.1 174.0,844.4 174.5,845.6 175.0,846.7 175.5,847.7 176.0,848.6 176.5,849.5 177.0,850.2 177.5,850.8 178.0,851.2 178.5,851.5 179.0,851.5 179.5,851.4 180.0,850.9 180.5,850.3 181.0,849.5 181.5,848.5 182.0,847.4 182.5,846.2 183.0,845.0 183.5,843.8 184.0,842.6 184.5,841.3 185.0,839.8 185.5,838.1 186.0,836.4 186.5,834.5 187.0,832.4 187.5,830.3 188.0,828.1 188.5,825.8 189.0,821.2 189.5,815.1 190.0,807.9 190.5,799.3 191.0,788.6 191.5,776.8 192.0,763.5 192.5,750.7 193.0,738.1 193.5,725.7 194.0,713.6 194.5,701.9 195.0,690.2 195.5,678.2 196.0,665.6 196.5,652.7 197.0,640.2 197.5,628.7 198.0,618.0 198.5,607.5 199.0,597.1 199.5,586.3 200.0,575.1 200.5,564.1 201.0,553.9 201.5,545.0 202.0,536.7 202.5,528.9 203.0,521.6 203.5,514.5 204.0,507.7 204.5,501.1 205.0,495.0 205.5,489.6 206.0,484.5 206.5,479.7 207.0,475.0 207.5,470.5 208.0,466.0 208.5,461.5 209.0,457.1 209.5,452.8 210.0,448.6 210.5,444.6 211.0,441.2 211.5,438.4 212.0,435.7 212.5,433.1 213.0,431.2 213.5,429.7 214.0,428.5 214.5,427.6 215.0,426.9 215.5,426.3 216.0,425.8 216.5,425.5 217.0,425.3 217.5,425.2 218.0,425.1 218.5,425.2 219.0,425.3 219.5,425.6 220.0,426.1 220.5,426.9 221.0,427.7 221.5,428.8 222.0,429.9 222.5,431.2 223.0,432.5 223.5,434.0 224.0,435.6 224.5,437.3 225.0,439.3 225.5,441.4 226.0,443.5 226.5,445.6 227.0,447.7 227.5,450.8 228.0,455.8 228.5,462.2 229.0,469.8 229.5,480.1 230.0,491.8 230.5,504.7 231.0,517.7 231.5,530.3 232.0,542.8 232.5,555.0 233.0,566.8 233.5,578.5 234.0,590.4 234.5,602.8 235.0,615.7 235.5,628.3 236.0,640.1 236.5,651.0 237.0,661.5 237.5,671.9 238.0,682.6 238.5,693.7 239.0,704.8 239.5,715.3 240.0,724.5 240.5,733.0 241.0,740.9 241.5,748.3 242.0,755.5 242.5,762.4 243.0,769.1 243.5,775.3 244.0,780.9 244.5,786.0 245.0,790.9 245.5,795.6 246.0,800.2 246.5,804.7 247.0,809.2 247.5,813.7 248.0,818.0 248.5,822.2 249.0,826.2 249.5,829.9 250.0,832.8 250.5,835.5 251.0,838.2 251.5,840.3 252.0,841.8 252.5,843.1 253.0,844.1 253.5,844.9 254.0,845.5 254.5,846.0 255.0,846.4 255.5,846.6 256.0,846.7 256.5,846.8 257.0,846.8 257.5,846.7 258.0,846.5 258.5,846.1 259.0,845.3 259.5,844.5 260.0,843.5 260.5,842.3 261.0,841.1 261.5,839.8 262.0,838.4 262.5,836.8 263.0,835.2 263.5,833.2 264.0,831.1 264.5,829.0 265.0,826.9 265.5,824.9 266.0,822.3 266.5,817.7 267.0,811.7 267.5,804.6 268.0,795.0 268.5,783.5 269.0,771.0 269.5,757.8 270.0,745.1 270.5,732.6 271.0,720.4 271.5,708.4 272.0,696.7 272.5,684.9 273.0,672.7 273.5,659.9 274.0,647.1 274.5,635.1 275.0,623.9 275.5,613.4 276.0,603.0 276.5,592.4 277.0,581.4 277.5,570.2 278.0,559.5 278.5,549.9 279.0,541.3 279.5,533.2 280.0,525.7 280.5,518.4 281.0,511.5 281.5,504.7 282.0,498.3 282.5,492.6 283.0,487.3 283.5,482.4 284.0,477.6 284.5,473.0 285.0,468.5 285.5,464.0 286.0,459.5 286.5,455.2 287.0,450.9 287.5,446.9 288.0,443.0 288.5,439.9 289.0,437.2 289.5,434.5 290.0,432.2 290.5,430.5 291.0,429.2 291.5,428.1 292.0,427.3 292.5,426.6 293.0,426.1 293.5,425.7 294.0,425.4 294.5,425.3 295.0,425.1 295.5,425.1 296.0,425.2 296.5,425.4 297.0,425.7 297.5,426.4 298.0,427.2 298.5,428.2 299.0,429.3 299.5,430.5 300.0,431.8 300.5,433.2 301.0,434.7 301.5,436.3 302.0,438.1 302.5,440.2 303.0,442.4 303.5,444.4 304.0,446.5 304.5,448.7 305.0,452.8 305.5,458.5 306.0,465.2 306.5,474.0 307.0,485.1 307.5,497.2 308.0,510.5 308.5,523.3 309.0,535.8 309.5,548.2 310.0,560.2 310.5,571.9 311.0,583.7 311.5,595.8 312.0,608.5 312.5,621.3 313.0,633.6 313.5,645.0 314.0,655.7 314.5,666.1 315.0,676.5 315.5,687.4 316.0,698.6 316.5,709.5 317.0,719.5 317.5,728.3 318.0,736.5 318.5,744.2 319.0,751.5 319.5,758.5 320.0,765.4 320.5,771.9 321.0,777.8 321.5,783.2 322.0,788.2 322.5,793.0 323.0,797.6 323.5,802.2 324.0,806.7 324.5,811.2 325.0,815.6 325.5,819.9 326.0,824.0 326.5,827.9 327.0,831.2 327.5,834.0 328.0,836.7 328.5,839.2 329.0,841.0 329.5,842.4 330.0,843.6 330.5,844.5 331.0,845.2 331.5,845.7 332.0,846.2 332.5,846.4 333.0,846.6 333.5,846.8 334.0,846.8 334.5,846.8 335.0,846.6 335.5,846.3 336.0,845.8 336.5,845.0 337.0,844.1 337.5,843.0 338.0,841.8 338.5,840.5 339.0,839.2 339.5,837.7 340.0,836.1 340.5,834.4 341.0,832.3 341.5,830.2 342.0,828.1 342.5,826.0 343.0,824.0 343.5,820.5 344.0,815.2 344.5,808.7 345.0,800.7 345.5,790.1 346.0,778.2 346.5,765.1 347.0,752.2 347.5,739.6 348.0,727.2 348.5,715.1 349.0,703.3 349.5,691.6 350.0,679.6 350.5,667.1 351.0,654.2 351.5,641.7 352.0,630.1 352.5,619.2 353.0,608.8 353.5,598.4 354.0,587.6 354.5,576.5 355.0,565.4 355.5,555.1 356.0,546.0 356.5,537.7 357.0,529.9 357.5,522.4 358.0,515.4 358.5,508.5 359.0,501.8 359.5,495.7 360.0,490.2 360.5,485.1 361.0,480.3 361.5,475.6 362.0,471.0 362.5,466.5 363.0,462.0 363.5,457.6 364.0,453.3 364.5,449.1 365.0,445.1 365.5,441.6 366.0,438.7 366.5,436.0 367.0,433.4 367.5,431.4 368.0,429.9 368.5,428.6 369.0,427.7 369.5,427.0 370.0,426.4 370.5,425.9 371.0,425.6 371.5,425.4 372.0,425.2 372.5,425.1 373.0,425.2 373.5,425.3 374.0,425.5 374.5,426.0 375.0,426.8 375.5,427.6 376.0,428.6 376.5,429.8 377.0,431.1 377.5,432.4 378.0,433.8 378.5,435.4 379.0,437.1 379.5,439.0 380.0,441.2 380.5,443.3 381.0,445.3 381.5,447.4 382.0,450.3 382.5,455.1 383.0,461.3 383.5,468.7 384.0,478.7 384.5,490.4 385.0,503.1 385.5,516.2 386.0,528.8 386.5,541.3 387.0,553.5 387.5,565.4 388.0,577.1 388.5,588.9 389.0,601.3 389.5,614.1 390.0,626.8 390.5,638.7 391.0,649.7 391.5,660.3 392.0,670.7 392.5,681.2 393.0,692.3 393.5,703.5 394.0,714.1 394.5,723.5 395.0,732.0 395.5,740.0 396.0,747.5 396.5,754.6 397.0,761.6 397.5,768.3 398.0,774.6 398.5,780.2 399.0,785.4 399.5,790.4 400.0,795.1 400.5,799.7 401.0,804.2 401.5,808.7 402.0,813.2 402.5,817.5 403.0,821.7 403.5,825.7 404.0,829.5 404.5,832.5 405.0,835.2 405.5,837.9 406.0,840.1 406.5,841.7 407.0,843.0 407.5,844.0 408.0,844.8 408.5,845.4 409.0,846.0 409.5,846.3 410.0,846.5 410.5,846.7 411.0,846.8 411.5,846.8 412.0,846.7 412.5,846.5 413.0,846.1 413.5,845.4 414.0,844.6 414.5,843.6 415.0,842.5 415.5,841.3 416.0,840.0 416.5,838.6 417.0,837.0 417.5,835.4 418.0,833.5 418.5,831.4 419.0,829.3 419.5,827.2 420.0,825.1 420.5,822.7 421.0,818.4 421.5,812.5 422.0,805.5 422.5,796.3 423.0,784.9 423.5,772.7 424.0,759.4 424.5,746.6 425.0,734.1 425.5,721.8 426.0,709.8 426.5,698.1 427.0,686.4 427.5,674.2 428.0,661.4 428.5,648.6 429.0,636.4 429.5,625.2 430.0,614.6 430.5,604.2 431.0,593.7 431.5,582.8 432.0,571.5 432.5,560.7 433.0,551.0 433.5,542.3 434.0,534.2 434.5,526.6 435.0,519.3 435.5,512.3 436.0,505.5 436.5,499.0 437.0,493.3 437.5,487.9 438.0,483.0 438.5,478.2 439.0,473.6 439.5,469.0 440.0,464.5 440.5,460.0 441.0,455.7 441.5,451.4 442.0,447.3 442.5,443.4 443.0,440.3 443.5,437.5 444.0,434.8 444.5,432.4 445.0,430.7 445.5,429.3 446.0,428.2 446.5,427.4 447.0,426.7 447.5,426.1 448.0,425.7 448.5,425.5 449.0,425.3 449.5,425.2 450.0,425.1 450.5,425.2 451.0,425.4 451.5,425.7 452.0,426.3 452.5,427.1 453.0,428.0 453.5,429.1 454.0,430.3 454.5,431.6 455.0,433.0 455.5,434.5 456.0,436.1 456.5,437.9 457.0,440.0 457.5,442.1 458.0,444.2 458.5,446.3 459.0,448.4 459.5,452.2 460.0,457.7 460.5,464.4 461.0,472.8 461.5,483.7 462.0,495.7 462.5,509.0 463.0,521.8 463.5,534.3 464.0,546.7 464.5,558.8 465.0,570.5 465.5,582.3 466.0,594.3 466.5,606.9 467.0,619.8 467.5,632.2 468.0,643.6 468.5,654.4 469.0,664.8 469.5,675.3 470.0,686.1 470.5,697.3 471.0,708.3 471.5,718.4 472.0,727.3 472.5,735.6 473.0,743.3 473.5,750.7 474.0,757.7 474.5,764.6 475.0,771.2 475.5,777.1 476.0,782.6 476.5,787.6 477.0,792.5 477.5,797.1 478.0,801.6 478.5,806.2 479.0,810.7 479.5,815.1 480.0,819.3 480.5,823.5 481.0,827.5 481.5,830.9 482.0,833.7 482.5,836.4 483.0,839.0 483.5,840.8 484.0,842.3 484.5,843.5 485.0,844.4 485.5,845.1 486.0,845.7 486.5,846.1 487.0,846.4 487.5,846.6 488.0,846.8 488.5,846.8 489.0,846.8 489.5,846.6 490.0,846.4 490.5,845.9 491.0,845.1 491.5,844.2 492.0,843.1 492.5,842.0 493.0,840.7 493.5,839.4 494.0,837.9 494.5,836.3 495.0,834.6 495.5,832.6 496.0,830.4 496.5,828.3 497.0,826.3 497.5,824.2 498.0,821.0 498.5,815.9 499.0,809.5 499.5,801.8 500.0,791.4 500.5,779.7 501.0,766.7 501.5,753.8 502.0,741.1 502.5,728.7 503.0,716.5 503.5,704.7 504.0,693.0 504.5,681.1 505.0,668.6 505.5,655.8 506.0,643.1 506.5,631.4 507.0,620.5 507.5,610.0 508.0,599.6 508.5,589.0 509.0,577.8 509.5,566.7 510.0,556.3 510.5,547.1 511.0,538.7 511.5,530.8 512.0,523.3 512.5,516.2 513.0,509.3 513.5,502.6 514.0,496.4 514.5,490.9 515.0,485.7 515.5,480.8 516.0,476.1 516.5,471.6 517.0,467.1 517.5,462.5 518.0,458.1 518.5,453.8 519.0,449.6 519.5,445.6 520.0,442.0 520.5,439.0 521.0,436.3 521.5,433.7 522.0,431.6 522.5,430.1 523.0,428.8 523.5,427.8 524.0,427.0 524.5,426.4 525.0,425.9 525.5,425.6 526.0,425.4 526.5,425.2 527.0,425.1 527.5,425.1 528.0,425.3 528.5,425.5 529.0,425.9 529.5,426.7 530.0,427.5 530.5,428.5 531.0,429.7 531.5,430.9 532.0,432.2 532.5,433.6 533.0,435.2 533.5,436.9 534.0,438.8 534.5,440.9 535.0,443.0 535.5,445.1 536.0,447.2 536.5,449.8 537.0,454.4 537.5,460.5 538.0,467.7 538.5,477.4 539.0,488.9 539.5,501.5 540.0,514.6 540.5,527.3 541.0,539.8 541.5,552.1 542.0,564.0 542.5,575.7 543.0,587.5 543.5,599.8 544.0,612.6 544.5,625.3 545.0,637.4 545.5,648.4 546.0,659.0 546.5,669.4 547.0,679.9 547.5,691.0 548.0,702.2 548.5,712.9 549.0,722.4 549.5,731.0 550.0,739.0 550.5,746.6 551.0,753.8 551.5,760.7 552.0,767.5 552.5,773.9 553.0,779.6 553.5,784.8 554.0,789.8 554.5,794.5 555.0,799.1 555.5,803.6 556.0,808.2 556.5,812.6 557.0,817.0 557.5,821.2 558.0,825.3 558.5,829.1 559.0,832.2 559.5,834.9 560.0,837.6 560.5,839.9 561.0,841.5 561.5,842.8 562.0,843.9 562.5,844.7 563.0,845.4 563.5,845.9 564.0,846.3 564.5,846.5 565.0,846.7 565.5,846.8 566.0,846.8 566.5,846.7 567.0,846.5 567.5,846.2 568.0,845.5 568.5,844.7 569.0,843.7 569.5,842.6 570.0,841.4 570.5,840.1 571.0,838.7 571.5,837.2 572.0,835.6 572.5,833.7 573.0,831.6 573.5,829.5 574.0,827.4 574.5,825.4 575.0,823.1 575.5,819.0 576.0,813.2 576.5,806.4 577.0,797.5 577.5,786.3 578.0,774.3 578.5,760.9 579.0,748.2 579.5,735.6 580.0,723.3 580.5,711.3 581.0,699.5 581.5,687.8 582.0,675.7 582.5,663.0 583.0,650.1 583.5,637.8 584.0,626.5 584.5,615.9 585.0,605.5 585.5,595.0 586.0,584.1 586.5,572.9 587.0,562.0 587.5,552.1 588.0,543.3 588.5,535.1 589.0,527.4 589.5,520.1 590.0,513.1 590.5,506.3 591.0,499.8 591.5,493.9 592.0,488.6 592.5,483.5 593.0,478.7 593.5,474.1 594.0,469.6 594.5,465.1 595.0,460.6 595.5,456.2 596.0,451.9 596.5,447.8 597.0,443.9 597.5,440.6 598.0,437.8 598.5,435.1 599.0,432.6 599.5,430.9 600.0,429.5 600.5,428.3 601.0,427.4 601.5,426.8 602.0,426.2 602.5,425.8 603.0,425.5 603.5,425.3 604.0,425.2 604.5,425.1 605.0,425.2 605.5,425.4 606.0,425.6 606.5,426.2 607.0,427.0 607.5,427.9 608.0,429.0 608.5,430.2 609.0,431.5 609.5,432.8 610.0,434.3 610.5,435.9 611.0,437.7 611.5,439.7 612.0,441.9 612.5,443.9 613.0,446.0 613.5,448.1 614.0,451.6 614.5,457.0 615.0,463.5 615.5,471.7 616.0,482.3 616.5,494.2 617.0,507.4 617.5,520.2 618.0,532.8 618.5,545.2 619.0,557.4 619.5,569.1 620.0,580.9 620.5,592.8 621.0,605.4 621.5,618.2 622.0,630.8 622.5,642.3 623.0,653.1 623.5,663.6 624.0,674.0 624.5,684.8 625.0,695.9 625.5,707.0 626.0,717.2 626.5,726.3 627.0,734.6 627.5,742.4 628.0,749.8 628.5,756.9 629.0,763.8 629.5,770.4 630.0,776.5 630.5,781.9 631.0,787.0 631.5,791.9 632.0,796.5 632.5,801.1 633.0,805.6 633.5,810.1 634.0,814.6 634.5,818.8 635.0,823.0 635.5,827.0 636.0,830.5 636.5,833.4 637.0,836.1 637.5,838.7 638.0,840.6 638.5,842.1 639.0,843.4 639.5,844.3 640.0,845.0 640.5,845.6 641.0,846.1 641.5,846.4 642.0,846.6 642.5,846.8 643.0,846.8 643.5,846.8 644.0,846.6 644.5,846.4 645.0,845.9 645.5,845.2 646.0,844.3 646.5,843.3 647.0,842.1 647.5,840.8 648.0,839.5 648.5,838.1 649.0,836.5 649.5,834.8 650.0,832.8 650.5,830.7 651.0,828.6 651.5,826.5 652.0,824.4 652.5,821.5 653.0,816.6 653.5,810.3 654.0,802.9 654.5,792.8 655.0,781.1 655.5,768.3 656.0,755.3 656.5,742.6 657.0,730.2 657.5,717.9 658.0,706.1 658.5,694.4 659.0,682.5 659.5,670.2 660.0,657.3 660.5,644.6 661.0,632.8 661.5,621.8 662.0,611.3 662.5,600.9 663.0,590.3 663.5,579.2 664.0,568.0 664.5,557.5 665.0,548.1 665.5,539.6 666.0,531.7 666.5,524.2 667.0,517.0 667.5,510.1 668.0,503.4 668.5,497.1 669.0,491.5 669.5,486.3 670.0,481.4 670.5,476.7 671.0,472.1 671.5,467.6 672.0,463.1 672.5,458.6 673.0,454.3 673.5,450.1 674.0,446.0 674.5,442.4 675.0,439.3 675.5,436.6 676.0,434.0 676.5,431.8 677.0,430.2 677.5,428.9 678.0,427.9 678.5,427.1 679.0,426.5 679.5,426.0 680.0,425.6 680.5,425.4 681.0,425.2 681.5,425.1 682.0,425.1 682.5,425.3 683.0,425.5 683.5,425.8 684.0,426.6 684.5,427.4 685.0,428.4 685.5,429.5 686.0,430.7 686.5,432.1 687.0,433.4 687.5,435.0 688.0,436.6 688.5,438.5 689.0,440.7 689.5,442.8 690.0,444.8 690.5,446.9 691.0,449.4 691.5,453.8 692.0,459.7 692.5,466.7 693.0,476.1 693.5,487.5 694.0,499.8 694.5,513.1 695.0,525.8 695.5,538.3 696.0,550.6 696.5,562.6 697.0,574.3 697.5,586.1 698.0,598.2 698.5,611.0 699.0,623.8 699.5,636.0 700.0,647.1 700.5,657.8 701.0,668.2 701.5,678.7 702.0,689.6 702.5,700.8 703.0,711.6 703.5,721.3 704.0,730.0 704.5,738.1 705.0,745.7 705.5,752.9 706.0,759.9 706.5,766.7 707.0,773.1 707.5,778.9 708.0,784.2 708.5,789.2 709.0,794.0 709.5,798.6 710.0,803.1 710.5,807.6 711.0,812.1 711.5,816.5 712.0,820.7 712.5,824.8 713.0,828.6 713.5,831.8 714.0,834.6 714.5,837.3 715.0,839.6 715.5,841.3 716.0,842.7 716.5,843.8 717.0,844.6 717.5,845.3 718.0,845.8 718.5,846.2 719.0,846.5 719.5,846.7 720.0,846.8 720.5,846.8 721.0,846.7 721.5,846.6 722.0,846.3 722.5,845.6 723.0,844.8 723.5,843.9 724.0,842.8 724.5,841.6 725.0,840.3 725.5,838.9 726.0,837.4 726.5,835.8 727.0,834.0 727.5,831.9 728.0,829.8 728.5,827.7 729.0,825.6 729.5,823.5 730.0,819.6 730.5,814.0 731.0,807.3 731.5,798.7 732.0,787.7 732.5,775.8 733.0,762.5 733.5,749.7 734.0,737.1 734.5,724.8 735.0,712.7 735.5,700.9 736.0,689.2 736.5,677.2 737.0,664.5 737.5,651.7 738.0,639.3 738.5,627.9 739.0,617.1 739.5,606.7 740.0,596.3 740.5,585.4 741.0,574.2 741.5,563.3 742.0,553.2 742.5,544.3 743.0,536.1 743.5,528.3 744.0,521.0 744.5,514.0 745.0,507.1 745.5,500.5 746.0,494.6 746.5,489.2 747.0,484.1 747.5,479.3 748.0,474.7 748.5,470.1 749.0,465.6 749.5,461.1 750.0,456.7 750.5,452.4 751.0,448.3 751.5,444.3 752.0,441.0 752.5,438.1 753.0,435.4 753.5,432.9 754.0,431.1 754.5,429.6 755.0,428.4 755.5,427.5 756.0,426.8 756.5,426.2 757.0,425.8 757.5,425.5 758.0,425.3 758.5,425.2 759.0,425.1 759.5,425.2 760.0,425.3 760.5,425.6 761.0,426.1 761.5,426.9 762.0,427.8 762.5,428.9 763.0,430.0 763.5,431.3 764.0,432.6 764.5,434.1 765.0,435.7 765.5,437.4 766.0,439.5 766.5,441.6 767.0,443.7 767.5,445.8 768.0,447.8 768.5,451.1 769.0,456.3 769.5,462.7 770.0,470.5 770.5,481.0 771.0,492.8 771.5,505.8 772.0,518.7 772.5,531.3 773.0,543.7 773.5,555.9 774.0,567.7 774.5,579.4 775.0,591.3 775.5,603.8 776.0,616.7 776.5,629.3 777.0,641.0 777.5,651.9 778.0,662.3 778.5,672.7 779.0,683.4 779.5,694.6 780.0,705.7 780.5,716.1 781.0,725.2 781.5,733.6 782.0,741.5 782.5,748.9 783.0,756.0 783.5,762.9 784.0,769.6 784.5,775.8 785.0,781.3 785.5,786.4 786.0,791.3 786.5,796.0 787.0,800.6 787.5,805.1 788.0,809.6 788.5,814.0 789.0,818.3 789.5,822.5 790.0,826.5 790.5,830.1 791.0,833.1 791.5,835.7 792.0,838.4 792.5,840.4 793.0,841.9 793.5,843.2 794.0,844.2 794.5,844.9 795.0,845.6 795.5,846.0 796.0,846.4 796.5,846.6 797.0,846.7 797.5,846.8 798.0,846.8 798.5,846.7 799.0,846.4 799.5,846.0 800.0,845.3 800.5,844.4 801.0,843.4 801.5,842.3 802.0,841.0 802.5,839.7 803.0,838.3 803.5,836.7 804.0,835.0 804.5,833.1 805.0,830.9 805.5,828.8 806.0,826.8 806.5,824.7 807.0,822.0 807.5,817.3 808.0,811.1 808.5,803.9 809.0,794.1 809.5,782.5 810.0,770.0 810.5,756.8 811.0,744.1 811.5,731.7 812.0,719.4 812.5,707.5 813.0,695.8 813.5,684.0 814.0,671.7 814.5,658.9 815.0,646.1 815.5,634.1 816.0,623.1 816.5,612.5 817.0,602.1 817.5,591.6 818.0,580.5 818.5,569.3 819.0,558.7 819.5,549.2 820.0,540.6 820.5,532.6 821.0,525.1 821.5,517.9 822.0,510.9 822.5,504.2 823.0,497.8 823.5,492.2 824.0,486.9 824.5,482.0 825.0,477.3 825.5,472.7 826.0,468.1 826.5,463.6 827.0,459.2 827.5,454.8 828.0,450.6 828.5,446.5 829.0,442.8 829.5,439.7 830.0,437.0 830.5,434.3 831.0,432.0 831.5,430.4 832.0,429.1 832.5,428.0 833.0,427.2 833.5,426.6 834.0,426.0 834.5,425.7 835.0,425.4 835.5,425.3 836.0,425.1 836.5,425.1 837.0,425.2 837.5,425.4 838.0,425.8 838.5,426.5 839.0,427.3 839.5,428.3 840.0,429.4 840.5,430.6 841.0,431.9 841.5,433.3 842.0,434.8 842.5,436.4 843.0,438.3 843.5,440.4 844.0,442.5 844.5,444.6 845.0,446.7 845.5,449.0 846.0,453.2 846.5,459.0 847.0,465.8 847.5,474.9 848.0,486.1 848.5,498.2 849.0,511.5 849.5,524.3 850.0,536.8 850.5,549.1 851.0,561.2 851.5,572.9 852.0,584.6 852.5,596.7 853.0,609.5 853.5,622.3 854.0,634.6 854.5,645.8 855.0,656.5 855.5,666.9 856.0,677.4 856.5,688.3 857.0,699.5 857.5,710.4 858.0,720.3 858.5,729.0 859.0,737.1 859.5,744.8 860.0,752.1 860.5,759.1 861.0,765.9 861.5,772.4 862.0,778.3 862.5,783.6 863.0,788.6 863.5,793.4 864.0,798.0 864.5,802.5 865.0,807.1 865.5,811.6 866.0,815.9 866.5,820.2 867.0,824.3 867.5,828.2 868.0,831.5 868.5,834.2 869.0,836.9 869.5,839.4 870.0,841.1 870.5,842.5 871.0,843.7 871.5,844.5 872.0,845.2 872.5,845.8 873.0,846.2 873.5,846.5 874.0,846.7 874.5,846.8 875.0,846.8 875.5,846.8 876.0,846.6 876.5,846.3 877.0,845.7 877.5,844.9 878.0,844.0 878.5,842.9 879.0,841.7 879.5,840.4 880.0,839.1 880.5,837.6 881.0,836.0 881.5,834.2 882.0,832.2 882.5,830.0 883.0,827.9 883.5,825.9 884.0,823.8 884.5,820.1 885.0,814.7 885.5,808.1 886.0,799.9 886.5,789.1 887.0,777.3 887.5,764.0 888.0,751.2 888.5,738.6 889.0,726.2 889.5,714.1 890.0,702.3 890.5,690.6 891.0,678.7 891.5,666.1 892.0,653.2 892.5,640.7 893.0,629.2 893.5,618.4 894.0,607.9 894.5,597.5 895.0,586.8 895.5,575.6 896.0,564.5 896.5,554.3 897.0,545.3 897.5,537.0 898.0,529.2 898.5,521.9 899.0,514.8 899.5,507.9 900.0,501.3 900.5,495.3 901.0,489.8 901.5,484.7 902.0,479.9 902.5,475.2 903.0,470.7 903.5,466.1 904.0,461.6 904.5,457.2 905.0,452.9 905.5,448.8 906.0,444.8 906.5,441.3 907.0,438.5 907.5,435.8 908.0,433.2 908.5,431.3 909.0,429.8 909.5,428.6 910.0,427.6 910.5,426.9 911.0,426.3 911.5,425.8 912.0,425.5 912.5,425.3 913.0,425.2 913.5,425.1 914.0,425.2 914.5,425.3 915.0,425.5 915.5,426.0 916.0,426.8 916.5,427.7 917.0,428.7 917.5,429.9 918.0,431.2 918.5,432.5 919.0,433.9 919.5,435.5 920.0,437.2 920.5,439.2 921.0,441.4 921.5,443.4 922.0,445.5 922.5,447.6 923.0,450.6 923.5,455.6 924.0,461.9 924.5,469.4 925.0,479.6 925.5,491.3 926.0,504.2 926.5,517.2 927.0,529.8 927.5,542.3 928.0,554.5 928.5,566.3 929.0,578.0 929.5,589.9 930.0,602.3 930.5,615.2 931.0,627.8 931.5,639.6 932.0,650.6 932.5,661.1 933.0,671.5 933.5,682.1 934.0,693.2 934.5,704.4 935.0,714.9 935.5,724.2 936.0,732.6 936.5,740.6 937.0,748.1 937.5,755.2 938.0,762.1 938.5,768.8 939.0,775.1 939.5,780.6 940.0,785.8 940.5,790.7 941.0,795.4 941.5,800.0 942.0,804.5 942.5,809.1 943.0,813.5 943.5,817.8 944.0,822.0 944.5,826.1 945.0,829.7 945.5,832.7 946.0,835.4 946.5,838.1 947.0,840.2 947.5,841.8 948.0,843.1 948.5,844.1 949.0,844.9 949.5,845.5 950.0,846.0 950.5,846.3 951.0,846.6 951.5,846.7 952.0,846.8 952.5,846.8 953.0,846.7 953.5,846.5 954.0,846.1 954.5,845.4 955.0,844.5 955.5,843.5 956.0,842.4 956.5,841.2 957.0,839.8 957.5,838.4 958.0,836.9 958.5,835.2 959.0,833.3 959.5,831.2 960.0,829.1 960.5,827.0 961.0,824.9 961.5,822.4 962.0,817.9 962.5,811.9 963.0,804.9 963.5,795.4 964.0,784.0 964.5,771.6 965.0,758.4 965.5,745.6 966.0,733.1 966.5,720.9 967.0,708.9 967.5,697.2 968.0,685.4 968.5,673.2 969.0,660.4 969.5,647.6 970.0,635.5 970.5,624.4 971.0,613.8 971.5,603.4 972.0,592.9 972.5,581.9 973.0,570.7 973.5,559.9 974.0,550.2 974.5,541.6 975.0,533.6 975.5,526.0 976.0,518.7 976.5,511.8 977.0,505.0 977.5,498.6 978.0,492.8 978.5,487.5 979.0,482.6 979.5,477.8 980.0,473.2 980.5,468.7 981.0,464.2 981.5,459.7 982.0,455.3 982.5,451.1 983.0,447.0 983.5,443.2 984.0,440.0 984.5,437.3 985.0,434.6 985.5,432.2 986.0,430.6 986.5,429.2 987.0,428.1 987.5,427.3 988.0,426.6 988.5,426.1 989.0,425.7 989.5,425.5 990.0,425.3 990.5,425.1 991.0,425.1 991.5,425.2 992.0,425.4 992.5,425.7 993.0,426.4 993.5,427.2 994.0,428.1 994.5,429.2 995.0,430.4 995.5,431.7 996.0,433.1 996.5,434.6 997.0,436.2 997.5,438.1 998.0,440.1 998.5,442.3 999.0,444.4 999.5,446.4 1000.0,448.6 1000.5,452.6 1001.0,458.2 1001.5,465.0 1002.0,473.6 1002.5,484.7 1003.0,496.7 1003.5,510.0 1004.0,522.8 1004.5,535.3 1005.0,547.7 1005.5,559.7 1006.0,571.5 1006.5,583.2 1007.0,595.3 1007.5,607.9 1008.0,620.8 1008.5,633.2 1009.0,644.5 1009.5,655.2 1010.0,665.7 1010.5,676.1 1011.0,687.0 1011.5,698.2 1012.0,709.1 1012.5,719.1 1013.0,728.0 1013.5,736.2 1014.0,743.9 1014.5,751.2 1015.0,758.3 1015.5,765.1 1016.0,771.7 1016.5,777.6 1017.0,783.0 1017.5,788.0 1018.0,792.8 1018.5,797.5 1019.0,802.0 1019.5,806.5 1020.0,811.0 1020.5,815.4 1021.0,819.7 1021.5,823.8 1022.0,827.8 1022.5,831.1 1023.0,833.9 1023.5,836.6 1024.0,839.1 1024.5,840.9 1025.0,842.4 1025.5,843.6 1026.0,844.5 1026.5,845.1 1027.0,845.7 1027.5,846.2 1028.0,846.4 1028.5,846.6 1029.0,846.8 1029.5,846.8 1030.0,846.8 1030.5,846.6 1031.0,846.4 1031.5,845.8 1032.0,845.0 1032.5,844.1 1033.0,843.0 1033.5,841.9 1034.0,840.6 1034.5,839.2 1035.0,837.8 1035.5,836.2 1036.0,834.4 1036.5,832.4 1037.0,830.3 1037.5,828.2 1038.0,826.1 1038.5,824.0 1039.0,820.7 1039.5,815.5 1040.0,809.0 1040.5,801.1 1041.0,790.5 1041.5,778.7 1042.0,765.6 1042.5,752.7 1043.0,740.1 1043.5,727.7 1044.0,715.5 1044.5,703.7 1045.0,692.0 1045.5,680.1 1046.0,667.6 1046.5,654.7 1047.0,642.2 1047.5,630.5 1048.0,619.7 1048.5,609.2 1049.0,598.8 1049.5,588.1 1050.0,576.9 1050.5,565.8 1051.0,555.5 1051.5,546.4 1052.0,538.0 1052.5,530.2 1053.0,522.7 1053.5,515.6 1054.0,508.7 1054.5,502.1 1055.0,495.9 1055.5,490.5 1056.0,485.3 1056.5,480.4 1057.0,475.8 1057.5,471.2 1058.0,466.7 1058.5,462.2 1059.0,457.7 1059.5,453.4 1060.0,449.3 1060.5,445.3 1061.0,441.7 1061.5,438.8 1062.0,436.1 1062.5,433.5 1063.0,431.5 1063.5,430.0 1064.0,428.7 1064.5,427.7 1065.0,427.0 1065.5,426.4 1066.0,425.9 1066.5,425.6 1067.0,425.4 1067.5,425.2 1068.0,425.1 1068.5,425.1 1069.0,425.3 1069.5,425.5 1070.0,426.0 1070.5,426.7 1071.0,427.6 1071.5,428.6 1072.0,429.7 1072.5,431.0 1073.0,432.3 1073.5,433.7 1074.0,435.3 1074.5,437.0 1075.0,439.0 1075.5,441.1 1076.0,443.2 1076.5,445.3 1077.0,447.3 1077.5,450.1 1078.0,454.9 1078.5,461.1 1079.0,468.4 1079.5,478.3 1080.0,489.9 1080.5,502.5 1081.0,515.6 1081.5,528.3 1082.0,540.8 1082.5,553.0 1083.0,564.9 1083.5,576.6 1084.0,588.5 1084.5,600.8 1085.0,613.6 1085.5,626.3 1086.0,638.3 1086.5,649.3 1087.0,659.8 1087.5,670.2 1088.0,680.8 1088.5,691.9 1089.0,703.1 1089.5,713.7 1090.0,723.1 1090.5,731.7 1091.0,739.6 1091.5,747.2 1092.0,754.4 1092.5,761.3 1093.0,768.0 1093.5,774.4 1094.0,780.0 1094.5,785.2 1095.0,790.2 1095.5,794.9 1096.0,799.5 1096.5,804.0 1097.0,808.5 1097.5,813.0 1098.0,817.3 1098.5,821.5 1099.0,825.6 1099.5,829.3 1100.0,832.4 1100.5,835.1 1101.0,837.8 1101.5,840.0 1102.0,841.6 1102.5,842.9 1103.0,844.0 1103.5,844.8 1104.0,845.4 1104.5,845.9 1105.0,846.3 1105.5,846.5 1106.0,846.7 1106.5,846.8 1107.0,846.8 1107.5,846.7 1108.0,846.5 1108.5,846.2 1109.0,845.5 1109.5,844.6 1110.0,843.7 1110.5,842.5 1111.0,841.3 1111.5,840.0 1112.0,838.6 1112.5,837.1 1113.0,835.4 1113.5,833.6 1114.0,831.5 1114.5,829.3 1115.0,827.3 1115.5,825.2 1116.0,822.8 1116.5,818.6 1117.0,812.7 1117.5,805.8 1118.0,796.7 1118.5,785.4 1119.0,773.2 1119.5,759.9 1120.0,747.2 1120.5,734.6 1121.0,722.3 1121.5,710.3 1122.0,698.6 1122.5,686.8 1123.0,674.7 1123.5,662.0 1124.0,649.1 1124.5,636.9 1125.0,625.7 1125.5,615.0 1126.0,604.6 1126.5,594.1 1127.0,583.2 1127.5,572.0 1128.0,561.2 1128.5,551.3 1129.0,542.6 1129.5,534.5 1130.0,526.8 1130.5,519.6 1131.0,512.6 1131.5,505.8 1132.0,499.3 1132.5,493.5 1133.0,488.2 1133.5,483.1 1134.0,478.4 1134.5,473.8 1135.0,469.2 1135.5,464.7 1136.0,460.2 1136.5,455.8 1137.0,451.6 1137.5,447.5 1138.0,443.6 1138.5,440.4 1139.0,437.6 1139.5,434.9 1140.0,432.5 1140.5,430.8 1141.0,429.4 1141.5,428.2 1142.0,427.4 1142.5,426.7 1143.0,426.1 1143.5,425.7 1144.0,425.5 1144.5,425.3 1145.0,425.2 1145.5,425.1 1146.0,425.2 1146.5,425.4 1147.0,425.7 1147.5,426.3 1148.0,427.1 1148.5,428.0 1149.0,429.1 1149.5,430.3 1150.0,431.6 1150.5,432.9 1151.0,434.4 1151.5,436.0 1152.0,437.8 1152.5,439.9 1153.0,442.0 1153.5,444.1 1154.0,446.2 1154.5,448.3 1155.0,452.0 1155.5,457.5 1156.0,464.1 1156.5,472.4 1157.0,483.3 1157.5,495.2 1158.0,508.4 1158.5,521.3 1159.0,533.8 1159.5,546.2 1160.0,558.3 1160.5,570.1 1161.0,581.8 1161.5,593.8 1162.0,606.4 1162.5,619.3 1163.0,631.7 1163.5,643.2 1164.0,654.0 1164.5,664.4 1165.0,674.8 1165.5,685.6 1166.0,696.8 1166.5,707.8 1167.0,718.0 1167.5,727.0 1168.0,735.2 1168.5,743.0 1169.0,750.4 1169.5,757.4 1170.0,764.3 1170.5,770.9 1171.0,776.9 1171.5,782.3 1172.0,787.4 1172.5,792.3 1173.0,796.9 1173.5,801.5 1174.0,806.0 1174.5,810.5 1175.0,814.9 1175.5,819.2 1176.0,823.3 1176.5,827.3 1177.0,830.7 1177.5,833.6 1178.0,836.3 1178.5,838.9 1179.0,840.7 1179.5,842.2 1180.0,843.4 1180.5,844.4 1181.0,845.1 1181.5,845.7 1182.0,846.1 1182.5,846.4 1183.0,846.6 1183.5,846.8 1184.0,846.8 1184.5,846.8 1185.0,846.6 1185.5,846.4 1186.0,845.9 1186.5,845.1 1187.0,844.2 1187.5,843.2 1188.0,842.0 1188.5,840.7 1189.0,839.4 1189.5,838.0 1190.0,836.4 1190.5,834.7 1191.0,832.7 1191.5,830.5 1192.0,828.4 1192.5,826.4 1193.0,824.3 1193.5,821.2 1194.0,816.2 1194.5,809.8 1195.0,802.2 1195.5,791.9 1196.0,780.1 1196.5,767.2 1197.0,754.3 1197.5,741.6 1198.0,729.2 1198.5,717.0 1199.0,705.1 1199.5,693.4 1200.0,681.6 1200.5,669.2 1201.0,656.3 1201.5,643.6 1202.0,631.9 1202.5,620.9 1203.0,610.4 1203.5,600.0 1204.0,589.4 1204.5,578.3 1205.0,567.1 1205.5,556.7 1206.0,547.4 1206.5,539.0 1207.0,531.1 1207.5,523.6 1208.0,516.5 1208.5,509.6 1209.0,502.9 1209.5,496.6 1210.0,491.1 1210.5,485.9 1211.0,481.0 1211.5,476.3 1212.0,471.8 1212.5,467.2 1213.0,462.7 1213.5,458.3 1214.0,454.0 1214.5,449.8 1215.0,445.7 1215.5,442.1 1216.0,439.1 1216.5,436.4 1217.0,433.8 1217.5,431.7 1218.0,430.1 1218.5,428.8 1219.0,427.8 1219.5,427.1 1220.0,426.4 1220.5,425.9 1221.0,425.6 1221.5,425.4 1222.0,425.2 1222.5,425.1 1223.0,425.1 1223.5,425.3 1224.0,425.5 1224.5,425.9 1225.0,426.6 1225.5,427.5 1226.0,428.5 1226.5,429.6 1227.0,430.9 1227.5,432.2 1228.0,433.6 1228.5,435.1 1229.0,436.8 1229.5,438.7 1230.0,440.8 1230.5,442.9 1231.0,445.0 1231.5,447.1 1232.0,449.7 1232.5,454.2 1233.0,460.3 1233.5,467.4 1234.0,477.0 1234.5,488.5 1235.0,500.9 1235.5,514.1 1236.0,526.8 1236.5,539.3 1237.0,551.6 1237.5,563.5 1238.0,575.2 1238.5,587.0 1239.0,599.2 1239.5,612.1 1240.0,624.8 1240.5,636.9 1241.0,648.0 1241.5,658.6 1242.0,669.0 1242.5,679.5 1243.0,690.5 1243.5,701.7 1244.0,712.5 1244.5,722.1 1245.0,730.7 1245.5,738.7 1246.0,746.3 1246.5,753.5 1247.0,760.5 1247.5,767.3 1248.0,773.6 1248.5,779.4 1249.0,784.6 1249.5,789.6 1250.0,794.3 1250.5,798.9 1251.0,803.5 1251.5,808.0 1252.0,812.4 1252.5,816.8 1253.0,821.0 1253.5,825.1 1254.0,828.9 1254.5,832.0 1255.0,834.8 1255.5,837.5 1256.0,839.8 1256.5,841.4 1257.0,842.8 1257.5,843.9 1258.0,844.7 1258.5,845.3 1259.0,845.9 1259.5,846.3 1260.0,846.5 1260.5,846.7 1261.0,846.8 1261.5,846.8 1262.0,846.7 1262.5,846.5 1263.0,846.2 1263.5,845.6 1264.0,844.7 1264.5,843.8 1265.0,842.7 1265.5,841.5 1266.0,840.2 1266.5,838.8 1267.0,837.3 1267.5,835.7 1268.0,833.8 1268.5,831.7 1269.0,829.6 1269.5,827.5 1270.0,825.4 1270.5,823.2 1271.0,819.2 1271.5,813.5 1272.0,806.7 1272.5,797.9 1273.0,786.8 1273.5,774.8 1274.0,761.4 1274.5,748.7 1275.0,736.1 1275.5,723.8 1276.0,711.7 1276.5,700.0 1277.0,688.3 1277.5,676.2 1278.0,663.5 1278.5,650.6 1279.0,638.3 1279.5,627.0 1280.0,616.3 1280.5,605.9 1281.0,595.4 1281.5,584.5 1282.0,573.3 1282.5,562.4 1283.0,552.4 1283.5,543.6 1284.0,535.4 1284.5,527.7 1285.0,520.4 1285.5,513.4 1286.0,506.6 1286.5,500.0 1287.0,494.1 1287.5,488.8 1288.0,483.7 1288.5,478.9 1289.0,474.3 1289.5,469.8 1290.0,465.2 1290.5,460.7 1291.0,456.4 1291.5,452.1 1292.0,448.0 1292.5,444.0 1293.0,440.7 1293.5,437.9 1294.0,435.2 1294.5,432.7 1295.0,431.0 1295.5,429.5 1296.0,428.3 1296.5,427.5 1297.0,426.8 1297.5,426.2 1298.0,425.8 1298.5,425.5 1299.0,425.3 1299.5,425.2 1300.0,425.1 1300.5,425.2 1301.0,425.4 1301.5,425.6 1302.0,426.2 1302.5,427.0 1303.0,427.9 1303.5,428.9 1304.0,430.1 1304.5,431.4 1305.0,432.8 1305.5,434.2 1306.0,435.8 1306.5,437.6 1307.0,439.6 1307.5,441.8 1308.0,443.9 1308.5,445.9 1309.0,448.0 1309.5,451.4 1310.0,456.7 1310.5,463.3 1311.0,471.3 1311.5,481.9 1312.0,493.7 1312.5,506.9 1313.0,519.7 1313.5,532.3 1314.0,544.7 1314.5,556.9 1315.0,568.7 1315.5,580.4 1316.0,592.3 1316.5,604.8 1317.0,617.7 1317.5,630.3 1318.0,641.9 1318.5,652.7 1319.0,663.2 1319.5,673.6 1320.0,684.3 1320.5,695.5 1321.0,706.5 1321.5,716.9 1322.0,725.9 1322.5,734.3 1323.0,742.1 1323.5,749.5 1324.0,756.6 1324.5,763.5 1325.0,770.1 1325.5,776.2 1326.0,781.7 1326.5,786.8 1327.0,791.7 1327.5,796.4 1328.0,800.9 1328.5,805.4 1329.0,810.0 1329.5,814.4 1330.0,818.7 1330.5,822.8 1331.0,826.9 1331.5,830.4 1332.0,833.3 1332.5,836.0 1333.0,838.6 1333.5,840.5 1334.0,842.1 1334.5,843.3 1335.0,844.3 1335.5,845.0 1336.0,845.6 1336.5,846.1 1337.0,846.4 1337.5,846.6 1338.0,846.7 1338.5,846.8 1339.0,846.8 1339.5,846.7 1340.0,846.4 1340.5,846.0 1341.0,845.2 1341.5,844.3 1342.0,843.3 1342.5,842.2 1343.0,840.9 1343.5,839.6 1344.0,838.2 1344.5,836.6 1345.0,834.9 1345.5,832.9 1346.0,830.8 1346.5,828.7 1347.0,826.6 1347.5,824.5 1348.0,821.7 1348.5,816.8 1349.0,810.6 1349.5,803.2 1350.0,793.2 1350.5,781.6 1351.0,768.9 1351.5,755.8 1352.0,743.1 1352.5,730.7 1353.0,718.4 1353.5,706.6 1354.0,694.9 1354.5,683.0 1355.0,670.7 1355.5,657.8 1356.0,645.1 1356.5,633.2 1357.0,622.2 1357.5,611.7 1358.0,601.3 1358.5,590.7 1359.0,579.6 1359.5,568.5 1360.0,557.9 1360.5,548.5 1361.0,540.0 1361.5,532.0 1362.0,524.5 1362.5,517.3 1363.0,510.4 1363.5,503.6 1364.0,497.4 1364.5,491.7 1365.0,486.5 1365.5,481.6 1366.0,476.9 1366.5,472.3 1367.0,467.8 1367.5,463.2 1368.0,458.8 1368.5,454.5 1369.0,450.3 1369.5,446.2 1370.0,442.5 1370.5,439.5 1371.0,436.7 1371.5,434.1 1372.0,431.9 1372.5,430.3 1373.0,429.0 1373.5,427.9 1374.0,427.2 1374.5,426.5 1375.0,426.0 1375.5,425.6 1376.0,425.4 1376.5,425.2 1377.0,425.1 1377.5,425.1 1378.0,425.2 1378.5,425.5 1379.0,425.8 1379.5,426.5 1380.0,427.4 1380.5,428.3 1381.0,429.5 1381.5,430.7 1382.0,432.0 1382.5,433.4 1383.0,434.9 1383.5,436.6 1384.0,438.5 1384.5,440.6 1385.0,442.7 1385.5,444.8 1386.0,446.8 1386.5,449.2 1387.0,453.6 1387.5,459.5 1388.0,466.4 1388.5,475.7 1389.0,487.0 1389.5,499.3 1390.0,512.6 1390.5,525.3 1391.0,537.8 1391.5,550.1 1392.0,562.1 1392.5,573.8 1393.0,585.6 1393.5,597.7 1394.0,610.5 1394.5,623.3 1395.0,635.5 1395.5,646.7 1396.0,657.3 1396.5,667.7 1397.0,678.2 1397.5,689.2 1398.0,700.4 1398.5,711.2 1399.0,721.0 1399.5,729.7 1400.0,737.8 1400.5,745.4 1401.0,752.7 1401.5,759.6 1402.0,766.5 1402.5,772.9 1403.0,778.7 1403.5,784.0 1404.0,789.0 1404.5,793.8 1405.0,798.4 1405.5,802.9 1406.0,807.4 1406.5,811.9 1407.0,816.3 1407.5,820.5 1408.0,824.6 1408.5,828.5 1409.0,831.7 1409.5,834.5 1410.0,837.2 1410.5,839.6 1411.0,841.2"/>
<text x="66" y="853.8" text-anchor="end" letter-spacing="-0.5" font-family="Liberation Sans, sans-serif" font-size="12" fill="#fff" shape-rendering="auto">-10</text>
<text x="66" y="810.8" text-anchor="end" letter-spacing="-0.5" font-family="Liberation Sans, sans-serif" font-size="12" fill="#fff" shape-rendering="auto">-8</text>
<text x="66" y="767.8" text-anchor="end" letter-spacing="-0.5" font-family="Liberation Sans, sans-serif" font-size="12" fill="#fff" shape-rendering="auto">-6</text>
<text x="66" y="725.8" text-anchor="end" letter-spacing="-0.5" font-family="Liberation Sans, sans-serif" font-size="12" fill="#fff" shape-rendering="auto">-4</text>
<text x="66" y="682.8" text-anchor="end" letter-spacing="-0.5" font-family="Liberation Sans, sans-serif" font-size="12" fill="#fff" shape-rendering="auto">-2</text>
<text x="66" y="639.8" text-anchor="end" letter-spacing="-0.5" font-family="Liberation Sans, sans-serif" font-size="12" fill="#fff" shape-rendering="auto">0</text>
<text x="66" y="597.8" text-anchor="end" letter-spacing="-0.5" font-family="Liberation Sans, sans-serif" font-size="12" fill="#fff" shape-rendering="auto">2</text>
<text x="66" y="554.8" text-anchor="end" letter-spacing="-0.5" font-family="Liberation Sans, sans-serif" font-size="12" fill="#fff" shape-rendering="auto">4</text>
<text x="66" y="511.8" text-anchor="end" letter-spacing="-0.5" font-family="Liberation Sans, sans-serif" font-size="12" fill="#fff" shape-rendering="auto">6</text>
<text x="66" y="469.8" text-anchor="end" letter-spacing="-0.5" font-family="Liberation Sans, sans-serif" font-size="12" fill="#fff" shape-rendering="auto">8</text>
<text x="66" y="426.8" text-anchor="end" letter-spacing="-0.5" font-family="Liberation Sans, sans-serif" font-size="12" fill="#fff" shape-rendering="auto">10</text>
<text x="66" y="383.8" text-anchor="end" letter-spacing="-0.5" font-family="Liberation Sans, sans-serif" font-size="12" fill="#fff" shape-rendering="auto">12</text>
<text x="66" y="341.8" text-anchor="end" letter-spacing="-0.5" font-family="Liberation Sans, sans-serif" font-size="12" fill="#fff" shape-rendering="auto">14</text>
<text x="66" y="298.8" text-anchor="end" letter-spacing="-0.5" font-family="Liberation Sans, sans-serif" font-size="12" fill="#fff" shape-rendering="auto">16</text>
<text x="66" y="255.8" text-anchor="end" letter-spacing="-0.5" font-family="Liberation Sans, sans-serif" font-size="12" fill="#fff" shape-rendering="auto">18</text>
<text x="66" y="213.8" text-anchor="end" letter-spacing="-0.5" font-family="Liberation Sans, sans-serif" font-size="12" fill="#fff" shape-rendering="auto">20</text>
<text x="66" y="170.8" text-anchor="end" letter-spacing="-0.5" font-family="Liberation Sans, sans-serif" font-size="12" fill="#fff" shape-rendering="auto">22</text>
<text x="66" y="127.8" text-anchor="end" letter-spacing="-0.5" font-family="Liberation Sans, sans-serif" font-size="12" fill="#fff" shape-rendering="auto">24</text>
<text x="66" y="85.8" text-anchor="end" letter-spacing="-0.5" font-family="Liberation Sans, sans-serif" font-size="12" fill="#fff" shape-rendering="auto">26</text>
<text x="66" y="42.8" text-anchor="end" letter-spacing="-0.5" font-family="Liberation Sans, sans-serif" font-size="12" fill="#fff" shape-rendering="auto">28</text>
<text x="203.5" y="893" text-anchor="middle" letter-spacing="-0.6" font-family="Liberation Sans, sans-serif" font-size="12" fill="#fff" shape-rendering="auto">50,0</text>
<text x="337.5" y="893" text-anchor="middle" letter-spacing="-0.6" font-family="Liberation Sans, sans-serif" font-size="12" fill="#fff" shape-rendering="auto">100,0</text>
<text x="471.5" y="893" text-anchor="middle" letter-spacing="-0.6" font-family="Liberation Sans, sans-serif" font-size="12" fill="#fff" shape-rendering="auto">150,0</text>
<text x="605.5" y="893" text-anchor="middle" letter-spacing="-0.6" font-family="Liberation Sans, sans-serif" font-size="12" fill="#fff" shape-rendering="auto">200,0</text>
<text x="740.5" y="893" text-anchor="middle" letter-spacing="-0.6" font-family="Liberation Sans, sans-serif" font-size="12" fill="#fff" shape-rendering="auto">250,0</text>
<text x="874.5" y="893" text-anchor="middle" letter-spacing="-0.6" font-family="Liberation Sans, sans-serif" font-size="12" fill="#fff" shape-rendering="auto">300,0</text>
<text x="1008.5" y="893" text-anchor="middle" letter-spacing="-0.6" font-family="Liberation Sans, sans-serif" font-size="12" fill="#fff" shape-rendering="auto">350,0</text>
<text x="1142.5" y="893" text-anchor="middle" letter-spacing="-0.6" font-family="Liberation Sans, sans-serif" font-size="12" fill="#fff" shape-rendering="auto">400,0</text>
<text x="1276.5" y="893" text-anchor="middle" letter-spacing="-0.6" font-family="Liberation Sans, sans-serif" font-size="12" fill="#fff" shape-rendering="auto">450,0</text>
<text x="1411.5" y="893" text-anchor="middle" letter-spacing="-0.6" font-family="Liberation Sans, sans-serif" font-size="12" fill="#fff" shape-rendering="auto">500,0</text>
<text x="41" y="23" letter-spacing="-0.13" font-family="Liberation Sans, sans-serif" font-size="12" fill="#fff" shape-rendering="auto">Voltage (V)</text>
<text x="1441" y="23" text-anchor="end" font-family="Liberation Sans, sans-serif" font-size="12" fill="#fff" shape-rendering="auto">Courant (A)</text>
<text x="740.5" y="910" text-anchor="middle" font-family="Liberation Sans, sans-serif" font-size="12" fill="#fff" shape-rendering="auto">Temps (ms)</text>
</svg>

<div id="log" class="abs"><span class="tx">Reference value :  2.02587e-01</span>
<div class="sb"><svg width="17" height="19" viewBox="0 0 17 19"><path d="M3.5 12.8 L7.2 9.1 L10.9 12.8" fill="none" stroke="#505050" stroke-width="1.9"/></svg></div></div>

<div id="filter" class="abs"><svg class="abs" style="left:4px;top:3px" width="16" height="16" viewBox="0 0 16 16"><circle cx="6.4" cy="5.7" r="4.4" fill="none" stroke="#4c4c4c" stroke-width="2"/><path d="M9.6 8.9 L14.3 13.4" stroke="#4c4c4c" stroke-width="2.3" fill="none"/></svg><span>Filtre</span></div>

<div id="list" class="abs">
<div class="hdr"><span style="left:3px">Signal</span><i style="left:206px"></i><span style="left:208px;letter-spacing:-0.65px">Tracer</span><i style="left:239px"></i><span style="left:240px;letter-spacing:-0.4px">Couleur</span></div>
<div id="rows">
<div class="row"><span class="nm" style="letter-spacing:-0.55px">V(28V)</span><span class="cb"></span></div>
<div class="row"><span class="nm" style="letter-spacing:-0.4px">V(Net-_C2-Pad2_)</span><span class="cb"></span></div>
<div class="row"><span class="nm" style="letter-spacing:-0.4px">V(Net-_C3-Pad2_)</span><span class="cb"></span></div>
<div class="row"><span class="nm" style="letter-spacing:-0.4px">V(Net-_C4-Pad2_)</span><span class="cb"></span></div>
<div class="row"><span class="nm" style="letter-spacing:-0.4px">V(Net-_L1-Pad1_)</span><span class="cb"></span></div>
<div class="row"><span class="nm" style="letter-spacing:-0.4px">V(Net-_R2-Pad2_)</span><span class="cb"></span></div>
<div class="row"><span class="nm" style="letter-spacing:-0.2px">V(Net-_U1-+_)</span><span class="cb"></span></div>
<div class="row"><span class="nm" style="letter-spacing:-0.2px">V(Net-_U2--_)</span><span class="cb"></span></div>
<div class="row"><span class="nm" style="letter-spacing:-0.2px">V(Net-_U3--_)</span><span class="cb"></span></div>
<div class="row"><span class="nm">V(Vmotor)</span><span class="cb on"><svg width="13" height="13" viewBox="0 0 13 13"><path d="M2.2 6.3 L5.1 9.2 L10.6 3.4" fill="none" stroke="#333" stroke-width="1.3"/></svg></span><i class="sw" style="background:#984ea3"></i></div>
<div class="row"><span class="nm">V(VoutAmp1)</span><span class="cb on"><svg width="13" height="13" viewBox="0 0 13 13"><path d="M2.2 6.3 L5.1 9.2 L10.6 3.4" fill="none" stroke="#333" stroke-width="1.3"/></svg></span><i class="sw" style="background:#4daf4a"></i></div>
<div class="row"><span class="nm">V(VoutAop1)</span><span class="cb on"><svg width="13" height="13" viewBox="0 0 13 13"><path d="M2.2 6.3 L5.1 9.2 L10.6 3.4" fill="none" stroke="#333" stroke-width="1.3"/></svg></span><i class="sw" style="background:#377eb8"></i></div>
<div class="row"><span class="nm">V(VoutAop2)</span><span class="cb on"><svg width="13" height="13" viewBox="0 0 13 13"><path d="M2.2 6.3 L5.1 9.2 L10.6 3.4" fill="none" stroke="#333" stroke-width="1.3"/></svg></span><i class="sw" style="background:#e41a1c"></i></div>
<div class="row"><span class="nm" style="letter-spacing:-0.4px">I(C1)</span><span class="cb"></span></div>
<div class="row"><span class="nm" style="letter-spacing:-0.4px">I(C2)</span><span class="cb"></span></div>
<div class="row"><span class="nm" style="letter-spacing:-0.4px">I(C3)</span><span class="cb"></span></div>
<div class="row"><span class="nm" style="letter-spacing:-0.4px">I(C4)</span><span class="cb"></span></div>
<div class="row"><span class="nm" style="letter-spacing:-0.4px">I(C5)</span><span class="cb"></span></div>
<div class="row"><span class="nm" style="letter-spacing:-0.4px">I(D1)</span><span class="cb"></span></div>
<div class="row"><span class="nm" style="letter-spacing:-0.4px">I(D2)</span><span class="cb"></span></div>
<div class="row"><span class="nm" style="letter-spacing:-0.4px">I(L1)</span><span class="cb"></span></div>
<div class="row"><span class="nm" style="letter-spacing:-0.4px">I(R1)</span><span class="cb"></span></div>
<div class="row"><span class="nm" style="letter-spacing:-0.4px">I(R2)</span><span class="cb"></span></div>
<div class="row"><span class="nm" style="letter-spacing:-0.4px">I(R3)</span><span class="cb"></span></div>
<div class="row"><span class="nm" style="letter-spacing:-0.4px">I(R4)</span><span class="cb"></span></div>
<div class="row"><span class="nm" style="letter-spacing:-0.4px">I(R5)</span><span class="cb"></span></div>
<div class="row"><span class="nm" style="letter-spacing:-0.4px">I(R6)</span><span class="cb"></span></div>
<div class="row"><span class="nm" style="letter-spacing:-0.4px">I(R7)</span><span class="cb"></span></div>
<div class="row"><span class="nm" style="letter-spacing:-0.4px">I(R8)</span><span class="cb"></span></div>
<div class="row"><span class="nm" style="letter-spacing:-0.4px">I(R9)</span><span class="cb"></span></div>
<div class="row"><span class="nm" style="letter-spacing:-0.4px">I(R10)</span><span class="cb"></span></div>
<div class="row"><span class="nm" style="letter-spacing:-0.4px">I(R11)</span><span class="cb"></span></div>
<div class="row"><span class="nm" style="letter-spacing:-0.4px">I(R12)</span><span class="cb"></span></div>
<div class="row"><span class="nm" style="letter-spacing:-0.4px">I(V1)</span><span class="cb"></span></div>
</div>
<i class="vl" style="left:206px"></i><i class="vl" style="left:239px"></i>
</div>

<div id="cur" class="abs">
<div class="hdr"><span style="left:3px">Curseur</span><i style="left:44px"></i><span style="left:109px">Signal</span><i style="left:206px"></i><span style="left:220px;letter-spacing:-0.1px">Temps (ms)</span></div>
</div>

<div id="mes" class="abs">
<div class="hdr" style="height:17px"><span style="left:3px;top:2px">Mesure</span></div>
<div class="abs" style="left:0;top:35px;width:100%;height:1px;background:#f0f0f0"></div>
</div>
</body>
</html>
